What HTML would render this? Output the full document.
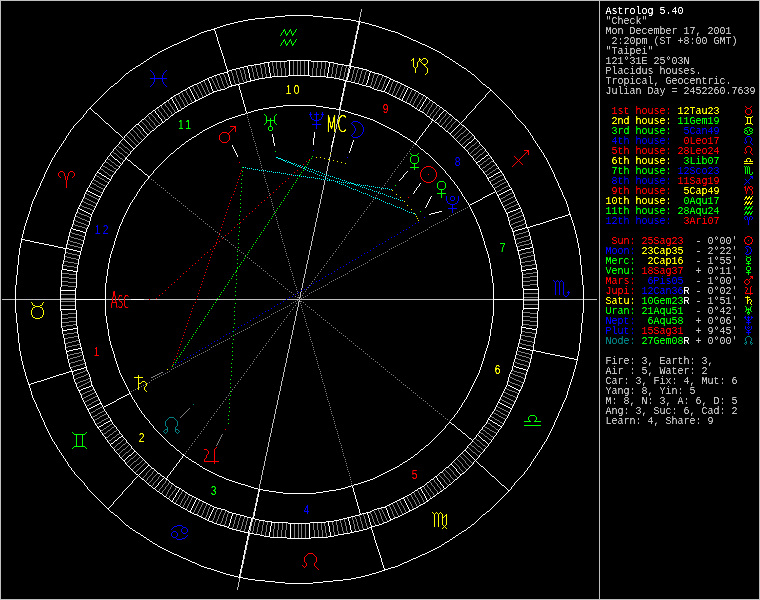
<!DOCTYPE html><html><head><meta charset="utf-8"><title>Astrolog 5.40</title><style>
html,body{margin:0;padding:0;background:#000;}body{width:760px;height:600px;overflow:hidden;}
svg{display:block;}
text{white-space:pre;}
.t{font-family:"Liberation Mono",monospace;font-size:10px;}
.h{font-family:"Liberation Sans",sans-serif;font-size:12px;text-anchor:middle;}
.o{font-family:"DejaVu Sans","Liberation Sans",sans-serif;font-weight:200;font-size:23px;text-anchor:middle;}
</style></head><body>
<svg width="760" height="600" viewBox="0 0 760 600">
<defs><filter id="tx" filterUnits="userSpaceOnUse" x="0" y="0" width="760" height="600" color-interpolation-filters="sRGB"><feComponentTransfer><feFuncA type="linear" slope="2.2" intercept="-0.5"/></feComponentTransfer></filter><filter id="ty" filterUnits="userSpaceOnUse" x="0" y="0" width="760" height="600" color-interpolation-filters="sRGB"><feComponentTransfer><feFuncA type="linear" slope="3" intercept="-0.4"/></feComponentTransfer></filter></defs>
<rect width="760" height="600" fill="#000"/>
<g shape-rendering="crispEdges">
<path fill="#c0c0c0" d="M0 0h760v1h-760zM2 299h13v1h-13zM16 299h44v1h-44zM61 299h14v1h-14zM106 299h25v1h-25zM144 299h5v1h-5zM150 299h46v1h-46zM197 299h38v1h-38zM236 299h50v1h-50zM287 299h12v1h-12zM300 299h193v1h-193zM524 299h14v1h-14zM539 299h44v1h-44zM584 299h13v1h-13zM0 599h760v1h-760zM0 1v598h1v-598zM237 587v3h1v-3zM238 582v5h1v-5zM239 578v4h1v-4zM240 574v3h1v-3zM241 569v4h1v-4zM242 565v3h1v-3zM243 560v4h1v-4zM244 555v4h1v-4zM245 550v4h1v-4zM246 545v5h1v-5zM247 541v4h1v-4zM248 536v4h1v-4zM249 531v2h1v-2zM249 534v2h1v-2zM250 526v5h1v-5zM251 522v4h1v-4zM252 517v1h1v-1zM252 519v3h1v-3zM253 512v4h1v-4zM254 508v3h1v-3zM255 503v3h1v-3zM256 498v4h1v-4zM257 494v3h1v-3zM258 490v2h1v-2zM259 484v5h1v-5zM260 480v4h1v-4zM261 475v5h1v-5zM262 470v5h1v-5zM263 466v4h1v-4zM264 461v5h1v-5zM265 456v5h1v-5zM266 452v4h1v-4zM267 447v5h1v-5zM268 442v5h1v-5zM269 437v5h1v-5zM270 433v4h1v-4zM271 428v5h1v-5zM272 423v5h1v-5zM273 419v4h1v-4zM274 414v5h1v-5zM275 409v5h1v-5zM276 405v4h1v-4zM277 400v5h1v-5zM278 395v5h1v-5zM279 391v4h1v-4zM280 386v5h1v-5zM281 381v5h1v-5zM282 377v4h1v-4zM283 372v5h1v-5zM284 367v5h1v-5zM285 363v4h1v-4zM286 358v5h1v-5zM287 353v5h1v-5zM288 349v4h1v-4zM289 344v5h1v-5zM290 339v5h1v-5zM291 335v4h1v-4zM292 330v5h1v-5zM293 325v5h1v-5zM294 321v4h1v-4zM295 316v5h1v-5zM296 311v5h1v-5zM297 307v4h1v-4zM298 302v5h1v-5zM299 297v2h1v-2zM299 300v2h1v-2zM300 292v5h1v-5zM301 288v2h1v-2zM301 291v1h1v-1zM302 283v5h1v-5zM303 278v5h1v-5zM304 274v4h1v-4zM305 269v5h1v-5zM306 264v5h1v-5zM307 260v4h1v-4zM308 255v5h1v-5zM309 250v5h1v-5zM310 246v4h1v-4zM311 241v5h1v-5zM312 236v5h1v-5zM313 232v4h1v-4zM314 227v5h1v-5zM315 222v5h1v-5zM316 218v4h1v-4zM317 213v5h1v-5zM318 208v5h1v-5zM319 204v4h1v-4zM320 199v5h1v-5zM321 194v5h1v-5zM322 190v4h1v-4zM323 185v5h1v-5zM324 180v5h1v-5zM325 176v1h1v-1zM325 178v1h1v-1zM326 171v3h1v-3zM326 175v1h1v-1zM327 166v5h1v-5zM328 162v4h1v-4zM329 157v2h1v-2zM329 160v2h1v-2zM330 152v1h1v-1zM330 154v3h1v-3zM331 148v4h1v-4zM332 145v2h1v-2zM333 141v2h1v-2zM334 133v2h1v-2zM334 137v1h1v-1zM335 129v4h1v-4zM336 124v5h1v-5zM337 119v5h1v-5zM338 115v4h1v-4zM339 110v5h1v-5zM340 107v2h1v-2zM341 102v3h1v-3zM342 97v4h1v-4zM343 93v3h1v-3zM344 88v3h1v-3zM345 83v4h1v-4zM346 77v3h1v-3zM346 81v1h1v-1zM347 73v4h1v-4zM348 68v5h1v-5zM349 63v2h1v-2zM349 66v2h1v-2zM350 59v4h1v-4zM351 54v4h1v-4zM352 49v5h1v-5zM353 45v4h1v-4zM354 40v4h1v-4zM355 35v4h1v-4zM356 31v3h1v-3zM357 26v4h1v-4zM358 22v3h1v-3zM359 17v4h1v-4zM360 12v5h1v-5zM361 9v3h1v-3zM599 1v598h1v-598zM759 1v598h1v-598z"/>
<path fill="#fff" d="M285 15h28v1h-28zM275 16h10v1h-10zM313 16h10v1h-10zM265 17h10v1h-10zM323 17h10v1h-10zM255 18h10v1h-10zM333 18h10v1h-10zM248 19h7v1h-7zM343 19h8v1h-8zM243 20h5v1h-5zM351 20h5v1h-5zM238 21h5v1h-5zM356 21h5v1h-5zM234 22h4v1h-4zM361 22h4v1h-4zM230 23h4v1h-4zM365 23h4v1h-4zM226 24h4v1h-4zM369 24h3v1h-3zM223 25h3v1h-3zM372 25h4v1h-4zM220 26h3v1h-3zM376 26h3v1h-3zM217 27h3v1h-3zM379 27h3v1h-3zM214 28h3v1h-3zM382 28h3v1h-3zM211 29h4v1h-4zM385 29h3v1h-3zM207 30h4v1h-4zM388 30h3v1h-3zM204 31h3v1h-3zM391 31h4v1h-4zM201 32h3v1h-3zM395 32h3v1h-3zM199 33h2v1h-2zM398 33h2v1h-2zM197 34h2v1h-2zM400 34h2v1h-2zM195 35h2v1h-2zM402 35h2v1h-2zM192 36h3v1h-3zM404 36h3v1h-3zM190 37h2v1h-2zM407 37h2v1h-2zM188 38h2v1h-2zM409 38h2v1h-2zM186 39h2v1h-2zM411 39h2v1h-2zM183 40h3v1h-3zM413 40h3v1h-3zM181 41h2v1h-2zM416 41h2v1h-2zM179 42h2v1h-2zM418 42h2v1h-2zM177 43h2v1h-2zM420 43h2v1h-2zM174 44h3v1h-3zM422 44h3v1h-3zM172 45h2v1h-2zM425 45h2v1h-2zM170 46h2v1h-2zM427 46h2v1h-2zM168 47h2v1h-2zM429 47h2v1h-2zM166 48h2v1h-2zM431 48h2v1h-2zM164 49h2v1h-2zM433 49h2v1h-2zM162 50h2v1h-2zM435 50h2v1h-2zM160 51h2v1h-2zM437 51h2v1h-2zM158 52h2v1h-2zM439 52h2v1h-2zM155 54h2v1h-2zM442 54h2v1h-2zM153 55h2v1h-2zM445 56h2v1h-2zM150 57h2v1h-2zM447 57h2v1h-2zM147 59h2v1h-2zM450 59h2v1h-2zM287 60h24v1h-24zM144 61h2v1h-2zM270 61h17v1h-17zM311 61h17v1h-17zM453 61h2v1h-2zM264 62h6v1h-6zM328 62h6v1h-6zM141 63h2v1h-2zM260 63h4v1h-4zM334 63h4v1h-4zM456 63h2v1h-2zM254 64h6v1h-6zM338 64h6v1h-6zM138 65h2v1h-2zM248 65h6v1h-6zM344 65h7v1h-7zM459 65h2v1h-2zM136 66h2v1h-2zM244 66h4v1h-4zM350 66h4v1h-4zM240 67h4v1h-4zM354 67h5v1h-5zM462 67h2v1h-2zM133 68h2v1h-2zM236 68h4v1h-4zM359 68h4v1h-4zM464 68h2v1h-2zM232 69h4v1h-4zM363 69h4v1h-4zM130 70h2v1h-2zM229 70h3v1h-3zM367 70h2v1h-2zM227 71h2v1h-2zM369 71h3v1h-3zM468 71h2v1h-2zM224 72h4v1h-4zM372 72h3v1h-3zM126 73h2v1h-2zM220 73h4v1h-4zM375 73h4v1h-4zM217 74h3v1h-3zM379 74h3v1h-3zM472 74h2v1h-2zM214 75h3v1h-3zM288 75h22v1h-22zM382 75h2v1h-2zM212 76h2v1h-2zM272 76h16v1h-16zM310 76h16v1h-16zM384 76h3v1h-3zM209 77h3v1h-3zM265 77h7v1h-7zM326 77h8v1h-8zM387 77h2v1h-2zM207 78h2v1h-2zM259 78h6v1h-6zM334 78h5v1h-5zM389 78h2v1h-2zM205 79h2v1h-2zM255 79h4v1h-4zM339 79h4v1h-4zM390 79h3v1h-3zM203 80h2v1h-2zM250 80h5v1h-5zM343 80h4v1h-4zM393 80h2v1h-2zM201 81h2v1h-2zM247 81h4v1h-4zM347 81h4v1h-4zM395 81h3v1h-3zM199 82h2v1h-2zM244 82h3v1h-3zM351 82h4v1h-4zM398 82h2v1h-2zM115 83h2v1h-2zM197 83h2v1h-2zM240 83h4v1h-4zM355 83h4v1h-4zM400 83h2v1h-2zM194 84h3v1h-3zM236 84h4v1h-4zM359 84h3v1h-3zM402 84h2v1h-2zM483 84h2v1h-2zM192 85h2v1h-2zM231 85h5v1h-5zM362 85h4v1h-4zM404 85h2v1h-2zM111 86h2v1h-2zM190 86h2v1h-2zM229 86h3v1h-3zM366 86h4v1h-4zM406 86h2v1h-2zM188 87h2v1h-2zM227 87h2v1h-2zM370 87h2v1h-2zM408 87h2v1h-2zM487 87h2v1h-2zM225 88h2v1h-2zM372 88h2v1h-2zM410 88h2v1h-2zM185 89h2v1h-2zM221 89h4v1h-4zM374 89h3v1h-3zM412 89h2v1h-2zM183 90h2v1h-2zM217 90h4v1h-4zM377 90h4v1h-4zM414 90h2v1h-2zM490 90h2v1h-2zM181 91h2v1h-2zM213 91h4v1h-4zM381 91h4v1h-4zM416 91h2v1h-2zM212 92h2v1h-2zM385 92h2v1h-2zM178 93h2v1h-2zM210 93h2v1h-2zM387 93h2v1h-2zM419 93h2v1h-2zM176 94h2v1h-2zM208 94h2v1h-2zM389 94h2v1h-2zM421 94h2v1h-2zM174 95h2v1h-2zM206 95h2v1h-2zM391 95h2v1h-2zM423 95h2v1h-2zM204 96h2v1h-2zM393 96h2v1h-2zM171 97h2v1h-2zM202 97h2v1h-2zM395 97h2v1h-2zM426 97h2v1h-2zM170 98h2v1h-2zM200 98h2v1h-2zM397 98h2v1h-2zM198 99h2v1h-2zM399 99h2v1h-2zM167 100h2v1h-2zM195 100h3v1h-3zM401 100h2v1h-2zM430 100h2v1h-2zM194 101h2v1h-2zM403 101h2v1h-2zM164 102h2v1h-2zM192 102h2v1h-2zM405 102h2v1h-2zM433 102h2v1h-2zM190 103h2v1h-2zM407 103h2v1h-2zM188 104h2v1h-2zM409 104h2v1h-2zM160 105h2v1h-2zM283 105h33v1h-33zM437 105h2v1h-2zM185 106h2v1h-2zM276 106h7v1h-7zM316 106h7v1h-7zM412 106h2v1h-2zM157 107h2v1h-2zM269 107h7v1h-7zM323 107h6v1h-6zM440 107h2v1h-2zM89 108h2v1h-2zM182 108h2v1h-2zM263 108h6v1h-6zM329 108h7v1h-7zM415 108h2v1h-2zM258 109h5v1h-5zM336 109h5v1h-5zM153 110h2v1h-2zM178 110h3v1h-3zM254 110h4v1h-4zM341 110h4v1h-4zM418 110h2v1h-2zM444 110h2v1h-2zM177 111h2v1h-2zM251 111h3v1h-3zM345 111h3v1h-3zM420 111h2v1h-2zM175 112h2v1h-2zM248 112h3v1h-3zM348 112h3v1h-3zM422 112h2v1h-2zM95 113h2v1h-2zM149 113h2v1h-2zM351 113h3v1h-3zM241 114h4v1h-4zM354 114h4v1h-4zM449 114h2v1h-2zM171 115h2v1h-2zM238 115h3v1h-3zM358 115h3v1h-3zM235 116h3v1h-3zM361 116h3v1h-3zM427 116h2v1h-2zM232 117h3v1h-3zM364 117h3v1h-3zM229 118h3v1h-3zM367 118h3v1h-3zM142 119h2v1h-2zM166 119h2v1h-2zM226 119h3v1h-3zM370 119h3v1h-3zM431 119h2v1h-2zM455 119h2v1h-2zM224 120h2v1h-2zM373 120h2v1h-2zM432 120h2v1h-2zM222 121h2v1h-2zM375 121h2v1h-2zM162 122h2v1h-2zM219 122h3v1h-3zM377 122h2v1h-2zM435 122h2v1h-2zM106 123h2v1h-2zM217 123h2v1h-2zM379 123h2v1h-2zM136 124h3v1h-3zM215 124h2v1h-2zM381 124h2v1h-2zM158 125h2v1h-2zM213 125h2v1h-2zM383 125h2v1h-2zM462 125h2v1h-2zM211 126h2v1h-2zM385 126h2v1h-2zM440 126h2v1h-2zM209 127h2v1h-2zM387 127h2v1h-2zM207 128h2v1h-2zM389 128h2v1h-2zM205 129h2v1h-2zM391 129h2v1h-2zM152 130h2v1h-2zM203 130h2v1h-2zM393 130h2v1h-2zM395 131h2v1h-2zM446 131h2v1h-2zM116 132h2v1h-2zM200 132h2v1h-2zM397 132h2v1h-2zM449 133h2v1h-2zM147 134h2v1h-2zM197 134h2v1h-2zM400 134h2v1h-2zM194 136h2v1h-2zM403 136h2v1h-2zM192 137h2v1h-2zM405 137h2v1h-2zM474 138h2v1h-2zM189 139h2v1h-2zM408 139h2v1h-2zM186 141h2v1h-2zM411 141h2v1h-2zM469 142h2v1h-2zM414 143h2v1h-2zM182 144h2v1h-2zM415 144h2v1h-2zM463 147h2v1h-2zM133 148h2v1h-2zM177 148h2v1h-2zM421 149h2v1h-2zM171 153h2v1h-2zM426 153h2v1h-2zM486 155h2v1h-2zM125 158h2v1h-2zM482 158h2v1h-2zM115 159h2v1h-2zM128 160h2v1h-2zM478 161h2v1h-2zM476 162h2v1h-2zM134 165h2v1h-2zM139 169h2v1h-2zM500 171h2v1h-2zM97 172h2v1h-2zM498 172h2v1h-2zM99 173h2v1h-2zM496 173h2v1h-2zM145 174h2v1h-2zM494 174h2v1h-2zM102 175h2v1h-2zM104 176h2v1h-2zM148 176h2v1h-2zM491 176h2v1h-2zM489 177h2v1h-2zM107 178h2v1h-2zM487 178h2v1h-2zM109 179h2v1h-2zM509 189h3v1h-3zM86 190h2v1h-2zM507 190h2v1h-2zM88 191h2v1h-2zM505 191h2v1h-2zM90 192h2v1h-2zM493 192h2v1h-2zM503 192h2v1h-2zM92 193h2v1h-2zM491 193h2v1h-2zM501 193h2v1h-2zM94 194h2v1h-2zM489 194h2v1h-2zM499 194h2v1h-2zM96 195h2v1h-2zM487 195h2v1h-2zM497 195h2v1h-2zM98 196h3v1h-3zM485 196h2v1h-2zM483 197h2v1h-2zM480 199h2v1h-2zM478 200h2v1h-2zM476 201h2v1h-2zM474 202h2v1h-2zM472 203h2v1h-2zM470 204h2v1h-2zM78 208h2v1h-2zM518 208h3v1h-3zM80 209h2v1h-2zM516 209h2v1h-2zM82 210h2v1h-2zM513 210h3v1h-3zM84 211h2v1h-2zM439 211h3v1h-3zM510 211h3v1h-3zM86 212h2v1h-2zM435 212h4v1h-4zM508 212h2v1h-2zM88 213h2v1h-2zM431 213h4v1h-4zM506 213h2v1h-2zM90 214h2v1h-2zM429 214h2v1h-2zM568 214h3v1h-3zM565 215h3v1h-3zM562 216h3v1h-3zM558 217h4v1h-4zM555 218h3v1h-3zM552 219h3v1h-3zM549 220h3v1h-3zM546 221h3v1h-3zM543 222h3v1h-3zM540 223h3v1h-3zM536 224h4v1h-4zM533 225h3v1h-3zM530 226h3v1h-3zM525 227h5v1h-5zM71 228h2v1h-2zM522 228h3v1h-3zM73 229h3v1h-3zM518 229h4v1h-4zM76 230h4v1h-4zM515 230h3v1h-3zM80 231h3v1h-3zM512 231h3v1h-3zM83 232h3v1h-3zM21 239h4v1h-4zM25 240h5v1h-5zM30 241h4v1h-4zM34 242h5v1h-5zM39 243h5v1h-5zM44 244h5v1h-5zM49 245h5v1h-5zM54 246h4v1h-4zM58 247h5v1h-5zM530 247h3v1h-3zM63 248h6v1h-6zM525 248h5v1h-5zM69 249h4v1h-4zM521 249h4v1h-4zM73 250h4v1h-4zM517 250h4v1h-4zM77 251h4v1h-4zM532 268h5v1h-5zM62 269h5v1h-5zM526 269h6v1h-6zM67 270h6v1h-6zM521 270h5v1h-5zM73 271h5v1h-5zM523 289h16v1h-16zM60 290h16v1h-16zM75 299h31v1h-31zM131 299h13v1h-13zM493 299h31v1h-31zM523 308h16v1h-16zM60 309h16v1h-16zM521 327h5v1h-5zM73 328h5v1h-5zM526 328h6v1h-6zM67 329h6v1h-6zM532 329h5v1h-5zM62 330h5v1h-5zM519 347h3v1h-3zM78 348h4v1h-4zM522 348h4v1h-4zM73 349h5v1h-5zM526 349h4v1h-4zM69 350h4v1h-4zM530 350h6v1h-6zM66 351h3v1h-3zM536 351h5v1h-5zM541 352h4v1h-4zM545 353h5v1h-5zM550 354h5v1h-5zM555 355h5v1h-5zM560 356h5v1h-5zM565 357h4v1h-4zM569 358h5v1h-5zM574 359h4v1h-4zM514 366h2v1h-2zM84 367h3v1h-3zM516 367h3v1h-3zM81 368h3v1h-3zM519 368h4v1h-4zM77 369h4v1h-4zM523 369h3v1h-3zM74 370h3v1h-3zM526 370h2v1h-2zM69 371h5v1h-5zM66 372h3v1h-3zM63 373h3v1h-3zM59 374h4v1h-4zM56 375h3v1h-3zM53 376h3v1h-3zM50 377h3v1h-3zM47 378h3v1h-3zM44 379h3v1h-3zM41 380h3v1h-3zM37 381h4v1h-4zM34 382h3v1h-3zM31 383h3v1h-3zM28 384h3v1h-3zM91 385h2v1h-2zM508 385h2v1h-2zM89 386h2v1h-2zM510 386h2v1h-2zM86 387h3v1h-3zM512 387h2v1h-2zM83 388h3v1h-3zM514 388h2v1h-2zM81 389h2v1h-2zM516 389h2v1h-2zM78 390h3v1h-3zM518 390h3v1h-3zM129 393h2v1h-2zM127 394h2v1h-2zM125 395h2v1h-2zM123 396h2v1h-2zM121 397h2v1h-2zM119 398h2v1h-2zM117 399h2v1h-2zM114 401h2v1h-2zM112 402h2v1h-2zM498 402h2v1h-2zM99 403h3v1h-3zM110 403h2v1h-2zM500 403h2v1h-2zM97 404h2v1h-2zM108 404h2v1h-2zM502 404h2v1h-2zM95 405h2v1h-2zM106 405h2v1h-2zM504 405h2v1h-2zM93 406h2v1h-2zM104 406h2v1h-2zM506 406h2v1h-2zM91 407h2v1h-2zM508 407h2v1h-2zM89 408h2v1h-2zM510 408h2v1h-2zM87 409h2v1h-2zM488 419h2v1h-2zM110 420h2v1h-2zM490 420h2v1h-2zM108 421h2v1h-2zM106 422h2v1h-2zM449 422h2v1h-2zM493 422h2v1h-2zM104 423h2v1h-2zM495 423h2v1h-2zM452 424h2v1h-2zM101 425h2v1h-2zM498 425h2v1h-2zM99 426h2v1h-2zM500 426h2v1h-2zM97 427h2v1h-2zM458 429h2v1h-2zM463 433h2v1h-2zM121 436h2v1h-2zM119 437h2v1h-2zM469 438h2v1h-2zM115 440h2v1h-2zM483 440h2v1h-2zM111 443h2v1h-2zM171 445h2v1h-2zM426 445h2v1h-2zM421 449h2v1h-2zM177 450h2v1h-2zM464 450h2v1h-2zM134 451h2v1h-2zM182 454h2v1h-2zM415 454h2v1h-2zM129 455h2v1h-2zM183 455h2v1h-2zM186 457h2v1h-2zM411 457h2v1h-2zM189 459h2v1h-2zM408 459h2v1h-2zM123 460h2v1h-2zM192 461h2v1h-2zM405 461h2v1h-2zM194 462h2v1h-2zM403 462h2v1h-2zM197 464h2v1h-2zM400 464h2v1h-2zM450 464h2v1h-2zM148 465h2v1h-2zM200 466h2v1h-2zM397 466h2v1h-2zM481 466h2v1h-2zM395 467h2v1h-2zM446 467h2v1h-2zM152 468h2v1h-2zM203 468h2v1h-2zM393 468h2v1h-2zM205 469h2v1h-2zM391 469h2v1h-2zM207 470h2v1h-2zM389 470h2v1h-2zM209 471h2v1h-2zM387 471h2v1h-2zM211 472h2v1h-2zM385 472h2v1h-2zM440 472h2v1h-2zM158 473h2v1h-2zM213 473h2v1h-2zM383 473h2v1h-2zM462 473h2v1h-2zM136 474h2v1h-2zM215 474h2v1h-2zM381 474h2v1h-2zM460 474h2v1h-2zM217 475h2v1h-2zM379 475h2v1h-2zM162 476h2v1h-2zM219 476h3v1h-3zM377 476h2v1h-2zM435 476h2v1h-2zM492 476h2v1h-2zM222 477h2v1h-2zM375 477h2v1h-2zM165 478h2v1h-2zM224 478h2v1h-2zM373 478h2v1h-2zM142 479h2v1h-2zM166 479h2v1h-2zM226 479h3v1h-3zM370 479h3v1h-3zM431 479h2v1h-2zM455 479h2v1h-2zM229 480h3v1h-3zM367 480h3v1h-3zM232 481h3v1h-3zM364 481h3v1h-3zM235 482h3v1h-3zM361 482h3v1h-3zM427 482h2v1h-2zM171 483h2v1h-2zM238 483h3v1h-3zM358 483h3v1h-3zM241 484h4v1h-4zM354 484h4v1h-4zM449 484h2v1h-2zM149 485h2v1h-2zM245 485h3v1h-3zM502 485h2v1h-2zM175 486h2v1h-2zM248 486h3v1h-3zM348 486h3v1h-3zM422 486h2v1h-2zM177 487h2v1h-2zM251 487h3v1h-3zM345 487h3v1h-3zM420 487h2v1h-2zM153 488h2v1h-2zM179 488h2v1h-2zM254 488h4v1h-4zM341 488h4v1h-4zM418 488h3v1h-3zM444 488h2v1h-2zM258 489h5v1h-5zM336 489h5v1h-5zM182 490h2v1h-2zM263 490h6v1h-6zM329 490h7v1h-7zM415 490h2v1h-2zM508 490h2v1h-2zM157 491h2v1h-2zM269 491h7v1h-7zM323 491h6v1h-6zM440 491h2v1h-2zM185 492h2v1h-2zM276 492h7v1h-7zM316 492h7v1h-7zM412 492h2v1h-2zM160 493h2v1h-2zM283 493h33v1h-33zM437 493h2v1h-2zM188 494h2v1h-2zM409 494h2v1h-2zM190 495h2v1h-2zM407 495h2v1h-2zM164 496h2v1h-2zM192 496h2v1h-2zM405 496h2v1h-2zM433 496h2v1h-2zM194 497h2v1h-2zM403 497h2v1h-2zM167 498h2v1h-2zM196 498h2v1h-2zM401 498h3v1h-3zM430 498h2v1h-2zM198 499h2v1h-2zM399 499h2v1h-2zM200 500h2v1h-2zM397 500h2v1h-2zM427 500h2v1h-2zM171 501h2v1h-2zM202 501h2v1h-2zM395 501h2v1h-2zM426 501h2v1h-2zM204 502h2v1h-2zM393 502h2v1h-2zM174 503h2v1h-2zM206 503h2v1h-2zM391 503h2v1h-2zM423 503h2v1h-2zM176 504h2v1h-2zM208 504h2v1h-2zM389 504h2v1h-2zM421 504h2v1h-2zM178 505h2v1h-2zM210 505h2v1h-2zM387 505h2v1h-2zM419 505h2v1h-2zM212 506h2v1h-2zM385 506h2v1h-2zM181 507h2v1h-2zM214 507h3v1h-3zM381 507h5v1h-5zM416 507h2v1h-2zM107 508h2v1h-2zM183 508h2v1h-2zM217 508h4v1h-4zM377 508h4v1h-4zM414 508h2v1h-2zM185 509h2v1h-2zM221 509h4v1h-4zM374 509h3v1h-3zM412 509h2v1h-2zM225 510h2v1h-2zM372 510h2v1h-2zM409 510h3v1h-3zM188 511h3v1h-3zM227 511h2v1h-2zM370 511h2v1h-2zM408 511h2v1h-2zM487 511h2v1h-2zM111 512h2v1h-2zM190 512h2v1h-2zM229 512h3v1h-3zM366 512h4v1h-4zM406 512h2v1h-2zM192 513h2v1h-2zM232 513h4v1h-4zM362 513h4v1h-4zM404 513h2v1h-2zM194 514h3v1h-3zM236 514h4v1h-4zM359 514h3v1h-3zM402 514h2v1h-2zM483 514h2v1h-2zM115 515h2v1h-2zM197 515h2v1h-2zM240 515h4v1h-4zM355 515h4v1h-4zM400 515h2v1h-2zM199 516h2v1h-2zM244 516h3v1h-3zM351 516h4v1h-4zM398 516h2v1h-2zM201 517h2v1h-2zM247 517h4v1h-4zM347 517h4v1h-4zM395 517h3v1h-3zM203 518h2v1h-2zM251 518h4v1h-4zM343 518h4v1h-4zM393 518h2v1h-2zM205 519h2v1h-2zM255 519h4v1h-4zM339 519h4v1h-4zM390 519h3v1h-3zM207 520h2v1h-2zM259 520h6v1h-6zM334 520h5v1h-5zM389 520h2v1h-2zM209 521h3v1h-3zM265 521h7v1h-7zM326 521h8v1h-8zM387 521h2v1h-2zM212 522h2v1h-2zM271 522h17v1h-17zM310 522h16v1h-16zM384 522h3v1h-3zM214 523h3v1h-3zM288 523h22v1h-22zM382 523h2v1h-2zM217 524h3v1h-3zM379 524h3v1h-3zM472 524h2v1h-2zM126 525h2v1h-2zM220 525h4v1h-4zM375 525h4v1h-4zM224 526h3v1h-3zM371 526h4v1h-4zM227 527h2v1h-2zM369 527h3v1h-3zM468 527h2v1h-2zM130 528h2v1h-2zM229 528h3v1h-3zM367 528h2v1h-2zM232 529h4v1h-4zM363 529h4v1h-4zM133 530h2v1h-2zM236 530h4v1h-4zM359 530h4v1h-4zM464 530h2v1h-2zM240 531h4v1h-4zM354 531h5v1h-5zM462 531h2v1h-2zM136 532h2v1h-2zM244 532h5v1h-5zM350 532h4v1h-4zM138 533h2v1h-2zM248 533h6v1h-6zM344 533h6v1h-6zM459 533h2v1h-2zM254 534h6v1h-6zM338 534h6v1h-6zM141 535h2v1h-2zM260 535h4v1h-4zM334 535h4v1h-4zM456 535h2v1h-2zM264 536h6v1h-6zM328 536h6v1h-6zM144 537h2v1h-2zM270 537h17v1h-17zM311 537h17v1h-17zM453 537h2v1h-2zM287 538h24v1h-24zM147 539h2v1h-2zM450 539h2v1h-2zM150 541h2v1h-2zM447 541h2v1h-2zM445 542h2v1h-2zM153 543h2v1h-2zM155 544h2v1h-2zM442 544h2v1h-2zM158 546h2v1h-2zM439 546h2v1h-2zM160 547h2v1h-2zM437 547h2v1h-2zM162 548h2v1h-2zM435 548h2v1h-2zM164 549h2v1h-2zM433 549h2v1h-2zM166 550h2v1h-2zM431 550h2v1h-2zM168 551h2v1h-2zM429 551h2v1h-2zM170 552h2v1h-2zM427 552h2v1h-2zM172 553h2v1h-2zM425 553h2v1h-2zM174 554h3v1h-3zM422 554h3v1h-3zM177 555h2v1h-2zM420 555h2v1h-2zM179 556h2v1h-2zM418 556h2v1h-2zM181 557h2v1h-2zM416 557h2v1h-2zM183 558h3v1h-3zM413 558h3v1h-3zM186 559h2v1h-2zM411 559h2v1h-2zM188 560h2v1h-2zM409 560h2v1h-2zM190 561h2v1h-2zM407 561h2v1h-2zM192 562h3v1h-3zM404 562h3v1h-3zM195 563h2v1h-2zM402 563h2v1h-2zM197 564h2v1h-2zM400 564h2v1h-2zM199 565h2v1h-2zM398 565h2v1h-2zM201 566h3v1h-3zM395 566h3v1h-3zM204 567h3v1h-3zM391 567h4v1h-4zM207 568h4v1h-4zM388 568h3v1h-3zM211 569h3v1h-3zM384 569h4v1h-4zM214 570h3v1h-3zM382 570h3v1h-3zM217 571h3v1h-3zM379 571h3v1h-3zM220 572h3v1h-3zM376 572h3v1h-3zM223 573h3v1h-3zM372 573h4v1h-4zM226 574h4v1h-4zM369 574h3v1h-3zM230 575h4v1h-4zM365 575h4v1h-4zM234 576h4v1h-4zM361 576h4v1h-4zM238 577h5v1h-5zM356 577h5v1h-5zM243 578h5v1h-5zM351 578h5v1h-5zM248 579h7v1h-7zM343 579h8v1h-8zM255 580h10v1h-10zM333 580h10v1h-10zM265 581h10v1h-10zM323 581h10v1h-10zM275 582h10v1h-10zM313 582h10v1h-10zM285 583h28v1h-28zM15 285v28h1v-28zM16 275v10h1v-10zM16 313v10h1v-10zM17 265v10h1v-10zM17 323v10h1v-10zM18 255v10h1v-10zM18 333v10h1v-10zM19 248v7h1v-7zM19 343v8h1v-8zM20 243v5h1v-5zM20 351v5h1v-5zM21 238v1h1v-1zM21 240v3h1v-3zM21 356v5h1v-5zM22 234v4h1v-4zM22 361v4h1v-4zM23 230v4h1v-4zM23 365v4h1v-4zM24 226v4h1v-4zM24 369v3h1v-3zM25 223v3h1v-3zM25 372v4h1v-4zM26 220v3h1v-3zM26 376v3h1v-3zM27 217v3h1v-3zM27 379v3h1v-3zM28 214v3h1v-3zM28 382v2h1v-2zM29 211v3h1v-3zM29 385v3h1v-3zM30 207v4h1v-4zM30 388v3h1v-3zM31 204v3h1v-3zM31 391v4h1v-4zM32 201v3h1v-3zM32 395v3h1v-3zM33 199v2h1v-2zM33 398v2h1v-2zM34 197v2h1v-2zM34 400v2h1v-2zM35 195v2h1v-2zM35 402v2h1v-2zM36 192v3h1v-3zM36 404v3h1v-3zM37 190v2h1v-2zM37 407v2h1v-2zM38 188v2h1v-2zM38 409v2h1v-2zM39 186v2h1v-2zM39 411v2h1v-2zM40 183v3h1v-3zM40 413v3h1v-3zM41 181v2h1v-2zM41 416v2h1v-2zM42 179v2h1v-2zM42 418v2h1v-2zM43 177v2h1v-2zM43 420v2h1v-2zM44 174v3h1v-3zM44 422v3h1v-3zM45 172v2h1v-2zM45 425v2h1v-2zM46 170v2h1v-2zM46 427v2h1v-2zM47 168v2h1v-2zM47 429v2h1v-2zM48 166v2h1v-2zM48 431v2h1v-2zM49 164v2h1v-2zM49 433v2h1v-2zM50 162v2h1v-2zM50 435v2h1v-2zM51 160v2h1v-2zM51 437v2h1v-2zM52 158v2h1v-2zM52 439v2h1v-2zM53 157v1h1v-1zM53 441v1h1v-1zM54 155v2h1v-2zM54 442v2h1v-2zM55 153v2h1v-2zM55 444v1h1v-1zM56 152v1h1v-1zM56 445v2h1v-2zM57 150v2h1v-2zM57 447v2h1v-2zM58 149v1h1v-1zM58 449v1h1v-1zM59 147v2h1v-2zM59 450v2h1v-2zM60 146v1h1v-1zM60 287v3h1v-3zM60 291v18h1v-18zM60 310v1h1v-1zM60 452v1h1v-1zM61 144v2h1v-2zM61 270v17h1v-17zM61 311v17h1v-17zM61 453v2h1v-2zM62 143v1h1v-1zM62 264v5h1v-5zM62 328v2h1v-2zM62 331v3h1v-3zM62 455v1h1v-1zM63 141v2h1v-2zM63 260v4h1v-4zM63 334v4h1v-4zM63 456v2h1v-2zM64 140v1h1v-1zM64 254v6h1v-6zM64 338v6h1v-6zM64 458v1h1v-1zM65 138v2h1v-2zM65 249v5h1v-5zM65 344v6h1v-6zM65 459v2h1v-2zM66 136v2h1v-2zM66 244v4h1v-4zM66 350v1h1v-1zM66 352v2h1v-2zM66 461v1h1v-1zM67 135v1h1v-1zM67 240v4h1v-4zM67 354v5h1v-5zM67 462v2h1v-2zM68 133v2h1v-2zM68 236v4h1v-4zM68 359v4h1v-4zM68 464v2h1v-2zM69 132v1h1v-1zM69 232v4h1v-4zM69 363v4h1v-4zM69 466v1h1v-1zM70 130v2h1v-2zM70 229v3h1v-3zM70 367v2h1v-2zM70 467v1h1v-1zM71 129v1h1v-1zM71 227v1h1v-1zM71 369v2h1v-2zM71 468v2h1v-2zM72 128v1h1v-1zM72 224v3h1v-3zM72 372v3h1v-3zM72 470v1h1v-1zM73 126v2h1v-2zM73 220v4h1v-4zM73 375v4h1v-4zM73 471v1h1v-1zM74 125v1h1v-1zM74 217v3h1v-3zM74 379v3h1v-3zM74 472v2h1v-2zM75 124v1h1v-1zM75 214v3h1v-3zM75 288v2h1v-2zM75 291v8h1v-8zM75 300v9h1v-9zM75 382v2h1v-2zM75 474v1h1v-1zM76 123v1h1v-1zM76 212v2h1v-2zM76 272v16h1v-16zM76 310v16h1v-16zM76 384v3h1v-3zM76 475v1h1v-1zM77 122v1h1v-1zM77 209v3h1v-3zM77 265v6h1v-6zM77 326v2h1v-2zM77 329v5h1v-5zM77 387v2h1v-2zM77 476v1h1v-1zM78 121v1h1v-1zM78 207v1h1v-1zM78 259v6h1v-6zM78 334v5h1v-5zM78 389v1h1v-1zM78 477v1h1v-1zM79 120v1h1v-1zM79 205v2h1v-2zM79 255v4h1v-4zM79 339v4h1v-4zM79 391v2h1v-2zM79 478v1h1v-1zM80 119v1h1v-1zM80 203v2h1v-2zM80 252v3h1v-3zM80 343v4h1v-4zM80 393v2h1v-2zM80 479v1h1v-1zM81 118v1h1v-1zM81 201v2h1v-2zM81 247v4h1v-4zM81 347v1h1v-1zM81 349v2h1v-2zM81 395v3h1v-3zM81 480v1h1v-1zM82 117v1h1v-1zM82 199v2h1v-2zM82 244v3h1v-3zM82 351v4h1v-4zM82 398v2h1v-2zM82 481v1h1v-1zM83 115v2h1v-2zM83 197v2h1v-2zM83 240v4h1v-4zM83 355v4h1v-4zM83 400v2h1v-2zM83 482v1h1v-1zM84 114v1h1v-1zM84 194v3h1v-3zM84 236v4h1v-4zM84 359v3h1v-3zM84 402v2h1v-2zM84 483v2h1v-2zM85 113v1h1v-1zM85 192v2h1v-2zM85 233v3h1v-3zM85 362v4h1v-4zM85 404v2h1v-2zM85 485v1h1v-1zM86 111v2h1v-2zM86 191v1h1v-1zM86 229v3h1v-3zM86 366v1h1v-1zM86 368v2h1v-2zM86 406v2h1v-2zM86 486v1h1v-1zM87 110v1h1v-1zM87 188v2h1v-2zM87 227v2h1v-2zM87 370v2h1v-2zM87 408v1h1v-1zM87 487v2h1v-2zM88 109v1h1v-1zM88 187v1h1v-1zM88 225v2h1v-2zM88 372v2h1v-2zM88 410v2h1v-2zM88 489v1h1v-1zM89 185v2h1v-2zM89 221v4h1v-4zM89 374v3h1v-3zM89 412v2h1v-2zM89 490v1h1v-1zM90 107v1h1v-1zM90 183v2h1v-2zM90 217v4h1v-4zM90 377v4h1v-4zM90 414v2h1v-2zM90 491v1h1v-1zM91 106v1h1v-1zM91 109v1h1v-1zM91 181v2h1v-2zM91 215v2h1v-2zM91 381v4h1v-4zM91 416v2h1v-2zM91 492v1h1v-1zM92 105v1h1v-1zM92 110v1h1v-1zM92 180v1h1v-1zM92 212v2h1v-2zM92 386v1h1v-1zM92 418v1h1v-1zM92 493v1h1v-1zM93 104v1h1v-1zM93 111v1h1v-1zM93 178v2h1v-2zM93 210v2h1v-2zM93 387v2h1v-2zM93 419v2h1v-2zM93 494v1h1v-1zM94 103v1h1v-1zM94 112v1h1v-1zM94 176v2h1v-2zM94 208v2h1v-2zM94 389v2h1v-2zM94 421v2h1v-2zM94 495v1h1v-1zM95 102v1h1v-1zM95 174v2h1v-2zM95 206v2h1v-2zM95 391v2h1v-2zM95 423v2h1v-2zM95 496v1h1v-1zM96 101v1h1v-1zM96 173v1h1v-1zM96 204v2h1v-2zM96 393v2h1v-2zM96 425v1h1v-1zM96 497v1h1v-1zM97 100v1h1v-1zM97 114v1h1v-1zM97 171v1h1v-1zM97 202v2h1v-2zM97 395v2h1v-2zM97 426v1h1v-1zM97 498v1h1v-1zM98 99v1h1v-1zM98 115v1h1v-1zM98 170v1h1v-1zM98 200v2h1v-2zM98 397v2h1v-2zM98 428v1h1v-1zM98 499v1h1v-1zM99 98v1h1v-1zM99 116v1h1v-1zM99 169v1h1v-1zM99 198v2h1v-2zM99 399v2h1v-2zM99 429v1h1v-1zM99 500v1h1v-1zM100 97v1h1v-1zM100 117v1h1v-1zM100 167v2h1v-2zM100 197v1h1v-1zM100 401v2h1v-2zM100 430v2h1v-2zM100 501v1h1v-1zM101 96v1h1v-1zM101 118v1h1v-1zM101 166v1h1v-1zM101 174v1h1v-1zM101 194v2h1v-2zM101 404v1h1v-1zM101 432v1h1v-1zM101 502v1h1v-1zM102 95v1h1v-1zM102 119v1h1v-1zM102 164v2h1v-2zM102 192v2h1v-2zM102 405v2h1v-2zM102 433v2h1v-2zM102 503v1h1v-1zM103 94v1h1v-1zM103 120v1h1v-1zM103 163v1h1v-1zM103 190v2h1v-2zM103 407v2h1v-2zM103 424v1h1v-1zM103 435v1h1v-1zM103 504v1h1v-1zM104 93v1h1v-1zM104 121v1h1v-1zM104 162v1h1v-1zM104 188v2h1v-2zM104 409v2h1v-2zM104 436v1h1v-1zM104 505v1h1v-1zM105 92v1h1v-1zM105 122v1h1v-1zM105 160v2h1v-2zM105 187v1h1v-1zM105 283v16h1v-16zM105 300v16h1v-16zM105 411v1h1v-1zM105 437v2h1v-2zM105 506v1h1v-1zM106 91v1h1v-1zM106 159v1h1v-1zM106 177v1h1v-1zM106 185v2h1v-2zM106 276v7h1v-7zM106 316v7h1v-7zM106 412v2h1v-2zM106 439v1h1v-1zM106 507v1h1v-1zM107 90v1h1v-1zM107 157v2h1v-2zM107 184v1h1v-1zM107 269v7h1v-7zM107 323v6h1v-6zM107 414v1h1v-1zM107 440v2h1v-2zM108 89v1h1v-1zM108 124v1h1v-1zM108 156v1h1v-1zM108 182v2h1v-2zM108 263v6h1v-6zM108 329v7h1v-7zM108 415v2h1v-2zM108 442v1h1v-1zM108 509v1h1v-1zM109 88v1h1v-1zM109 125v1h1v-1zM109 155v1h1v-1zM109 181v1h1v-1zM109 258v5h1v-5zM109 336v5h1v-5zM109 417v1h1v-1zM109 443v1h1v-1zM109 507v1h1v-1zM109 510v1h1v-1zM110 87v1h1v-1zM110 126v1h1v-1zM110 153v2h1v-2zM110 180v1h1v-1zM110 254v4h1v-4zM110 341v4h1v-4zM110 418v2h1v-2zM110 444v2h1v-2zM110 506v1h1v-1zM110 511v1h1v-1zM111 127v1h1v-1zM111 152v1h1v-1zM111 155v1h1v-1zM111 177v2h1v-2zM111 251v3h1v-3zM111 345v3h1v-3zM111 421v1h1v-1zM111 446v1h1v-1zM111 505v1h1v-1zM112 128v1h1v-1zM112 151v1h1v-1zM112 156v1h1v-1zM112 175v2h1v-2zM112 248v3h1v-3zM112 348v3h1v-3zM112 422v2h1v-2zM112 447v1h1v-1zM112 504v1h1v-1zM113 85v1h1v-1zM113 129v1h1v-1zM113 149v2h1v-2zM113 157v1h1v-1zM113 174v1h1v-1zM113 245v3h1v-3zM113 351v3h1v-3zM113 424v1h1v-1zM113 442v1h1v-1zM113 448v1h1v-1zM113 502v2h1v-2zM113 513v1h1v-1zM114 84v1h1v-1zM114 130v1h1v-1zM114 148v1h1v-1zM114 158v1h1v-1zM114 173v1h1v-1zM114 241v4h1v-4zM114 354v4h1v-4zM114 425v1h1v-1zM114 441v1h1v-1zM114 449v2h1v-2zM114 501v1h1v-1zM114 514v1h1v-1zM115 131v1h1v-1zM115 147v1h1v-1zM115 171v2h1v-2zM115 238v3h1v-3zM115 358v3h1v-3zM115 426v1h1v-1zM115 451v1h1v-1zM115 500v1h1v-1zM116 146v1h1v-1zM116 170v1h1v-1zM116 235v3h1v-3zM116 361v3h1v-3zM116 400v1h1v-1zM116 427v2h1v-2zM116 452v1h1v-1zM116 499v1h1v-1zM117 82v1h1v-1zM117 145v1h1v-1zM117 160v1h1v-1zM117 169v1h1v-1zM117 232v3h1v-3zM117 364v3h1v-3zM117 429v1h1v-1zM117 439v1h1v-1zM117 453v1h1v-1zM117 498v1h1v-1zM117 516v1h1v-1zM118 81v1h1v-1zM118 133v1h1v-1zM118 144v1h1v-1zM118 161v1h1v-1zM118 168v1h1v-1zM118 229v3h1v-3zM118 367v3h1v-3zM118 430v1h1v-1zM118 438v1h1v-1zM118 454v1h1v-1zM118 497v1h1v-1zM118 517v1h1v-1zM119 80v1h1v-1zM119 134v1h1v-1zM119 142v2h1v-2zM119 162v1h1v-1zM119 166v2h1v-2zM119 226v3h1v-3zM119 370v3h1v-3zM119 431v2h1v-2zM119 455v2h1v-2zM119 496v1h1v-1zM119 518v1h1v-1zM120 79v1h1v-1zM120 135v1h1v-1zM120 141v1h1v-1zM120 163v1h1v-1zM120 165v1h1v-1zM120 224v2h1v-2zM120 373v2h1v-2zM120 433v1h1v-1zM120 457v1h1v-1zM120 495v1h1v-1zM120 519v1h1v-1zM121 78v1h1v-1zM121 136v1h1v-1zM121 140v1h1v-1zM121 164v1h1v-1zM121 222v2h1v-2zM121 375v2h1v-2zM121 434v1h1v-1zM121 458v1h1v-1zM121 494v1h1v-1zM121 520v1h1v-1zM122 77v1h1v-1zM122 137v1h1v-1zM122 139v1h1v-1zM122 162v2h1v-2zM122 219v3h1v-3zM122 377v2h1v-2zM122 435v1h1v-1zM122 459v1h1v-1zM122 492v2h1v-2zM122 521v1h1v-1zM123 76v1h1v-1zM123 138v1h1v-1zM123 161v1h1v-1zM123 217v2h1v-2zM123 379v2h1v-2zM123 437v1h1v-1zM123 491v1h1v-1zM123 522v1h1v-1zM124 75v1h1v-1zM124 136v2h1v-2zM124 139v1h1v-1zM124 160v1h1v-1zM124 215v2h1v-2zM124 381v2h1v-2zM124 438v1h1v-1zM124 461v1h1v-1zM124 490v1h1v-1zM124 523v1h1v-1zM125 74v1h1v-1zM125 135v1h1v-1zM125 140v1h1v-1zM125 159v1h1v-1zM125 213v2h1v-2zM125 383v2h1v-2zM125 439v1h1v-1zM125 459v1h1v-1zM125 462v2h1v-2zM125 489v1h1v-1zM125 524v1h1v-1zM126 134v1h1v-1zM126 141v1h1v-1zM126 157v1h1v-1zM126 211v2h1v-2zM126 385v2h1v-2zM126 440v2h1v-2zM126 458v1h1v-1zM126 464v1h1v-1zM126 488v1h1v-1zM127 133v1h1v-1zM127 142v1h1v-1zM127 156v1h1v-1zM127 159v1h1v-1zM127 209v2h1v-2zM127 387v2h1v-2zM127 442v1h1v-1zM127 457v1h1v-1zM127 465v1h1v-1zM127 487v1h1v-1zM128 72v1h1v-1zM128 132v1h1v-1zM128 143v1h1v-1zM128 155v1h1v-1zM128 207v2h1v-2zM128 389v2h1v-2zM128 443v1h1v-1zM128 456v1h1v-1zM128 466v1h1v-1zM128 486v1h1v-1zM128 526v1h1v-1zM129 71v1h1v-1zM129 131v1h1v-1zM129 144v1h1v-1zM129 154v1h1v-1zM129 205v2h1v-2zM129 391v2h1v-2zM129 444v1h1v-1zM129 467v1h1v-1zM129 485v1h1v-1zM129 527v1h1v-1zM130 130v1h1v-1zM130 145v1h1v-1zM130 152v2h1v-2zM130 161v1h1v-1zM130 203v2h1v-2zM130 394v1h1v-1zM130 445v1h1v-1zM130 468v1h1v-1zM130 484v1h1v-1zM131 129v1h1v-1zM131 146v1h1v-1zM131 151v1h1v-1zM131 162v1h1v-1zM131 202v1h1v-1zM131 395v2h1v-2zM131 446v2h1v-2zM131 454v1h1v-1zM131 469v1h1v-1zM131 483v1h1v-1zM132 69v1h1v-1zM132 128v1h1v-1zM132 147v1h1v-1zM132 150v1h1v-1zM132 163v1h1v-1zM132 200v2h1v-2zM132 397v2h1v-2zM132 448v1h1v-1zM132 453v1h1v-1zM132 470v1h1v-1zM132 481v2h1v-2zM132 529v1h1v-1zM133 127v1h1v-1zM133 149v1h1v-1zM133 164v1h1v-1zM133 199v1h1v-1zM133 399v1h1v-1zM133 449v1h1v-1zM133 452v1h1v-1zM133 471v1h1v-1zM133 480v1h1v-1zM134 126v1h1v-1zM134 197v2h1v-2zM134 400v2h1v-2zM134 450v1h1v-1zM134 472v1h1v-1zM134 479v1h1v-1zM135 67v1h1v-1zM135 125v1h1v-1zM135 147v1h1v-1zM135 196v1h1v-1zM135 402v1h1v-1zM135 473v1h1v-1zM135 478v1h1v-1zM135 531v1h1v-1zM136 146v1h1v-1zM136 166v1h1v-1zM136 194v2h1v-2zM136 403v2h1v-2zM136 452v1h1v-1zM136 477v1h1v-1zM137 145v1h1v-1zM137 167v1h1v-1zM137 192v2h1v-2zM137 405v2h1v-2zM137 453v1h1v-1zM137 476v1h1v-1zM138 123v1h1v-1zM138 144v1h1v-1zM138 168v1h1v-1zM138 191v1h1v-1zM138 407v1h1v-1zM138 454v1h1v-1zM138 475v1h1v-1zM139 122v1h1v-1zM139 125v1h1v-1zM139 143v1h1v-1zM139 189v2h1v-2zM139 408v2h1v-2zM139 455v1h1v-1zM139 474v1h1v-1zM139 476v1h1v-1zM140 64v1h1v-1zM140 121v1h1v-1zM140 126v1h1v-1zM140 142v1h1v-1zM140 188v1h1v-1zM140 410v1h1v-1zM140 456v1h1v-1zM140 473v1h1v-1zM140 477v1h1v-1zM140 534v1h1v-1zM141 120v1h1v-1zM141 127v1h1v-1zM141 141v1h1v-1zM141 170v1h1v-1zM141 186v2h1v-2zM141 411v2h1v-2zM141 457v1h1v-1zM141 472v1h1v-1zM141 478v1h1v-1zM142 128v1h1v-1zM142 140v1h1v-1zM142 171v1h1v-1zM142 185v1h1v-1zM142 413v1h1v-1zM142 458v1h1v-1zM142 471v1h1v-1zM143 62v1h1v-1zM143 129v2h1v-2zM143 139v1h1v-1zM143 172v1h1v-1zM143 184v1h1v-1zM143 414v1h1v-1zM143 459v1h1v-1zM143 470v1h1v-1zM143 536v1h1v-1zM144 118v1h1v-1zM144 131v1h1v-1zM144 138v1h1v-1zM144 173v1h1v-1zM144 182v2h1v-2zM144 415v2h1v-2zM144 460v1h1v-1zM144 469v1h1v-1zM144 480v1h1v-1zM145 117v1h1v-1zM145 132v1h1v-1zM145 137v1h1v-1zM145 181v1h1v-1zM145 417v1h1v-1zM145 461v1h1v-1zM145 468v1h1v-1zM145 481v1h1v-1zM146 60v1h1v-1zM146 116v1h1v-1zM146 133v1h1v-1zM146 136v1h1v-1zM146 180v1h1v-1zM146 418v1h1v-1zM146 462v1h1v-1zM146 467v1h1v-1zM146 482v1h1v-1zM146 538v1h1v-1zM147 115v1h1v-1zM147 135v1h1v-1zM147 175v1h1v-1zM147 179v1h1v-1zM147 419v1h1v-1zM147 463v1h1v-1zM147 466v1h1v-1zM147 483v1h1v-1zM148 114v1h1v-1zM148 177v2h1v-2zM148 420v1h1v-1zM148 464v1h1v-1zM148 484v1h1v-1zM149 58v1h1v-1zM149 133v1h1v-1zM149 421v2h1v-2zM149 540v1h1v-1zM150 132v1h1v-1zM150 175v1h1v-1zM150 423v1h1v-1zM150 466v1h1v-1zM151 112v1h1v-1zM151 131v1h1v-1zM151 174v1h1v-1zM151 424v1h1v-1zM151 467v1h1v-1zM151 486v1h1v-1zM152 56v1h1v-1zM152 111v1h1v-1zM152 173v1h1v-1zM152 425v1h1v-1zM152 487v1h1v-1zM152 542v1h1v-1zM153 171v2h1v-2zM153 426v2h1v-2zM154 129v1h1v-1zM154 170v1h1v-1zM154 428v1h1v-1zM154 469v1h1v-1zM155 109v1h1v-1zM155 111v2h1v-2zM155 128v1h1v-1zM155 169v1h1v-1zM155 429v1h1v-1zM155 470v1h1v-1zM155 487v1h1v-1zM155 489v1h1v-1zM156 108v1h1v-1zM156 113v1h1v-1zM156 127v1h1v-1zM156 168v1h1v-1zM156 430v1h1v-1zM156 471v1h1v-1zM156 486v1h1v-1zM156 490v1h1v-1zM157 53v1h1v-1zM157 114v1h1v-1zM157 126v1h1v-1zM157 167v1h1v-1zM157 431v1h1v-1zM157 472v1h1v-1zM157 485v1h1v-1zM157 545v1h1v-1zM158 115v2h1v-2zM158 166v1h1v-1zM158 432v1h1v-1zM158 483v2h1v-2zM159 106v1h1v-1zM159 117v1h1v-1zM159 165v1h1v-1zM159 433v1h1v-1zM159 482v1h1v-1zM159 492v1h1v-1zM160 118v1h1v-1zM160 124v1h1v-1zM160 164v1h1v-1zM160 434v1h1v-1zM160 474v1h1v-1zM160 481v1h1v-1zM161 119v2h1v-2zM161 123v1h1v-1zM161 163v1h1v-1zM161 435v1h1v-1zM161 475v1h1v-1zM161 480v1h1v-1zM162 104v1h1v-1zM162 121v1h1v-1zM162 162v1h1v-1zM162 436v1h1v-1zM162 479v1h1v-1zM162 494v1h1v-1zM163 103v1h1v-1zM163 161v1h1v-1zM163 437v1h1v-1zM163 478v1h1v-1zM163 495v1h1v-1zM164 121v1h1v-1zM164 160v1h1v-1zM164 438v1h1v-1zM164 477v1h1v-1zM165 120v1h1v-1zM165 159v1h1v-1zM165 439v1h1v-1zM166 101v1h1v-1zM166 158v1h1v-1zM166 440v1h1v-1zM166 497v1h1v-1zM167 157v1h1v-1zM167 441v1h1v-1zM167 476v2h1v-2zM168 118v1h1v-1zM168 156v1h1v-1zM168 442v1h1v-1zM168 475v1h1v-1zM168 480v1h1v-1zM169 99v1h1v-1zM169 117v1h1v-1zM169 155v1h1v-1zM169 443v1h1v-1zM169 474v1h1v-1zM169 481v1h1v-1zM169 499v1h1v-1zM170 116v1h1v-1zM170 154v1h1v-1zM170 444v1h1v-1zM170 472v2h1v-2zM170 482v1h1v-1zM170 500v1h1v-1zM171 471v1h1v-1zM172 99v2h1v-2zM172 470v1h1v-1zM172 500v1h1v-1zM173 96v1h1v-1zM173 101v2h1v-2zM173 114v1h1v-1zM173 152v1h1v-1zM173 446v1h1v-1zM173 468v2h1v-2zM173 484v1h1v-1zM173 498v2h1v-2zM173 502v1h1v-1zM174 103v1h1v-1zM174 113v1h1v-1zM174 151v1h1v-1zM174 447v1h1v-1zM174 467v1h1v-1zM174 485v1h1v-1zM174 497v1h1v-1zM175 104v2h1v-2zM175 150v1h1v-1zM175 448v1h1v-1zM175 466v1h1v-1zM175 495v2h1v-2zM176 106v2h1v-2zM176 149v1h1v-1zM176 449v1h1v-1zM176 464v2h1v-2zM176 493v2h1v-2zM177 108v2h1v-2zM177 463v1h1v-1zM177 492v1h1v-1zM178 462v1h1v-1zM178 490v2h1v-2zM179 147v1h1v-1zM179 451v1h1v-1zM179 460v2h1v-2zM179 489v1h1v-1zM180 92v1h1v-1zM180 146v1h1v-1zM180 452v1h1v-1zM180 459v1h1v-1zM180 506v1h1v-1zM181 109v1h1v-1zM181 145v1h1v-1zM181 453v1h1v-1zM181 458v1h1v-1zM181 489v1h1v-1zM182 456v2h1v-2zM184 107v1h1v-1zM184 143v1h1v-1zM184 491v1h1v-1zM185 142v1h1v-1zM185 456v1h1v-1zM187 88v1h1v-1zM187 105v1h1v-1zM187 493v1h1v-1zM187 510v1h1v-1zM188 140v1h1v-1zM188 458v1h1v-1zM189 88v1h1v-1zM190 89v2h1v-2zM190 510v1h1v-1zM191 91v2h1v-2zM191 138v1h1v-1zM191 460v1h1v-1zM191 508v2h1v-2zM192 93v2h1v-2zM192 506v2h1v-2zM193 95v2h1v-2zM193 504v2h1v-2zM194 97v2h1v-2zM194 502v2h1v-2zM195 99v1h1v-1zM195 500v2h1v-2zM196 135v1h1v-1zM196 463v1h1v-1zM196 499v1h1v-1zM199 133v1h1v-1zM199 465v1h1v-1zM202 131v1h1v-1zM202 467v1h1v-1zM208 79v2h1v-2zM208 518v2h1v-2zM209 81v2h1v-2zM209 516v2h1v-2zM210 83v3h1v-3zM210 514v2h1v-2zM211 86v3h1v-3zM211 512v2h1v-2zM212 89v2h1v-2zM212 510v2h1v-2zM213 508v2h1v-2zM214 30v1h1v-1zM215 31v3h1v-3zM216 34v3h1v-3zM217 37v4h1v-4zM218 41v3h1v-3zM219 44v3h1v-3zM220 47v3h1v-3zM221 50v3h1v-3zM222 53v3h1v-3zM223 56v3h1v-3zM224 59v4h1v-4zM225 63v3h1v-3zM226 66v3h1v-3zM227 69v2h1v-2zM227 73v1h1v-1zM228 74v3h1v-3zM228 526v1h1v-1zM229 77v4h1v-4zM229 523v3h1v-3zM230 81v3h1v-3zM230 519v4h1v-4zM231 84v1h1v-1zM231 516v3h1v-3zM232 145v2h1v-2zM232 514v2h1v-2zM233 147v2h1v-2zM234 149v2h1v-2zM235 151v2h1v-2zM236 153v2h1v-2zM237 155v2h1v-2zM238 85v1h1v-1zM239 86v4h1v-4zM239 574v3h1v-3zM240 90v3h1v-3zM240 569v5h1v-5zM241 93v4h1v-4zM241 565v4h1v-4zM242 97v3h1v-3zM242 560v5h1v-5zM243 100v4h1v-4zM243 555v5h1v-5zM244 104v3h1v-3zM244 550v5h1v-5zM245 107v4h1v-4zM245 113v1h1v-1zM245 545v5h1v-5zM246 111v2h1v-2zM246 541v4h1v-4zM247 67v2h1v-2zM247 113v1h1v-1zM247 536v5h1v-5zM248 69v4h1v-4zM248 530v2h1v-2zM248 534v2h1v-2zM249 73v5h1v-5zM249 526v4h1v-4zM250 78v2h1v-2zM250 522v4h1v-4zM251 519v3h1v-3zM253 516v2h1v-2zM254 511v5h1v-5zM255 506v5h1v-5zM256 502v4h1v-4zM257 497v5h1v-5zM258 492v5h1v-5zM259 490v2h1v-2zM268 63v4h1v-4zM269 67v6h1v-6zM269 532v4h1v-4zM270 73v4h1v-4zM270 526v6h1v-6zM271 523v3h1v-3zM272 134v3h1v-3zM273 137v6h1v-6zM274 143v3h1v-3zM289 61v14h1v-14zM290 524v14h1v-14zM308 61v14h1v-14zM309 524v14h1v-14zM313 138v7h1v-7zM314 132v6h1v-6zM327 73v4h1v-4zM328 67v6h1v-6zM328 522v4h1v-4zM329 63v4h1v-4zM329 526v6h1v-6zM330 532v4h1v-4zM331 145v3h1v-3zM332 141v4h1v-4zM333 137v4h1v-4zM334 135v2h1v-2zM339 107v2h1v-2zM340 102v5h1v-5zM341 97v5h1v-5zM342 93v4h1v-4zM343 88v5h1v-5zM344 83v5h1v-5zM345 81v2h1v-2zM347 77v3h1v-3zM348 73v4h1v-4zM348 518v3h1v-3zM349 69v4h1v-4zM349 151v2h1v-2zM349 521v4h1v-4zM350 63v2h1v-2zM350 67v2h1v-2zM350 148v3h1v-3zM350 525v5h1v-5zM351 58v5h1v-5zM351 145v3h1v-3zM351 485v1h1v-1zM351 530v2h1v-2zM352 54v4h1v-4zM352 142v3h1v-3zM352 486v2h1v-2zM353 49v5h1v-5zM353 140v2h1v-2zM353 485v1h1v-1zM353 488v4h1v-4zM354 44v5h1v-5zM354 492v3h1v-3zM355 39v5h1v-5zM355 495v4h1v-4zM356 34v5h1v-5zM356 499v3h1v-3zM357 30v4h1v-4zM357 502v4h1v-4zM358 25v5h1v-5zM358 506v3h1v-3zM359 22v3h1v-3zM359 509v4h1v-4zM360 513v1h1v-1zM366 83v2h1v-2zM367 80v3h1v-3zM367 513v2h1v-2zM368 76v4h1v-4zM368 515v3h1v-3zM369 73v3h1v-3zM369 518v4h1v-4zM370 72v1h1v-1zM370 522v3h1v-3zM371 525v1h1v-1zM371 528v2h1v-2zM372 530v3h1v-3zM373 533v3h1v-3zM374 536v4h1v-4zM375 540v3h1v-3zM376 543v3h1v-3zM377 546v3h1v-3zM378 549v3h1v-3zM379 552v3h1v-3zM380 555v3h1v-3zM381 558v4h1v-4zM382 562v3h1v-3zM383 565v3h1v-3zM384 90v1h1v-1zM384 568v1h1v-1zM385 88v2h1v-2zM386 86v2h1v-2zM386 508v2h1v-2zM387 84v2h1v-2zM387 510v3h1v-3zM388 82v2h1v-2zM388 513v3h1v-3zM389 80v2h1v-2zM389 516v2h1v-2zM390 518v1h1v-1zM399 133v1h1v-1zM399 180v1h1v-1zM399 465v1h1v-1zM400 179v1h1v-1zM401 178v1h1v-1zM402 98v2h1v-2zM402 135v1h1v-1zM402 177v1h1v-1zM402 463v1h1v-1zM403 96v2h1v-2zM403 175v2h1v-2zM404 94v2h1v-2zM404 174v1h1v-1zM404 499v2h1v-2zM405 92v2h1v-2zM405 173v1h1v-1zM405 501v2h1v-2zM406 90v2h1v-2zM406 172v1h1v-1zM406 503v2h1v-2zM407 88v2h1v-2zM407 138v1h1v-1zM407 171v1h1v-1zM407 460v1h1v-1zM407 505v2h1v-2zM408 507v2h1v-2zM409 509v1h1v-1zM410 140v1h1v-1zM410 458v1h1v-1zM411 105v1h1v-1zM411 493v1h1v-1zM413 142v1h1v-1zM413 193v1h1v-1zM413 456v1h1v-1zM414 107v1h1v-1zM414 191v2h1v-2zM414 455v1h1v-1zM414 491v1h1v-1zM415 190v1h1v-1zM416 141v2h1v-2zM416 188v2h1v-2zM417 109v1h1v-1zM417 140v1h1v-1zM417 145v1h1v-1zM417 187v1h1v-1zM417 453v1h1v-1zM417 489v1h1v-1zM418 92v1h1v-1zM418 139v1h1v-1zM418 146v1h1v-1zM418 186v1h1v-1zM418 452v1h1v-1zM418 506v1h1v-1zM419 109v1h1v-1zM419 137v2h1v-2zM419 147v1h1v-1zM419 184v2h1v-2zM419 451v1h1v-1zM420 107v2h1v-2zM420 136v1h1v-1zM420 148v1h1v-1zM420 183v1h1v-1zM420 450v1h1v-1zM421 106v1h1v-1zM421 135v1h1v-1zM421 489v2h1v-2zM422 104v2h1v-2zM422 133v2h1v-2zM422 491v2h1v-2zM423 102v2h1v-2zM423 132v1h1v-1zM423 150v1h1v-1zM423 448v1h1v-1zM423 493v1h1v-1zM424 101v1h1v-1zM424 113v1h1v-1zM424 131v1h1v-1zM424 151v1h1v-1zM424 447v1h1v-1zM424 485v1h1v-1zM424 494v2h1v-2zM425 96v1h1v-1zM425 99v2h1v-2zM425 114v1h1v-1zM425 129v2h1v-2zM425 152v1h1v-1zM425 207v1h1v-1zM425 446v1h1v-1zM425 484v1h1v-1zM425 496v2h1v-2zM425 502v1h1v-1zM426 98v1h1v-1zM426 115v1h1v-1zM426 128v1h1v-1zM426 205v2h1v-2zM426 483v1h1v-1zM426 498v2h1v-2zM427 127v1h1v-1zM427 203v2h1v-2zM428 98v1h1v-1zM428 125v2h1v-2zM428 154v1h1v-1zM428 201v2h1v-2zM428 444v1h1v-1zM429 99v1h1v-1zM429 117v1h1v-1zM429 124v1h1v-1zM429 155v1h1v-1zM429 199v2h1v-2zM429 443v1h1v-1zM429 481v1h1v-1zM429 499v1h1v-1zM430 118v1h1v-1zM430 123v1h1v-1zM430 156v1h1v-1zM430 197v2h1v-2zM430 442v1h1v-1zM430 480v1h1v-1zM431 121v2h1v-2zM431 157v1h1v-1zM431 196v1h1v-1zM431 441v1h1v-1zM432 101v1h1v-1zM432 158v1h1v-1zM432 440v1h1v-1zM432 497v1h1v-1zM433 159v1h1v-1zM433 439v1h1v-1zM433 478v1h1v-1zM434 121v1h1v-1zM434 160v1h1v-1zM434 438v1h1v-1zM434 477v1h1v-1zM435 103v1h1v-1zM435 120v1h1v-1zM435 161v1h1v-1zM435 437v1h1v-1zM435 495v1h1v-1zM436 104v1h1v-1zM436 119v1h1v-1zM436 162v1h1v-1zM436 436v1h1v-1zM436 477v1h1v-1zM436 494v1h1v-1zM437 118v1h1v-1zM437 123v1h1v-1zM437 163v1h1v-1zM437 435v1h1v-1zM437 475v1h1v-1zM437 478v2h1v-2zM438 117v1h1v-1zM438 124v1h1v-1zM438 164v1h1v-1zM438 434v1h1v-1zM438 474v1h1v-1zM438 480v1h1v-1zM439 106v1h1v-1zM439 115v2h1v-2zM439 125v1h1v-1zM439 165v1h1v-1zM439 433v1h1v-1zM439 473v1h1v-1zM439 481v1h1v-1zM439 492v1h1v-1zM440 114v1h1v-1zM440 166v1h1v-1zM440 432v1h1v-1zM440 482v2h1v-2zM441 53v1h1v-1zM441 113v1h1v-1zM441 167v1h1v-1zM441 431v1h1v-1zM441 484v1h1v-1zM441 545v1h1v-1zM442 108v1h1v-1zM442 112v1h1v-1zM442 127v1h1v-1zM442 168v1h1v-1zM442 430v1h1v-1zM442 471v1h1v-1zM442 485v1h1v-1zM442 490v1h1v-1zM443 109v1h1v-1zM443 111v1h1v-1zM443 128v1h1v-1zM443 169v1h1v-1zM443 429v1h1v-1zM443 470v1h1v-1zM443 486v2h1v-2zM443 489v1h1v-1zM444 55v1h1v-1zM444 129v1h1v-1zM444 170v1h1v-1zM444 428v1h1v-1zM444 469v1h1v-1zM444 543v1h1v-1zM445 130v1h1v-1zM445 171v2h1v-2zM445 426v2h1v-2zM445 468v1h1v-1zM446 111v1h1v-1zM446 173v1h1v-1zM446 425v1h1v-1zM446 487v1h1v-1zM447 112v1h1v-1zM447 174v1h1v-1zM447 424v1h1v-1zM447 486v1h1v-1zM448 113v1h1v-1zM448 132v1h1v-1zM448 175v1h1v-1zM448 423v1h1v-1zM448 466v1h1v-1zM448 485v1h1v-1zM449 58v1h1v-1zM449 176v1h1v-1zM449 465v1h1v-1zM449 540v1h1v-1zM450 134v1h1v-1zM450 177v2h1v-2zM450 420v1h1v-1zM451 115v1h1v-1zM451 132v1h1v-1zM451 135v1h1v-1zM451 179v1h1v-1zM451 419v1h1v-1zM451 423v1h1v-1zM451 463v1h1v-1zM451 483v1h1v-1zM452 60v1h1v-1zM452 116v1h1v-1zM452 131v1h1v-1zM452 136v1h1v-1zM452 180v1h1v-1zM452 418v1h1v-1zM452 462v1h1v-1zM452 465v1h1v-1zM452 482v1h1v-1zM452 538v1h1v-1zM453 117v1h1v-1zM453 130v1h1v-1zM453 137v1h1v-1zM453 181v1h1v-1zM453 417v1h1v-1zM453 461v1h1v-1zM453 466v1h1v-1zM453 481v1h1v-1zM454 118v1h1v-1zM454 129v1h1v-1zM454 138v1h1v-1zM454 182v2h1v-2zM454 415v2h1v-2zM454 425v1h1v-1zM454 460v1h1v-1zM454 467v1h1v-1zM454 480v1h1v-1zM455 62v1h1v-1zM455 128v1h1v-1zM455 139v1h1v-1zM455 184v1h1v-1zM455 414v1h1v-1zM455 426v1h1v-1zM455 459v1h1v-1zM455 468v1h1v-1zM455 536v1h1v-1zM456 127v1h1v-1zM456 140v1h1v-1zM456 185v1h1v-1zM456 413v1h1v-1zM456 427v1h1v-1zM456 458v1h1v-1zM456 469v2h1v-2zM457 120v1h1v-1zM457 126v1h1v-1zM457 141v1h1v-1zM457 186v2h1v-2zM457 411v2h1v-2zM457 428v1h1v-1zM457 457v1h1v-1zM457 471v1h1v-1zM457 478v1h1v-1zM458 64v1h1v-1zM458 121v1h1v-1zM458 125v1h1v-1zM458 142v1h1v-1zM458 188v1h1v-1zM458 410v1h1v-1zM458 456v1h1v-1zM458 472v1h1v-1zM458 477v1h1v-1zM458 534v1h1v-1zM459 122v1h1v-1zM459 124v1h1v-1zM459 143v1h1v-1zM459 189v2h1v-2zM459 408v2h1v-2zM459 455v1h1v-1zM459 473v1h1v-1zM459 476v1h1v-1zM460 123v1h1v-1zM460 144v1h1v-1zM460 191v1h1v-1zM460 407v1h1v-1zM460 430v1h1v-1zM460 454v1h1v-1zM460 475v1h1v-1zM461 66v1h1v-1zM461 122v1h1v-1zM461 124v1h1v-1zM461 145v1h1v-1zM461 192v2h1v-2zM461 405v2h1v-2zM461 431v1h1v-1zM461 453v1h1v-1zM461 532v1h1v-1zM462 121v1h1v-1zM462 146v1h1v-1zM462 194v2h1v-2zM462 403v2h1v-2zM462 432v1h1v-1zM462 452v1h1v-1zM463 120v1h1v-1zM463 196v1h1v-1zM463 402v1h1v-1zM463 451v1h1v-1zM464 119v1h1v-1zM464 126v1h1v-1zM464 148v1h1v-1zM464 197v2h1v-2zM464 400v2h1v-2zM464 472v1h1v-1zM465 118v1h1v-1zM465 127v1h1v-1zM465 146v1h1v-1zM465 149v1h1v-1zM465 199v1h1v-1zM465 399v1h1v-1zM465 434v1h1v-1zM465 449v1h1v-1zM465 471v1h1v-1zM466 69v1h1v-1zM466 116v2h1v-2zM466 128v1h1v-1zM466 145v1h1v-1zM466 150v1h1v-1zM466 200v2h1v-2zM466 397v2h1v-2zM466 435v1h1v-1zM466 448v1h1v-1zM466 451v1h1v-1zM466 470v1h1v-1zM466 529v1h1v-1zM467 70v1h1v-1zM467 115v1h1v-1zM467 129v1h1v-1zM467 144v1h1v-1zM467 151v1h1v-1zM467 202v1h1v-1zM467 395v2h1v-2zM467 436v1h1v-1zM467 446v2h1v-2zM467 452v1h1v-1zM467 469v1h1v-1zM467 528v1h1v-1zM468 114v1h1v-1zM468 130v1h1v-1zM468 143v1h1v-1zM468 152v2h1v-2zM468 203v2h1v-2zM468 393v2h1v-2zM468 437v1h1v-1zM468 445v1h1v-1zM468 453v1h1v-1zM468 468v1h1v-1zM469 113v1h1v-1zM469 131v1h1v-1zM469 154v1h1v-1zM469 205v2h1v-2zM469 391v2h1v-2zM469 444v1h1v-1zM469 454v1h1v-1zM469 467v1h1v-1zM470 72v1h1v-1zM470 112v1h1v-1zM470 132v1h1v-1zM470 155v1h1v-1zM470 207v2h1v-2zM470 389v2h1v-2zM470 443v1h1v-1zM470 455v1h1v-1zM470 466v1h1v-1zM470 526v1h1v-1zM471 73v1h1v-1zM471 111v1h1v-1zM471 133v1h1v-1zM471 141v1h1v-1zM471 156v1h1v-1zM471 209v2h1v-2zM471 387v2h1v-2zM471 439v1h1v-1zM471 442v1h1v-1zM471 456v1h1v-1zM471 465v1h1v-1zM471 525v1h1v-1zM472 110v1h1v-1zM472 134v1h1v-1zM472 140v1h1v-1zM472 157v1h1v-1zM472 211v2h1v-2zM472 385v2h1v-2zM472 440v2h1v-2zM472 457v1h1v-1zM472 464v1h1v-1zM473 109v1h1v-1zM473 135v1h1v-1zM473 139v1h1v-1zM473 158v2h1v-2zM473 213v2h1v-2zM473 383v2h1v-2zM473 439v1h1v-1zM473 458v1h1v-1zM473 462v2h1v-2zM474 75v1h1v-1zM474 108v1h1v-1zM474 136v2h1v-2zM474 160v1h1v-1zM474 215v2h1v-2zM474 381v2h1v-2zM474 438v1h1v-1zM474 459v1h1v-1zM474 461v1h1v-1zM474 523v1h1v-1zM475 76v1h1v-1zM475 106v2h1v-2zM475 161v1h1v-1zM475 217v2h1v-2zM475 379v2h1v-2zM475 437v1h1v-1zM475 460v1h1v-1zM475 522v1h1v-1zM476 77v1h1v-1zM476 105v1h1v-1zM476 139v1h1v-1zM476 163v1h1v-1zM476 219v3h1v-3zM476 377v2h1v-2zM476 435v2h1v-2zM476 459v1h1v-1zM476 461v1h1v-1zM476 521v1h1v-1zM477 78v1h1v-1zM477 104v1h1v-1zM477 140v1h1v-1zM477 164v1h1v-1zM477 222v2h1v-2zM477 375v2h1v-2zM477 434v1h1v-1zM477 458v1h1v-1zM477 462v1h1v-1zM477 520v1h1v-1zM478 79v1h1v-1zM478 103v1h1v-1zM478 141v1h1v-1zM478 165v1h1v-1zM478 224v2h1v-2zM478 373v2h1v-2zM478 433v1h1v-1zM478 435v1h1v-1zM478 457v1h1v-1zM478 463v1h1v-1zM478 519v1h1v-1zM479 80v1h1v-1zM479 102v1h1v-1zM479 142v2h1v-2zM479 166v2h1v-2zM479 226v3h1v-3zM479 370v3h1v-3zM479 431v2h1v-2zM479 436v1h1v-1zM479 455v2h1v-2zM479 464v1h1v-1zM479 518v1h1v-1zM480 81v1h1v-1zM480 101v1h1v-1zM480 144v1h1v-1zM480 160v1h1v-1zM480 168v1h1v-1zM480 229v3h1v-3zM480 367v3h1v-3zM480 430v1h1v-1zM480 437v1h1v-1zM480 454v1h1v-1zM480 465v1h1v-1zM480 517v1h1v-1zM481 82v1h1v-1zM481 100v1h1v-1zM481 145v1h1v-1zM481 159v1h1v-1zM481 169v1h1v-1zM481 232v3h1v-3zM481 364v3h1v-3zM481 429v1h1v-1zM481 438v1h1v-1zM481 453v1h1v-1zM481 516v1h1v-1zM482 83v1h1v-1zM482 99v1h1v-1zM482 146v1h1v-1zM482 170v1h1v-1zM482 198v1h1v-1zM482 235v3h1v-3zM482 361v3h1v-3zM482 427v2h1v-2zM482 439v1h1v-1zM482 452v1h1v-1zM482 515v1h1v-1zM483 98v1h1v-1zM483 147v1h1v-1zM483 171v2h1v-2zM483 238v3h1v-3zM483 358v3h1v-3zM483 426v1h1v-1zM483 451v1h1v-1zM483 467v1h1v-1zM484 97v1h1v-1zM484 148v1h1v-1zM484 157v1h1v-1zM484 173v1h1v-1zM484 241v4h1v-4zM484 354v4h1v-4zM484 425v1h1v-1zM484 449v2h1v-2zM484 468v1h1v-1zM485 85v1h1v-1zM485 95v2h1v-2zM485 149v2h1v-2zM485 156v1h1v-1zM485 174v1h1v-1zM485 245v3h1v-3zM485 351v3h1v-3zM485 424v1h1v-1zM485 441v1h1v-1zM485 448v1h1v-1zM485 469v1h1v-1zM485 513v1h1v-1zM486 86v1h1v-1zM486 94v1h1v-1zM486 151v1h1v-1zM486 175v2h1v-2zM486 248v3h1v-3zM486 348v3h1v-3zM486 422v2h1v-2zM486 442v1h1v-1zM486 447v1h1v-1zM486 470v1h1v-1zM486 512v1h1v-1zM487 93v1h1v-1zM487 152v1h1v-1zM487 177v1h1v-1zM487 251v3h1v-3zM487 345v3h1v-3zM487 420v2h1v-2zM487 443v1h1v-1zM487 446v1h1v-1zM487 471v1h1v-1zM488 92v1h1v-1zM488 153v2h1v-2zM488 179v2h1v-2zM488 254v4h1v-4zM488 341v4h1v-4zM488 418v1h1v-1zM488 444v2h1v-2zM488 472v1h1v-1zM489 88v1h1v-1zM489 91v1h1v-1zM489 155v1h1v-1zM489 181v1h1v-1zM489 258v5h1v-5zM489 336v5h1v-5zM489 417v1h1v-1zM489 443v1h1v-1zM489 473v1h1v-1zM489 510v1h1v-1zM490 89v1h1v-1zM490 156v1h1v-1zM490 182v2h1v-2zM490 263v6h1v-6zM490 329v7h1v-7zM490 415v2h1v-2zM490 442v1h1v-1zM490 474v1h1v-1zM490 509v1h1v-1zM491 157v2h1v-2zM491 184v1h1v-1zM491 269v7h1v-7zM491 323v6h1v-6zM491 414v1h1v-1zM491 440v2h1v-2zM491 475v1h1v-1zM491 508v1h1v-1zM492 91v1h1v-1zM492 159v1h1v-1zM492 185v2h1v-2zM492 276v7h1v-7zM492 316v7h1v-7zM492 412v2h1v-2zM492 421v1h1v-1zM492 439v1h1v-1zM492 507v1h1v-1zM493 92v1h1v-1zM493 160v2h1v-2zM493 175v1h1v-1zM493 187v1h1v-1zM493 283v16h1v-16zM493 300v16h1v-16zM493 411v1h1v-1zM493 437v2h1v-2zM493 506v1h1v-1zM494 93v1h1v-1zM494 162v1h1v-1zM494 188v2h1v-2zM494 409v2h1v-2zM494 436v1h1v-1zM494 477v1h1v-1zM494 505v1h1v-1zM495 94v1h1v-1zM495 163v1h1v-1zM495 190v2h1v-2zM495 407v2h1v-2zM495 435v1h1v-1zM495 478v1h1v-1zM495 504v1h1v-1zM496 95v1h1v-1zM496 164v2h1v-2zM496 192v2h1v-2zM496 405v2h1v-2zM496 433v2h1v-2zM496 479v1h1v-1zM496 503v1h1v-1zM497 96v1h1v-1zM497 166v1h1v-1zM497 194v1h1v-1zM497 403v2h1v-2zM497 424v1h1v-1zM497 432v1h1v-1zM497 480v1h1v-1zM497 502v1h1v-1zM498 97v1h1v-1zM498 167v2h1v-2zM498 196v2h1v-2zM498 401v1h1v-1zM498 430v2h1v-2zM498 481v1h1v-1zM498 501v1h1v-1zM499 98v1h1v-1zM499 169v1h1v-1zM499 198v2h1v-2zM499 399v2h1v-2zM499 429v1h1v-1zM499 482v1h1v-1zM499 500v1h1v-1zM500 99v1h1v-1zM500 170v1h1v-1zM500 200v2h1v-2zM500 397v2h1v-2zM500 428v1h1v-1zM500 483v1h1v-1zM500 499v1h1v-1zM501 100v1h1v-1zM501 172v1h1v-1zM501 202v2h1v-2zM501 395v2h1v-2zM501 427v1h1v-1zM501 484v1h1v-1zM501 498v1h1v-1zM502 101v1h1v-1zM502 173v1h1v-1zM502 204v2h1v-2zM502 393v2h1v-2zM502 425v1h1v-1zM502 497v1h1v-1zM503 102v1h1v-1zM503 174v2h1v-2zM503 206v2h1v-2zM503 391v2h1v-2zM503 423v2h1v-2zM503 496v1h1v-1zM504 103v1h1v-1zM504 176v2h1v-2zM504 208v2h1v-2zM504 389v2h1v-2zM504 421v2h1v-2zM504 486v1h1v-1zM504 495v1h1v-1zM505 104v1h1v-1zM505 178v2h1v-2zM505 210v2h1v-2zM505 387v2h1v-2zM505 419v2h1v-2zM505 487v1h1v-1zM505 494v1h1v-1zM506 105v1h1v-1zM506 180v1h1v-1zM506 212v1h1v-1zM506 385v2h1v-2zM506 418v1h1v-1zM506 488v1h1v-1zM506 493v1h1v-1zM507 106v1h1v-1zM507 181v2h1v-2zM507 214v3h1v-3zM507 381v4h1v-4zM507 416v2h1v-2zM507 489v1h1v-1zM507 492v1h1v-1zM508 107v1h1v-1zM508 183v2h1v-2zM508 217v4h1v-4zM508 377v4h1v-4zM508 414v2h1v-2zM508 491v1h1v-1zM509 108v1h1v-1zM509 185v2h1v-2zM509 221v4h1v-4zM509 374v3h1v-3zM509 412v2h1v-2zM510 109v1h1v-1zM510 187v1h1v-1zM510 225v2h1v-2zM510 372v2h1v-2zM510 410v2h1v-2zM510 489v1h1v-1zM511 110v1h1v-1zM511 188v1h1v-1zM511 227v2h1v-2zM511 370v2h1v-2zM511 409v1h1v-1zM511 487v2h1v-2zM512 111v2h1v-2zM512 190v2h1v-2zM512 229v2h1v-2zM512 366v4h1v-4zM512 406v2h1v-2zM512 486v1h1v-1zM513 113v1h1v-1zM513 192v2h1v-2zM513 232v4h1v-4zM513 362v4h1v-4zM513 404v2h1v-2zM513 485v1h1v-1zM514 114v1h1v-1zM514 194v3h1v-3zM514 236v4h1v-4zM514 359v3h1v-3zM514 402v2h1v-2zM514 483v2h1v-2zM515 115v2h1v-2zM515 197v2h1v-2zM515 240v4h1v-4zM515 355v4h1v-4zM515 400v2h1v-2zM515 482v1h1v-1zM516 117v1h1v-1zM516 199v2h1v-2zM516 244v3h1v-3zM516 351v4h1v-4zM516 398v2h1v-2zM516 481v1h1v-1zM517 118v1h1v-1zM517 201v2h1v-2zM517 247v3h1v-3zM517 347v4h1v-4zM517 395v3h1v-3zM517 480v1h1v-1zM518 119v1h1v-1zM518 203v2h1v-2zM518 251v4h1v-4zM518 343v4h1v-4zM518 393v2h1v-2zM518 479v1h1v-1zM519 120v1h1v-1zM519 205v2h1v-2zM519 255v4h1v-4zM519 339v4h1v-4zM519 391v2h1v-2zM519 478v1h1v-1zM520 121v1h1v-1zM520 207v1h1v-1zM520 259v6h1v-6zM520 334v5h1v-5zM520 389v1h1v-1zM520 477v1h1v-1zM521 122v1h1v-1zM521 209v3h1v-3zM521 265v5h1v-5zM521 271v1h1v-1zM521 326v1h1v-1zM521 328v6h1v-6zM521 387v2h1v-2zM521 476v1h1v-1zM522 123v1h1v-1zM522 212v2h1v-2zM522 272v16h1v-16zM522 310v16h1v-16zM522 384v3h1v-3zM522 475v1h1v-1zM523 124v1h1v-1zM523 214v3h1v-3zM523 288v1h1v-1zM523 290v9h1v-9zM523 300v8h1v-8zM523 309v1h1v-1zM523 382v2h1v-2zM523 474v1h1v-1zM524 125v1h1v-1zM524 217v3h1v-3zM524 379v3h1v-3zM524 472v2h1v-2zM525 126v2h1v-2zM525 220v4h1v-4zM525 375v4h1v-4zM525 471v1h1v-1zM526 128v1h1v-1zM526 224v3h1v-3zM526 372v3h1v-3zM526 470v1h1v-1zM527 129v1h1v-1zM527 228v1h1v-1zM527 369v1h1v-1zM527 371v1h1v-1zM527 468v2h1v-2zM528 130v2h1v-2zM528 229v3h1v-3zM528 367v2h1v-2zM528 467v1h1v-1zM529 132v1h1v-1zM529 232v4h1v-4zM529 363v4h1v-4zM529 466v1h1v-1zM530 133v2h1v-2zM530 236v4h1v-4zM530 359v4h1v-4zM530 464v2h1v-2zM531 135v1h1v-1zM531 240v4h1v-4zM531 354v5h1v-5zM531 462v2h1v-2zM532 136v2h1v-2zM532 244v3h1v-3zM532 351v3h1v-3zM532 461v1h1v-1zM533 138v2h1v-2zM533 248v6h1v-6zM533 344v6h1v-6zM533 459v2h1v-2zM534 140v1h1v-1zM534 254v6h1v-6zM534 338v6h1v-6zM534 458v1h1v-1zM535 141v2h1v-2zM535 260v4h1v-4zM535 334v4h1v-4zM535 456v2h1v-2zM536 143v1h1v-1zM536 264v4h1v-4zM536 269v1h1v-1zM536 328v1h1v-1zM536 330v4h1v-4zM536 455v1h1v-1zM537 144v2h1v-2zM537 270v17h1v-17zM537 311v17h1v-17zM537 453v2h1v-2zM538 146v1h1v-1zM538 287v2h1v-2zM538 290v18h1v-18zM538 309v2h1v-2zM538 452v1h1v-1zM539 147v2h1v-2zM539 450v2h1v-2zM540 149v1h1v-1zM540 449v1h1v-1zM541 150v2h1v-2zM541 447v2h1v-2zM542 152v1h1v-1zM542 445v2h1v-2zM543 153v2h1v-2zM543 444v1h1v-1zM544 155v2h1v-2zM544 442v2h1v-2zM545 157v1h1v-1zM545 441v1h1v-1zM546 158v2h1v-2zM546 439v2h1v-2zM547 160v2h1v-2zM547 437v2h1v-2zM548 162v2h1v-2zM548 435v2h1v-2zM549 164v2h1v-2zM549 433v2h1v-2zM550 166v2h1v-2zM550 431v2h1v-2zM551 168v2h1v-2zM551 429v2h1v-2zM552 170v2h1v-2zM552 427v2h1v-2zM553 172v2h1v-2zM553 425v2h1v-2zM554 174v3h1v-3zM554 422v3h1v-3zM555 177v2h1v-2zM555 420v2h1v-2zM556 179v2h1v-2zM556 418v2h1v-2zM557 181v2h1v-2zM557 416v2h1v-2zM558 183v3h1v-3zM558 413v3h1v-3zM559 186v2h1v-2zM559 411v2h1v-2zM560 188v2h1v-2zM560 409v2h1v-2zM561 190v2h1v-2zM561 407v2h1v-2zM562 192v3h1v-3zM562 404v3h1v-3zM563 195v2h1v-2zM563 402v2h1v-2zM564 197v2h1v-2zM564 400v2h1v-2zM565 199v2h1v-2zM565 398v2h1v-2zM566 201v3h1v-3zM566 395v3h1v-3zM567 204v3h1v-3zM567 391v4h1v-4zM568 207v4h1v-4zM568 388v3h1v-3zM569 211v3h1v-3zM569 385v3h1v-3zM570 215v2h1v-2zM570 382v3h1v-3zM571 217v3h1v-3zM571 379v3h1v-3zM572 220v3h1v-3zM572 376v3h1v-3zM573 223v3h1v-3zM573 372v4h1v-4zM574 226v4h1v-4zM574 369v3h1v-3zM575 230v4h1v-4zM575 365v4h1v-4zM576 234v4h1v-4zM576 361v4h1v-4zM577 238v5h1v-5zM577 356v3h1v-3zM577 360v1h1v-1zM578 243v5h1v-5zM578 351v5h1v-5zM579 248v7h1v-7zM579 343v8h1v-8zM580 255v10h1v-10zM580 333v10h1v-10zM581 265v10h1v-10zM581 323v10h1v-10zM582 275v10h1v-10zM582 313v10h1v-10zM583 285v28h1v-28z"/>
<path fill="#f00" d="M747 108h3v1h-3zM747 114h3v1h-3zM230 126h6v1h-6zM234 127h2v1h-2zM222 132h5v1h-5zM227 133h2v1h-2zM222 142h5v1h-5zM747 146h3v1h-3zM524 150h5v1h-5zM527 151h2v1h-2zM426 166h5v1h-5zM424 167h2v1h-2zM431 167h2v1h-2zM60 171h3v1h-3zM70 171h3v1h-3zM424 181h2v1h-2zM431 181h2v1h-2zM426 182h5v1h-5zM750 186h2v1h-2zM744 187h2v1h-2zM748 187h2v1h-2zM750 189h2v1h-2zM747 236h3v1h-3zM745 237h2v1h-2zM750 237h2v1h-2zM745 243h2v1h-2zM750 243h2v1h-2zM747 244h3v1h-3zM750 276h3v1h-3zM751 277h2v1h-2zM746 279h2v1h-2zM746 284h2v1h-2zM745 287h2v1h-2zM745 293h8v1h-8zM204 449h3v1h-3zM204 461h15v1h-15zM308 553h5v1h-5zM58 173v3h1v-3zM59 172v1h1v-1zM59 176v1h1v-1zM60 177v1h1v-1zM63 172v1h1v-1zM64 173v3h1v-3zM65 176v4h1v-4zM66 180v8h1v-8zM67 176v4h1v-4zM68 173v3h1v-3zM69 172v1h1v-1zM72 177v1h1v-1zM73 172v1h1v-1zM73 176v1h1v-1zM74 173v3h1v-3zM149 299v1h1v-1zM156 298v1h1v-1zM159 295v1h1v-1zM162 293v1h1v-1zM165 290v1h1v-1zM168 287v1h1v-1zM171 284v1h1v-1zM172 365v1h1v-1zM173 362v1h1v-1zM174 282v1h1v-1zM174 359v1h1v-1zM176 356v1h1v-1zM177 279v1h1v-1zM177 353v1h1v-1zM178 350v1h1v-1zM179 347v1h1v-1zM180 276v1h1v-1zM180 344v1h1v-1zM181 341v1h1v-1zM182 338v1h1v-1zM183 273v1h1v-1zM183 335v1h1v-1zM184 332v1h1v-1zM185 329v1h1v-1zM186 271v1h1v-1zM186 326v1h1v-1zM187 323v1h1v-1zM188 320v1h1v-1zM189 268v1h1v-1zM189 317v1h1v-1zM190 314v1h1v-1zM191 311v1h1v-1zM192 265v1h1v-1zM192 308v1h1v-1zM193 305v1h1v-1zM195 263v1h1v-1zM195 302v1h1v-1zM196 299v1h1v-1zM197 296v1h1v-1zM198 260v1h1v-1zM198 293v1h1v-1zM199 290v1h1v-1zM200 287v1h1v-1zM201 257v1h1v-1zM201 284v1h1v-1zM202 281v1h1v-1zM203 278v1h1v-1zM204 254v1h1v-1zM204 275v1h1v-1zM204 459v2h1v-2zM205 272v1h1v-1zM205 458v1h1v-1zM206 269v1h1v-1zM206 455v3h1v-3zM207 252v1h1v-1zM207 266v1h1v-1zM207 450v1h1v-1zM207 454v1h1v-1zM208 263v1h1v-1zM208 451v3h1v-3zM209 260v1h1v-1zM210 249v1h1v-1zM210 257v1h1v-1zM211 254v1h1v-1zM212 251v1h1v-1zM213 246v1h1v-1zM214 248v1h1v-1zM214 449v12h1v-12zM214 462v2h1v-2zM215 245v1h1v-1zM215 448v1h1v-1zM216 242v2h1v-2zM216 447v1h1v-1zM217 239v1h1v-1zM218 236v1h1v-1zM219 135v5h1v-5zM219 233v1h1v-1zM219 241v1h1v-1zM220 134v1h1v-1zM220 140v1h1v-1zM220 230v1h1v-1zM221 133v1h1v-1zM221 141v1h1v-1zM221 227v1h1v-1zM222 224v1h1v-1zM222 238v1h1v-1zM223 221v1h1v-1zM224 218v1h1v-1zM225 215v1h1v-1zM225 235v1h1v-1zM225 429v1h1v-1zM226 212v1h1v-1zM227 141v1h1v-1zM227 209v1h1v-1zM228 134v1h1v-1zM228 140v1h1v-1zM228 206v1h1v-1zM228 233v1h1v-1zM229 132v1h1v-1zM229 135v5h1v-5zM229 203v1h1v-1zM230 131v1h1v-1zM230 200v1h1v-1zM231 130v1h1v-1zM231 197v1h1v-1zM231 230v1h1v-1zM232 129v1h1v-1zM233 128v1h1v-1zM233 194v1h1v-1zM234 191v1h1v-1zM234 227v1h1v-1zM235 128v4h1v-4zM235 188v1h1v-1zM236 185v1h1v-1zM237 182v1h1v-1zM237 224v1h1v-1zM238 179v1h1v-1zM239 162v1h1v-1zM239 176v1h1v-1zM240 173v1h1v-1zM240 222v1h1v-1zM241 170v1h1v-1zM243 219v1h1v-1zM246 216v1h1v-1zM249 213v1h1v-1zM252 211v1h1v-1zM255 208v1h1v-1zM258 205v1h1v-1zM261 202v1h1v-1zM264 200v1h1v-1zM267 197v1h1v-1zM270 194v1h1v-1zM273 192v1h1v-1zM276 189v1h1v-1zM279 186v1h1v-1zM282 183v1h1v-1zM285 181v1h1v-1zM288 178v1h1v-1zM291 175v1h1v-1zM294 172v1h1v-1zM297 170v1h1v-1zM300 167v1h1v-1zM302 565v1h1v-1zM303 164v1h1v-1zM303 566v1h1v-1zM304 557v5h1v-5zM304 567v1h1v-1zM305 556v1h1v-1zM305 562v1h1v-1zM305 566v1h1v-1zM306 161v1h1v-1zM306 555v1h1v-1zM306 563v3h1v-3zM307 554v1h1v-1zM309 159v1h1v-1zM313 554v1h1v-1zM314 555v1h1v-1zM314 563v3h1v-3zM315 556v1h1v-1zM315 562v1h1v-1zM315 566v1h1v-1zM316 557v5h1v-5zM316 567v1h1v-1zM317 568v1h1v-1zM318 569v1h1v-1zM408 197v1h1v-1zM420 172v5h1v-5zM421 170v2h1v-2zM421 177v2h1v-2zM422 169v1h1v-1zM422 179v1h1v-1zM423 168v1h1v-1zM423 180v1h1v-1zM428 174v1h1v-1zM433 168v1h1v-1zM433 180v1h1v-1zM434 169v1h1v-1zM434 179v1h1v-1zM435 170v2h1v-2zM435 177v2h1v-2zM436 172v5h1v-5zM512 166v1h1v-1zM513 165v1h1v-1zM514 156v1h1v-1zM514 164v1h1v-1zM515 157v1h1v-1zM515 163v1h1v-1zM516 158v1h1v-1zM516 162v1h1v-1zM517 159v1h1v-1zM517 161v1h1v-1zM518 160v1h1v-1zM519 159v1h1v-1zM519 161v1h1v-1zM520 158v1h1v-1zM520 162v1h1v-1zM521 157v1h1v-1zM521 163v1h1v-1zM522 156v1h1v-1zM522 164v1h1v-1zM523 155v1h1v-1zM524 154v1h1v-1zM525 153v1h1v-1zM526 152v1h1v-1zM528 152v3h1v-3zM744 152v1h1v-1zM744 239v3h1v-3zM744 281v2h1v-2zM745 106v1h1v-1zM745 110v3h1v-3zM745 148v3h1v-3zM745 153v1h1v-1zM745 186v1h1v-1zM745 188v3h1v-3zM745 238v1h1v-1zM745 242v1h1v-1zM745 280v1h1v-1zM745 283v1h1v-1zM745 292v1h1v-1zM746 107v1h1v-1zM746 109v1h1v-1zM746 113v1h1v-1zM746 147v1h1v-1zM746 151v2h1v-2zM746 191v3h1v-3zM746 290v2h1v-2zM747 188v3h1v-3zM747 288v2h1v-2zM748 186v1h1v-1zM748 240v1h1v-1zM748 280v1h1v-1zM748 283v1h1v-1zM749 188v1h1v-1zM749 279v1h1v-1zM749 281v2h1v-2zM750 107v1h1v-1zM750 109v1h1v-1zM750 113v1h1v-1zM750 147v1h1v-1zM750 151v2h1v-2zM750 278v1h1v-1zM750 287v6h1v-6zM750 294v1h1v-1zM751 106v1h1v-1zM751 110v3h1v-3zM751 148v3h1v-3zM751 153v1h1v-1zM751 190v1h1v-1zM751 194v1h1v-1zM751 238v1h1v-1zM751 242v1h1v-1zM751 286v1h1v-1zM752 154v1h1v-1zM752 187v2h1v-2zM752 191v3h1v-3zM752 239v3h1v-3zM752 278v1h1v-1z"/>
<path fill="#0f0" d="M283 30h2v1h-2zM289 30h2v1h-2zM286 34h2v1h-2zM292 34h2v1h-2zM283 40h2v1h-2zM289 40h2v1h-2zM286 44h2v1h-2zM292 44h2v1h-2zM266 120h9v1h-9zM269 126h3v1h-3zM747 127h3v1h-3zM745 128h2v1h-2zM750 128h2v1h-2zM269 130h3v1h-3zM745 130h2v1h-2zM750 131h2v1h-2zM745 133h2v1h-2zM750 133h2v1h-2zM747 134h3v1h-3zM412 155h5v1h-5zM412 163h5v1h-5zM410 167h9v1h-9zM750 174h2v1h-2zM439 181h5v1h-5zM439 189h5v1h-5zM437 193h9v1h-9zM745 207h2v1h-2zM748 207h2v1h-2zM747 208h2v1h-2zM750 208h2v1h-2zM745 212h2v1h-2zM748 212h2v1h-2zM747 213h2v1h-2zM750 213h2v1h-2zM747 257h3v1h-3zM747 261h3v1h-3zM746 263h5v1h-5zM747 266h3v1h-3zM747 270h3v1h-3zM746 272h5v1h-5zM746 309h5v1h-5zM747 312h3v1h-3zM530 415h5v1h-5zM524 421h7v1h-7zM534 421h7v1h-7zM524 425h17v1h-17zM74 434h11v1h-11zM74 446h11v1h-11zM72 432v1h1v-1zM72 448v1h1v-1zM73 433v1h1v-1zM73 447v1h1v-1zM76 435v11h1v-11zM82 435v11h1v-11zM85 433v1h1v-1zM85 447v1h1v-1zM86 432v1h1v-1zM86 448v1h1v-1zM172 366v1h1v-1zM173 364v1h1v-1zM175 362v1h1v-1zM176 360v1h1v-1zM177 358v1h1v-1zM179 356v1h1v-1zM180 354v1h1v-1zM181 352v1h1v-1zM183 350v1h1v-1zM184 348v1h1v-1zM185 346v1h1v-1zM187 344v1h1v-1zM188 342v1h1v-1zM189 340v1h1v-1zM191 338v1h1v-1zM192 336v1h1v-1zM193 334v1h1v-1zM195 332v1h1v-1zM196 330v1h1v-1zM197 328v1h1v-1zM199 326v1h1v-1zM200 324v1h1v-1zM201 322v1h1v-1zM203 320v1h1v-1zM204 318v1h1v-1zM205 316v1h1v-1zM207 314v1h1v-1zM208 312v1h1v-1zM209 310v1h1v-1zM211 308v1h1v-1zM212 306v1h1v-1zM213 304v1h1v-1zM215 302v1h1v-1zM216 300v1h1v-1zM217 298v1h1v-1zM219 296v1h1v-1zM220 294v1h1v-1zM221 292v1h1v-1zM223 290v1h1v-1zM224 288v1h1v-1zM225 286v1h1v-1zM227 284v1h1v-1zM228 282v1h1v-1zM228 415v1h1v-1zM228 419v1h1v-1zM228 423v1h1v-1zM229 280v1h1v-1zM229 399v1h1v-1zM229 403v1h1v-1zM229 407v1h1v-1zM229 411v1h1v-1zM230 379v1h1v-1zM230 383v1h1v-1zM230 387v1h1v-1zM230 391v1h1v-1zM230 395v1h1v-1zM231 278v1h1v-1zM231 363v1h1v-1zM231 367v1h1v-1zM231 371v1h1v-1zM231 375v1h1v-1zM232 276v1h1v-1zM232 343v1h1v-1zM232 347v1h1v-1zM232 351v1h1v-1zM232 355v1h1v-1zM232 359v1h1v-1zM233 274v1h1v-1zM233 327v1h1v-1zM233 331v1h1v-1zM233 335v1h1v-1zM233 339v1h1v-1zM234 307v1h1v-1zM234 311v1h1v-1zM234 315v1h1v-1zM234 319v1h1v-1zM234 323v1h1v-1zM235 272v1h1v-1zM235 287v1h1v-1zM235 291v1h1v-1zM235 295v1h1v-1zM235 299v1h1v-1zM235 303v1h1v-1zM236 270v2h1v-2zM236 275v1h1v-1zM236 279v1h1v-1zM236 283v1h1v-1zM237 251v1h1v-1zM237 255v1h1v-1zM237 259v1h1v-1zM237 263v1h1v-1zM237 267v2h1v-2zM238 235v1h1v-1zM238 239v1h1v-1zM238 243v1h1v-1zM238 247v1h1v-1zM239 215v1h1v-1zM239 219v1h1v-1zM239 223v1h1v-1zM239 227v1h1v-1zM239 231v1h1v-1zM239 266v1h1v-1zM240 195v1h1v-1zM240 199v1h1v-1zM240 203v1h1v-1zM240 207v1h1v-1zM240 211v1h1v-1zM240 264v1h1v-1zM241 179v1h1v-1zM241 183v1h1v-1zM241 187v1h1v-1zM241 191v1h1v-1zM241 262v1h1v-1zM242 167v1h1v-1zM242 171v1h1v-1zM242 175v1h1v-1zM243 260v1h1v-1zM244 258v1h1v-1zM245 256v1h1v-1zM247 254v1h1v-1zM248 252v1h1v-1zM249 250v1h1v-1zM251 248v1h1v-1zM252 246v1h1v-1zM253 244v1h1v-1zM255 242v1h1v-1zM256 240v1h1v-1zM257 238v1h1v-1zM259 236v1h1v-1zM260 234v1h1v-1zM261 232v1h1v-1zM263 230v1h1v-1zM264 114v1h1v-1zM264 124v1h1v-1zM264 228v1h1v-1zM265 115v1h1v-1zM265 123v1h1v-1zM265 226v1h1v-1zM266 116v4h1v-4zM266 121v2h1v-2zM267 224v1h1v-1zM268 127v3h1v-3zM268 222v1h1v-1zM269 220v1h1v-1zM270 118v2h1v-2zM270 121v5h1v-5zM271 218v1h1v-1zM272 127v3h1v-3zM272 216v1h1v-1zM273 214v1h1v-1zM274 116v4h1v-4zM274 121v2h1v-2zM275 115v1h1v-1zM275 123v1h1v-1zM275 151v1h1v-1zM275 212v1h1v-1zM276 114v1h1v-1zM276 124v1h1v-1zM276 210v1h1v-1zM277 208v1h1v-1zM279 206v1h1v-1zM280 35v1h1v-1zM280 45v1h1v-1zM280 204v1h1v-1zM281 33v2h1v-2zM281 43v2h1v-2zM281 202v1h1v-1zM282 32v1h1v-1zM282 42v1h1v-1zM283 31v1h1v-1zM283 41v1h1v-1zM283 200v1h1v-1zM284 29v1h1v-1zM284 39v1h1v-1zM284 198v1h1v-1zM285 31v3h1v-3zM285 41v3h1v-3zM285 196v1h1v-1zM286 35v1h1v-1zM286 45v1h1v-1zM287 33v1h1v-1zM287 43v1h1v-1zM287 194v1h1v-1zM288 32v1h1v-1zM288 42v1h1v-1zM288 192v1h1v-1zM289 31v1h1v-1zM289 41v1h1v-1zM289 190v1h1v-1zM290 29v1h1v-1zM290 39v1h1v-1zM291 31v3h1v-3zM291 41v3h1v-3zM291 188v1h1v-1zM292 35v1h1v-1zM292 45v1h1v-1zM292 186v1h1v-1zM293 33v1h1v-1zM293 43v1h1v-1zM293 184v1h1v-1zM294 32v1h1v-1zM294 42v1h1v-1zM295 30v2h1v-2zM295 40v2h1v-2zM295 182v1h1v-1zM296 29v1h1v-1zM296 39v1h1v-1zM296 180v1h1v-1zM297 178v1h1v-1zM299 176v1h1v-1zM300 174v1h1v-1zM301 172v1h1v-1zM303 170v1h1v-1zM304 168v1h1v-1zM305 166v1h1v-1zM307 164v1h1v-1zM308 162v1h1v-1zM309 160v1h1v-1zM311 158v1h1v-1zM312 156v1h1v-1zM395 185v1h1v-1zM410 153v1h1v-1zM410 157v5h1v-5zM411 154v1h1v-1zM411 156v1h1v-1zM411 162v1h1v-1zM414 164v3h1v-3zM414 168v2h1v-2zM417 154v1h1v-1zM417 156v1h1v-1zM417 162v1h1v-1zM418 153v1h1v-1zM418 157v5h1v-5zM420 211v1h1v-1zM437 183v5h1v-5zM438 182v1h1v-1zM438 188v1h1v-1zM441 190v3h1v-3zM441 194v4h1v-4zM444 182v1h1v-1zM444 188v1h1v-1zM445 183v5h1v-5zM528 417v3h1v-3zM529 416v1h1v-1zM529 420v1h1v-1zM535 416v1h1v-1zM535 420v1h1v-1zM536 417v3h1v-3zM744 129v1h1v-1zM744 131v2h1v-2zM744 166v1h1v-1zM744 209v1h1v-1zM744 214v1h1v-1zM745 167v7h1v-7zM745 208v1h1v-1zM745 213v1h1v-1zM745 306v1h1v-1zM745 311v1h1v-1zM746 166v1h1v-1zM746 206v1h1v-1zM746 211v1h1v-1zM746 256v1h1v-1zM746 258v3h1v-3zM746 267v3h1v-3zM746 307v2h1v-2zM746 310v1h1v-1zM747 131v2h1v-2zM747 167v7h1v-7zM747 209v1h1v-1zM747 214v1h1v-1zM747 313v1h1v-1zM748 166v1h1v-1zM748 262v1h1v-1zM748 264v1h1v-1zM748 271v1h1v-1zM748 273v2h1v-2zM748 308v1h1v-1zM748 310v2h1v-2zM748 314v1h1v-1zM749 129v2h1v-2zM749 167v7h1v-7zM749 206v1h1v-1zM749 211v1h1v-1zM749 313v1h1v-1zM750 209v1h1v-1zM750 214v1h1v-1zM750 256v1h1v-1zM750 258v3h1v-3zM750 267v3h1v-3zM750 307v2h1v-2zM750 310v1h1v-1zM751 207v1h1v-1zM751 212v1h1v-1zM751 306v1h1v-1zM751 311v1h1v-1zM752 129v2h1v-2zM752 132v1h1v-1zM752 172v2h1v-2zM752 206v1h1v-1zM752 211v1h1v-1z"/>
<path fill="#00f" d="M150 78h17v1h-17zM309 114h3v1h-3zM314 114h5v1h-5zM321 114h3v1h-3zM312 119h2v1h-2zM319 119h2v1h-2zM314 120h5v1h-5zM353 121h5v1h-5zM358 122h2v1h-2zM312 124h9v1h-9zM358 136h2v1h-2zM747 136h3v1h-3zM353 137h5v1h-5zM750 176h3v1h-3zM751 177h2v1h-2zM451 196h3v1h-3zM451 200h3v1h-3zM448 203h2v1h-2zM455 203h2v1h-2zM450 204h5v1h-5zM448 208h9v1h-9zM745 216h2v1h-2zM750 216h2v1h-2zM746 246h3v1h-3zM749 247h2v1h-2zM749 253h2v1h-2zM746 254h3v1h-3zM567 292h3v1h-3zM565 296h2v1h-2zM744 317h2v1h-2zM747 317h3v1h-3zM751 317h2v1h-2zM747 320h3v1h-3zM746 322h5v1h-5zM747 330h3v1h-3zM746 332h5v1h-5zM177 525h5v1h-5zM174 526h3v1h-3zM183 527h3v1h-3zM173 531h3v1h-3zM183 533h3v1h-3zM173 537h3v1h-3zM182 538h3v1h-3zM177 539h5v1h-5zM150 70v1h1v-1zM150 86v1h1v-1zM151 71v1h1v-1zM151 85v1h1v-1zM152 72v1h1v-1zM152 84v1h1v-1zM153 73v2h1v-2zM153 82v2h1v-2zM154 75v3h1v-3zM154 79v3h1v-3zM162 75v3h1v-3zM162 79v3h1v-3zM163 73v2h1v-2zM163 82v2h1v-2zM164 72v1h1v-1zM164 84v1h1v-1zM165 71v1h1v-1zM165 85v1h1v-1zM166 70v1h1v-1zM166 86v1h1v-1zM171 529v1h1v-1zM171 533v3h1v-3zM172 528v1h1v-1zM172 532v1h1v-1zM172 536v1h1v-1zM173 527v1h1v-1zM175 364v1h1v-1zM176 532v1h1v-1zM176 536v1h1v-1zM176 538v1h1v-1zM177 533v3h1v-3zM178 362v1h1v-1zM181 361v1h1v-1zM181 529v3h1v-3zM182 526v1h1v-1zM182 528v1h1v-1zM182 532v1h1v-1zM184 359v1h1v-1zM185 537v1h1v-1zM186 528v1h1v-1zM186 532v1h1v-1zM186 536v1h1v-1zM187 357v1h1v-1zM187 529v3h1v-3zM187 535v1h1v-1zM190 355v1h1v-1zM193 354v1h1v-1zM196 352v1h1v-1zM199 350v1h1v-1zM202 348v1h1v-1zM205 347v1h1v-1zM208 345v1h1v-1zM211 343v1h1v-1zM214 341v1h1v-1zM217 340v1h1v-1zM220 338v1h1v-1zM223 336v1h1v-1zM226 334v1h1v-1zM229 333v1h1v-1zM232 331v1h1v-1zM235 329v1h1v-1zM238 327v1h1v-1zM241 325v1h1v-1zM244 324v1h1v-1zM247 322v1h1v-1zM250 320v1h1v-1zM253 318v1h1v-1zM256 317v1h1v-1zM259 315v1h1v-1zM262 313v1h1v-1zM265 311v1h1v-1zM268 310v1h1v-1zM271 308v1h1v-1zM274 306v1h1v-1zM277 304v1h1v-1zM280 303v1h1v-1zM283 301v1h1v-1zM286 299v1h1v-1zM289 297v1h1v-1zM292 296v1h1v-1zM295 294v1h1v-1zM298 292v1h1v-1zM301 290v1h1v-1zM304 289v1h1v-1zM307 287v1h1v-1zM310 112v2h1v-2zM310 115v2h1v-2zM310 285v1h1v-1zM311 117v2h1v-2zM313 150v1h1v-1zM313 283v1h1v-1zM316 112v2h1v-2zM316 115v5h1v-5zM316 121v3h1v-3zM316 125v4h1v-4zM316 281v1h1v-1zM319 280v1h1v-1zM321 117v2h1v-2zM322 112v2h1v-2zM322 115v2h1v-2zM322 278v1h1v-1zM325 276v1h1v-1zM328 274v1h1v-1zM331 273v1h1v-1zM334 271v1h1v-1zM337 269v1h1v-1zM340 267v1h1v-1zM343 266v1h1v-1zM346 264v1h1v-1zM347 157v1h1v-1zM349 262v1h1v-1zM351 123v1h1v-1zM351 135v1h1v-1zM352 122v1h1v-1zM352 124v1h1v-1zM352 134v1h1v-1zM352 136v1h1v-1zM352 260v1h1v-1zM353 125v1h1v-1zM353 133v1h1v-1zM354 126v2h1v-2zM354 131v2h1v-2zM355 128v3h1v-3zM355 259v1h1v-1zM358 257v1h1v-1zM360 123v1h1v-1zM360 135v1h1v-1zM361 124v1h1v-1zM361 134v1h1v-1zM361 255v1h1v-1zM362 125v2h1v-2zM362 132v2h1v-2zM363 127v5h1v-5zM364 253v1h1v-1zM367 252v1h1v-1zM370 250v1h1v-1zM373 248v1h1v-1zM376 246v1h1v-1zM379 244v1h1v-1zM382 243v1h1v-1zM385 241v1h1v-1zM388 239v1h1v-1zM391 237v1h1v-1zM394 236v1h1v-1zM397 234v1h1v-1zM400 232v1h1v-1zM403 230v1h1v-1zM406 229v1h1v-1zM409 227v1h1v-1zM412 225v1h1v-1zM415 223v1h1v-1zM418 222v1h1v-1zM424 217v1h1v-1zM446 196v5h1v-5zM447 201v2h1v-2zM450 197v3h1v-3zM452 205v3h1v-3zM452 209v4h1v-4zM454 197v3h1v-3zM457 201v2h1v-2zM458 196v5h1v-5zM553 280v1h1v-1zM554 281v1h1v-1zM555 282v13h1v-13zM556 281v1h1v-1zM557 280v1h1v-1zM558 281v1h1v-1zM559 282v13h1v-13zM560 281v1h1v-1zM561 280v1h1v-1zM562 281v1h1v-1zM563 282v13h1v-13zM564 295v1h1v-1zM567 295v1h1v-1zM568 291v1h1v-1zM568 293v2h1v-2zM744 142v1h1v-1zM744 184v1h1v-1zM744 217v2h1v-2zM745 138v3h1v-3zM745 143v1h1v-1zM745 179v1h1v-1zM745 183v1h1v-1zM745 219v1h1v-1zM745 247v1h1v-1zM745 253v1h1v-1zM745 316v1h1v-1zM745 318v1h1v-1zM745 326v3h1v-3zM746 137v1h1v-1zM746 141v2h1v-2zM746 180v1h1v-1zM746 182v1h1v-1zM746 248v1h1v-1zM746 252v1h1v-1zM746 319v1h1v-1zM746 329v1h1v-1zM747 181v1h1v-1zM747 217v3h1v-3zM747 249v3h1v-3zM747 327v1h1v-1zM748 180v1h1v-1zM748 182v1h1v-1zM748 220v5h1v-5zM748 316v1h1v-1zM748 318v2h1v-2zM748 321v1h1v-1zM748 323v2h1v-2zM748 326v1h1v-1zM748 328v1h1v-1zM748 331v1h1v-1zM748 333v2h1v-2zM749 179v1h1v-1zM749 183v1h1v-1zM749 217v3h1v-3zM749 327v1h1v-1zM750 137v1h1v-1zM750 141v2h1v-2zM750 178v1h1v-1zM750 248v1h1v-1zM750 252v1h1v-1zM750 319v1h1v-1zM750 329v1h1v-1zM751 138v3h1v-3zM751 143v1h1v-1zM751 219v1h1v-1zM751 249v3h1v-3zM751 316v1h1v-1zM751 318v1h1v-1zM751 326v3h1v-3zM752 144v1h1v-1zM752 178v1h1v-1zM752 217v2h1v-2z"/>
<path fill="#808080" d="M461 133h2v1h-2zM464 136h2v1h-2zM467 139h2v1h-2zM472 145h2v1h-2zM119 147h2v1h-2zM125 147h2v1h-2zM475 148h2v1h-2zM480 149h2v1h-2zM125 152h2v1h-2zM114 153h2v1h-2zM120 153h2v1h-2zM474 154h2v1h-2zM480 154h2v1h-2zM120 158h2v1h-2zM488 158h2v1h-2zM108 159h2v1h-2zM484 161h2v1h-2zM491 161h2v1h-2zM106 162h2v1h-2zM112 162h2v1h-2zM480 164h2v1h-2zM487 164h2v1h-2zM110 165h2v1h-2zM116 165h2v1h-2zM493 165h2v1h-2zM103 166h2v1h-2zM105 167h2v1h-2zM483 167h2v1h-2zM114 168h2v1h-2zM489 168h2v1h-2zM496 168h2v1h-2zM101 169h2v1h-2zM108 169h2v1h-2zM110 170h2v1h-2zM493 170h2v1h-2zM112 171h2v1h-2zM485 171h2v1h-2zM105 172h2v1h-2zM490 172h2v1h-2zM487 174h2v1h-2zM109 175h2v1h-2zM500 175h2v1h-2zM97 176h2v1h-2zM498 176h2v1h-2zM496 177h2v1h-2zM100 178h2v1h-2zM102 179h2v1h-2zM493 179h2v1h-2zM502 179h2v1h-2zM94 180h2v1h-2zM491 180h2v1h-2zM500 180h2v1h-2zM96 181h2v1h-2zM105 181h2v1h-2zM498 181h2v1h-2zM504 182h2v1h-2zM92 183h2v1h-2zM99 183h2v1h-2zM495 183h2v1h-2zM502 183h2v1h-2zM94 184h2v1h-2zM101 184h2v1h-2zM493 184h2v1h-2zM500 184h2v1h-2zM103 185h2v1h-2zM97 186h2v1h-2zM497 186h2v1h-2zM506 186h2v1h-2zM90 187h2v1h-2zM99 187h2v1h-2zM495 187h2v1h-2zM504 187h2v1h-2zM92 188h2v1h-2zM101 188h2v1h-2zM502 188h2v1h-2zM94 189h2v1h-2zM96 190h2v1h-2zM499 190h2v1h-2zM98 191h2v1h-2zM497 191h2v1h-2zM100 192h2v1h-2zM510 193h2v1h-2zM87 194h2v1h-2zM508 194h2v1h-2zM89 195h2v1h-2zM506 195h2v1h-2zM91 196h2v1h-2zM93 197h2v1h-2zM503 197h2v1h-2zM511 197h2v1h-2zM85 198h2v1h-2zM95 198h2v1h-2zM501 198h2v1h-2zM509 198h2v1h-2zM87 199h2v1h-2zM97 199h2v1h-2zM507 199h2v1h-2zM89 200h2v1h-2zM505 200h2v1h-2zM82 201h2v1h-2zM91 201h2v1h-2zM503 201h2v1h-2zM513 201h2v1h-2zM84 202h2v1h-2zM93 202h2v1h-2zM511 202h2v1h-2zM86 203h2v1h-2zM95 203h2v1h-2zM509 203h2v1h-2zM88 204h3v1h-3zM507 204h2v1h-2zM516 204h2v1h-2zM80 205h2v1h-2zM91 205h2v1h-2zM505 205h2v1h-2zM514 205h2v1h-2zM82 206h2v1h-2zM93 206h2v1h-2zM511 206h3v1h-3zM84 207h3v1h-3zM509 207h2v1h-2zM87 208h3v1h-3zM507 208h2v1h-2zM90 209h2v1h-2zM505 209h2v1h-2zM77 212h2v1h-2zM518 212h2v1h-2zM79 213h2v1h-2zM516 213h2v1h-2zM81 214h3v1h-3zM514 214h2v1h-2zM84 215h3v1h-3zM512 215h2v1h-2zM521 215h2v1h-2zM76 216h2v1h-2zM87 216h2v1h-2zM510 216h2v1h-2zM519 216h2v1h-2zM78 217h2v1h-2zM516 217h3v1h-3zM80 218h2v1h-2zM513 218h3v1h-3zM82 219h3v1h-3zM511 219h2v1h-2zM74 220h2v1h-2zM85 220h2v1h-2zM509 220h2v1h-2zM521 220h2v1h-2zM76 221h2v1h-2zM87 221h2v1h-2zM518 221h3v1h-3zM78 222h3v1h-3zM515 222h3v1h-3zM81 223h3v1h-3zM513 223h2v1h-2zM73 224h2v1h-2zM84 224h2v1h-2zM511 224h2v1h-2zM522 224h2v1h-2zM75 225h3v1h-3zM86 225h2v1h-2zM519 225h3v1h-3zM78 226h4v1h-4zM516 226h3v1h-3zM82 227h3v1h-3zM514 227h2v1h-2zM85 228h2v1h-2zM512 228h2v1h-2zM526 231h2v1h-2zM70 232h2v1h-2zM523 232h3v1h-3zM72 233h3v1h-3zM519 233h4v1h-4zM75 234h4v1h-4zM516 234h3v1h-3zM79 235h3v1h-3zM514 235h2v1h-2zM69 236h2v1h-2zM82 236h2v1h-2zM524 236h4v1h-4zM71 237h3v1h-3zM521 237h3v1h-3zM74 238h4v1h-4zM517 238h4v1h-4zM78 239h3v1h-3zM515 239h2v1h-2zM68 240h2v1h-2zM81 240h2v1h-2zM526 240h3v1h-3zM70 241h3v1h-3zM522 241h4v1h-4zM73 242h4v1h-4zM519 242h3v1h-3zM77 243h3v1h-3zM517 243h2v1h-2zM529 243h2v1h-2zM67 244h3v1h-3zM80 244h2v1h-2zM524 244h5v1h-5zM70 245h4v1h-4zM520 245h4v1h-4zM74 246h4v1h-4zM517 246h3v1h-3zM78 247h3v1h-3zM531 251h2v1h-2zM66 252h2v1h-2zM526 252h5v1h-5zM68 253h4v1h-4zM522 253h4v1h-4zM72 254h5v1h-5zM519 254h3v1h-3zM77 255h2v1h-2zM531 255h3v1h-3zM65 256h2v1h-2zM527 256h4v1h-4zM67 257h4v1h-4zM523 257h4v1h-4zM71 258h5v1h-5zM520 258h3v1h-3zM76 259h2v1h-2zM531 260h4v1h-4zM64 261h4v1h-4zM525 261h6v1h-6zM68 262h6v1h-6zM521 262h4v1h-4zM74 263h4v1h-4zM532 264h4v1h-4zM63 265h4v1h-4zM525 265h7v1h-7zM67 266h7v1h-7zM522 266h3v1h-3zM74 267h3v1h-3zM533 272h4v1h-4zM62 273h7v1h-7zM526 273h7v1h-7zM69 274h7v1h-7zM523 274h3v1h-3zM530 276h7v1h-7zM62 277h7v1h-7zM523 277h7v1h-7zM69 278h7v1h-7zM530 280h7v1h-7zM62 281h6v1h-6zM523 281h7v1h-7zM68 282h8v1h-8zM530 284h7v1h-7zM62 285h6v1h-6zM523 285h7v1h-7zM68 286h8v1h-8zM524 293h14v1h-14zM61 294h14v1h-14zM297 297h2v1h-2zM524 297h14v1h-14zM61 298h14v1h-14zM524 300h14v1h-14zM61 301h14v1h-14zM300 301h2v1h-2zM524 304h14v1h-14zM61 305h14v1h-14zM523 312h7v1h-7zM68 313h8v1h-8zM530 313h7v1h-7zM62 314h6v1h-6zM523 316h7v1h-7zM68 317h8v1h-8zM530 317h7v1h-7zM62 318h6v1h-6zM523 320h7v1h-7zM69 321h7v1h-7zM530 321h7v1h-7zM62 322h7v1h-7zM73 324h3v1h-3zM523 324h6v1h-6zM66 325h7v1h-7zM529 325h8v1h-8zM62 326h4v1h-4zM522 331h3v1h-3zM74 332h3v1h-3zM525 332h7v1h-7zM67 333h7v1h-7zM532 333h4v1h-4zM64 334h3v1h-3zM521 335h4v1h-4zM74 336h4v1h-4zM525 336h6v1h-6zM68 337h6v1h-6zM531 337h4v1h-4zM65 338h3v1h-3zM520 339h3v1h-3zM76 340h3v1h-3zM523 340h4v1h-4zM72 341h4v1h-4zM527 341h5v1h-5zM68 342h4v1h-4zM532 342h2v1h-2zM65 343h3v1h-3zM519 343h3v1h-3zM77 344h3v1h-3zM522 344h4v1h-4zM72 345h5v1h-5zM526 345h5v1h-5zM68 346h4v1h-4zM531 346h2v1h-2zM66 347h2v1h-2zM518 351h3v1h-3zM79 352h3v1h-3zM521 352h4v1h-4zM74 353h5v1h-5zM525 353h4v1h-4zM70 354h4v1h-4zM517 354h2v1h-2zM529 354h2v1h-2zM68 355h2v1h-2zM80 355h2v1h-2zM519 355h3v1h-3zM77 356h3v1h-3zM522 356h4v1h-4zM73 357h4v1h-4zM526 357h3v1h-3zM70 358h3v1h-3zM516 358h2v1h-2zM529 358h2v1h-2zM82 359h2v1h-2zM518 359h3v1h-3zM78 360h4v1h-4zM521 360h4v1h-4zM75 361h3v1h-3zM525 361h3v1h-3zM71 362h4v1h-4zM515 362h2v1h-2zM528 362h2v1h-2zM83 363h2v1h-2zM517 363h3v1h-3zM80 364h3v1h-3zM520 364h4v1h-4zM76 365h4v1h-4zM524 365h3v1h-3zM73 366h3v1h-3zM527 366h2v1h-2zM71 367h2v1h-2zM85 370h2v1h-2zM512 370h2v1h-2zM83 371h2v1h-2zM514 371h3v1h-3zM80 372h3v1h-3zM161 372h2v1h-2zM517 372h4v1h-4zM77 373h3v1h-3zM159 373h2v1h-2zM511 373h2v1h-2zM521 373h3v1h-3zM75 374h2v1h-2zM86 374h2v1h-2zM157 374h2v1h-2zM513 374h2v1h-2zM524 374h2v1h-2zM84 375h2v1h-2zM155 375h2v1h-2zM515 375h3v1h-3zM81 376h3v1h-3zM153 376h2v1h-2zM518 376h3v1h-3zM78 377h3v1h-3zM151 377h2v1h-2zM510 377h2v1h-2zM521 377h2v1h-2zM76 378h2v1h-2zM88 378h2v1h-2zM512 378h2v1h-2zM523 378h2v1h-2zM86 379h2v1h-2zM514 379h2v1h-2zM83 380h3v1h-3zM516 380h3v1h-3zM80 381h3v1h-3zM89 381h2v1h-2zM508 381h2v1h-2zM519 381h2v1h-2zM78 382h2v1h-2zM87 382h2v1h-2zM510 382h2v1h-2zM521 382h2v1h-2zM76 383h2v1h-2zM85 383h2v1h-2zM512 383h3v1h-3zM83 384h2v1h-2zM515 384h3v1h-3zM81 385h2v1h-2zM518 385h2v1h-2zM79 386h2v1h-2zM520 386h2v1h-2zM92 389h2v1h-2zM507 389h2v1h-2zM90 390h2v1h-2zM509 390h3v1h-3zM87 391h3v1h-3zM512 391h3v1h-3zM85 392h2v1h-2zM504 392h2v1h-2zM515 392h2v1h-2zM83 393h2v1h-2zM92 393h2v1h-2zM506 393h2v1h-2zM81 394h2v1h-2zM90 394h2v1h-2zM508 394h2v1h-2zM88 395h2v1h-2zM510 395h3v1h-3zM86 396h2v1h-2zM95 396h2v1h-2zM503 396h2v1h-2zM513 396h2v1h-2zM84 397h2v1h-2zM93 397h2v1h-2zM505 397h2v1h-2zM515 397h2v1h-2zM91 398h2v1h-2zM507 398h2v1h-2zM89 399h2v1h-2zM500 399h2v1h-2zM509 399h2v1h-2zM87 400h2v1h-2zM96 400h2v1h-2zM502 400h2v1h-2zM511 400h2v1h-2zM85 401h2v1h-2zM94 401h2v1h-2zM504 401h2v1h-2zM513 401h2v1h-2zM92 402h2v1h-2zM506 402h2v1h-2zM508 403h2v1h-2zM89 404h2v1h-2zM510 404h2v1h-2zM87 405h2v1h-2zM100 407h2v1h-2zM498 407h2v1h-2zM98 408h2v1h-2zM500 408h2v1h-2zM96 409h2v1h-2zM502 409h2v1h-2zM496 410h2v1h-2zM504 410h2v1h-2zM93 411h2v1h-2zM102 411h2v1h-2zM498 411h2v1h-2zM506 411h2v1h-2zM91 412h2v1h-2zM100 412h2v1h-2zM98 413h2v1h-2zM494 413h2v1h-2zM501 413h2v1h-2zM104 414h2v1h-2zM496 414h2v1h-2zM503 414h2v1h-2zM95 415h2v1h-2zM102 415h2v1h-2zM505 415h2v1h-2zM93 416h2v1h-2zM100 416h2v1h-2zM499 416h2v1h-2zM492 417h2v1h-2zM501 417h2v1h-2zM97 418h2v1h-2zM106 418h2v1h-2zM503 418h2v1h-2zM95 419h2v1h-2zM104 419h2v1h-2zM495 419h2v1h-2zM102 420h2v1h-2zM497 420h2v1h-2zM99 422h2v1h-2zM500 422h2v1h-2zM97 423h2v1h-2zM488 423h2v1h-2zM110 424h2v1h-2zM107 426h2v1h-2zM492 426h2v1h-2zM112 427h2v1h-2zM485 427h2v1h-2zM104 428h2v1h-2zM487 428h2v1h-2zM496 429h2v1h-2zM101 430h2v1h-2zM108 430h2v1h-2zM483 430h2v1h-2zM490 430h2v1h-2zM114 431h2v1h-2zM492 431h2v1h-2zM494 432h2v1h-2zM104 433h2v1h-2zM481 433h2v1h-2zM487 433h2v1h-2zM110 434h2v1h-2zM117 434h2v1h-2zM485 436h2v1h-2zM491 436h2v1h-2zM106 437h2v1h-2zM113 437h2v1h-2zM489 439h2v1h-2zM109 440h2v1h-2zM477 440h2v1h-2zM118 443h2v1h-2zM123 444h2v1h-2zM483 445h2v1h-2zM472 446h2v1h-2zM478 446h2v1h-2zM117 449h2v1h-2zM123 449h2v1h-2zM478 451h2v1h-2zM126 452h2v1h-2zM473 452h2v1h-2zM131 458h2v1h-2zM134 461h2v1h-2zM137 464h2v1h-2zM69 359v1h1v-1zM70 363v1h1v-1zM74 375v1h1v-1zM75 379v1h1v-1zM78 387v1h1v-1zM83 398v1h1v-1zM84 197v1h1v-1zM86 193v1h1v-1zM89 217v1h1v-1zM90 413v1h1v-1zM91 403v1h1v-1zM92 210v1h1v-1zM92 417v1h1v-1zM94 392v1h1v-1zM94 420v1h1v-1zM95 410v1h1v-1zM96 175v1h1v-1zM96 185v1h1v-1zM96 424v1h1v-1zM97 414v1h1v-1zM98 182v1h1v-1zM98 399v1h1v-1zM99 177v1h1v-1zM99 417v1h1v-1zM101 421v1h1v-1zM103 170v1h1v-1zM103 189v1h1v-1zM103 429v1h1v-1zM103 434v1h1v-1zM104 171v1h1v-1zM104 180v1h1v-1zM105 186v1h1v-1zM106 427v1h1v-1zM106 432v1h1v-1zM107 168v1h1v-1zM107 173v1h1v-1zM107 182v1h1v-1zM107 431v1h1v-1zM108 163v1h1v-1zM108 174v1h1v-1zM108 417v1h1v-1zM108 436v1h1v-1zM108 441v1h1v-1zM109 164v1h1v-1zM109 425v1h1v-1zM109 435v1h1v-1zM110 160v1h1v-1zM110 429v1h1v-1zM111 161v1h1v-1zM111 176v1h1v-1zM111 428v1h1v-1zM111 439v1h1v-1zM112 166v1h1v-1zM112 433v1h1v-1zM112 438v1h1v-1zM113 152v1h1v-1zM113 167v1h1v-1zM113 432v1h1v-1zM114 163v1h1v-1zM114 172v1h1v-1zM114 426v1h1v-1zM114 447v1h1v-1zM115 148v1h1v-1zM115 164v1h1v-1zM115 436v1h1v-1zM115 446v1h1v-1zM116 149v1h1v-1zM116 154v1h1v-1zM116 169v1h1v-1zM116 430v1h1v-1zM116 435v1h1v-1zM116 445v1h1v-1zM116 450v1h1v-1zM117 150v1h1v-1zM117 155v1h1v-1zM117 444v1h1v-1zM118 146v1h1v-1zM118 151v1h1v-1zM118 156v1h1v-1zM118 166v1h1v-1zM119 152v1h1v-1zM119 157v1h1v-1zM119 433v1h1v-1zM119 448v1h1v-1zM119 453v1h1v-1zM120 142v1h1v-1zM120 442v1h1v-1zM120 447v1h1v-1zM120 452v1h1v-1zM121 143v1h1v-1zM121 148v1h1v-1zM121 441v1h1v-1zM121 446v1h1v-1zM121 451v1h1v-1zM121 457v1h1v-1zM122 144v1h1v-1zM122 149v1h1v-1zM122 154v1h1v-1zM122 159v1h1v-1zM122 440v1h1v-1zM122 445v1h1v-1zM122 450v1h1v-1zM122 456v1h1v-1zM123 145v1h1v-1zM123 150v1h1v-1zM123 155v1h1v-1zM123 160v1h1v-1zM123 439v1h1v-1zM123 455v1h1v-1zM124 146v1h1v-1zM124 151v1h1v-1zM124 156v1h1v-1zM124 454v1h1v-1zM125 157v1h1v-1zM125 443v1h1v-1zM125 448v1h1v-1zM125 453v1h1v-1zM126 135v1h1v-1zM126 442v1h1v-1zM126 447v1h1v-1zM126 463v1h1v-1zM127 136v1h1v-1zM127 148v1h1v-1zM127 153v1h1v-1zM127 446v1h1v-1zM127 462v1h1v-1zM128 137v1h1v-1zM128 149v1h1v-1zM128 154v1h1v-1zM128 445v1h1v-1zM128 451v1h1v-1zM128 461v1h1v-1zM129 132v1h1v-1zM129 138v1h1v-1zM129 150v1h1v-1zM129 450v1h1v-1zM129 460v1h1v-1zM129 466v1h1v-1zM130 133v1h1v-1zM130 139v1h1v-1zM130 151v1h1v-1zM130 449v1h1v-1zM130 459v1h1v-1zM130 465v1h1v-1zM131 134v1h1v-1zM131 140v1h1v-1zM131 391v1h1v-1zM131 448v1h1v-1zM131 464v1h1v-1zM132 129v1h1v-1zM132 135v1h1v-1zM132 141v1h1v-1zM132 463v1h1v-1zM132 469v1h1v-1zM133 130v1h1v-1zM133 136v1h1v-1zM133 142v1h1v-1zM133 390v1h1v-1zM133 457v1h1v-1zM133 462v1h1v-1zM133 468v1h1v-1zM134 131v1h1v-1zM134 137v2h1v-2zM134 143v1h1v-1zM134 456v1h1v-1zM134 467v1h1v-1zM135 126v1h1v-1zM135 132v1h1v-1zM135 139v1h1v-1zM135 144v1h1v-1zM135 389v1h1v-1zM135 455v1h1v-1zM135 466v1h1v-1zM135 472v1h1v-1zM136 127v1h1v-1zM136 133v1h1v-1zM136 140v1h1v-1zM136 145v1h1v-1zM136 454v1h1v-1zM136 460v1h1v-1zM136 465v1h1v-1zM136 471v1h1v-1zM137 128v1h1v-1zM137 134v2h1v-2zM137 141v1h1v-1zM137 388v1h1v-1zM137 459v1h1v-1zM137 470v1h1v-1zM138 129v1h1v-1zM138 136v1h1v-1zM138 142v1h1v-1zM138 458v1h1v-1zM138 469v1h1v-1zM139 130v1h1v-1zM139 137v1h1v-1zM139 387v1h1v-1zM139 457v1h1v-1zM139 463v1h1v-1zM139 468v1h1v-1zM140 131v2h1v-2zM140 138v1h1v-1zM140 462v1h1v-1zM140 467v1h1v-1zM141 121v1h1v-1zM141 133v1h1v-1zM141 139v1h1v-1zM141 386v1h1v-1zM141 461v1h1v-1zM141 466v1h1v-1zM142 122v1h1v-1zM142 134v1h1v-1zM142 460v1h1v-1zM142 465v1h1v-1zM142 478v1h1v-1zM143 123v1h1v-1zM143 135v1h1v-1zM143 385v1h1v-1zM143 464v1h1v-1zM143 477v1h1v-1zM144 124v1h1v-1zM144 136v1h1v-1zM144 463v1h1v-1zM144 476v1h1v-1zM145 119v1h1v-1zM145 125v1h1v-1zM145 384v1h1v-1zM145 462v1h1v-1zM145 475v1h1v-1zM146 120v1h1v-1zM146 126v2h1v-2zM146 473v2h1v-2zM146 480v1h1v-1zM147 121v1h1v-1zM147 128v1h1v-1zM147 383v1h1v-1zM147 472v1h1v-1zM147 478v2h1v-2zM148 116v1h1v-1zM148 122v1h1v-1zM148 129v1h1v-1zM148 471v1h1v-1zM148 477v1h1v-1zM148 483v1h1v-1zM149 117v2h1v-2zM149 123v2h1v-2zM149 130v1h1v-1zM149 177v1h1v-1zM149 382v1h1v-1zM149 470v1h1v-1zM149 476v1h1v-1zM149 482v1h1v-1zM150 119v1h1v-1zM150 125v1h1v-1zM150 131v1h1v-1zM150 469v1h1v-1zM150 475v1h1v-1zM150 481v1h1v-1zM151 114v1h1v-1zM151 120v1h1v-1zM151 126v1h1v-1zM151 179v1h1v-1zM151 380v1h1v-1zM151 468v1h1v-1zM151 474v1h1v-1zM151 480v1h1v-1zM152 115v1h1v-1zM152 121v1h1v-1zM152 127v1h1v-1zM152 472v2h1v-2zM152 478v2h1v-2zM152 485v1h1v-1zM153 116v1h1v-1zM153 122v1h1v-1zM153 128v1h1v-1zM153 180v1h1v-1zM153 379v1h1v-1zM153 471v1h1v-1zM153 477v1h1v-1zM153 483v2h1v-2zM154 117v1h1v-1zM154 123v2h1v-2zM154 470v1h1v-1zM154 476v1h1v-1zM154 482v1h1v-1zM155 118v2h1v-2zM155 125v1h1v-1zM155 182v1h1v-1zM155 378v1h1v-1zM155 475v1h1v-1zM155 481v1h1v-1zM156 120v1h1v-1zM156 126v1h1v-1zM156 474v1h1v-1zM156 480v1h1v-1zM157 108v1h1v-1zM157 121v1h1v-1zM157 184v1h1v-1zM157 377v1h1v-1zM157 473v1h1v-1zM157 479v1h1v-1zM158 109v2h1v-2zM158 122v1h1v-1zM158 477v2h1v-2zM159 111v1h1v-1zM159 123v1h1v-1zM159 185v1h1v-1zM159 376v1h1v-1zM159 476v1h1v-1zM159 489v2h1v-2zM160 112v1h1v-1zM160 475v1h1v-1zM160 488v1h1v-1zM161 106v2h1v-2zM161 113v2h1v-2zM161 187v1h1v-1zM161 375v1h1v-1zM161 487v1h1v-1zM162 108v1h1v-1zM162 115v1h1v-1zM162 485v2h1v-2zM162 491v2h1v-2zM163 109v1h1v-1zM163 116v1h1v-1zM163 188v1h1v-1zM163 374v1h1v-1zM163 484v1h1v-1zM163 490v1h1v-1zM164 103v1h1v-1zM164 110v2h1v-2zM164 117v2h1v-2zM164 483v1h1v-1zM164 489v1h1v-1zM165 104v2h1v-2zM165 112v1h1v-1zM165 119v1h1v-1zM165 190v1h1v-1zM165 373v1h1v-1zM165 481v2h1v-2zM165 487v2h1v-2zM166 106v1h1v-1zM166 113v1h1v-1zM166 480v1h1v-1zM166 486v1h1v-1zM166 494v2h1v-2zM167 107v1h1v-1zM167 114v2h1v-2zM167 192v1h1v-1zM167 372v1h1v-1zM167 485v1h1v-1zM167 492v2h1v-2zM168 101v2h1v-2zM168 108v2h1v-2zM168 116v1h1v-1zM168 483v2h1v-2zM168 490v2h1v-2zM169 103v1h1v-1zM169 110v1h1v-1zM169 193v1h1v-1zM169 371v1h1v-1zM169 482v1h1v-1zM169 489v1h1v-1zM169 496v2h1v-2zM170 104v2h1v-2zM170 111v1h1v-1zM170 487v2h1v-2zM170 495v1h1v-1zM171 106v1h1v-1zM171 112v2h1v-2zM171 195v1h1v-1zM171 369v1h1v-1zM171 485v2h1v-2zM171 494v1h1v-1zM172 107v2h1v-2zM172 114v1h1v-1zM172 484v1h1v-1zM172 492v2h1v-2zM173 109v1h1v-1zM173 197v1h1v-1zM173 368v1h1v-1zM173 491v1h1v-1zM174 96v1h1v-1zM174 110v2h1v-2zM174 490v1h1v-1zM175 97v2h1v-2zM175 198v1h1v-1zM175 367v1h1v-1zM175 488v2h1v-2zM175 502v1h1v-1zM176 99v2h1v-2zM176 487v1h1v-1zM176 500v2h1v-2zM177 101v1h1v-1zM177 200v1h1v-1zM177 366v1h1v-1zM177 499v1h1v-1zM178 94v1h1v-1zM178 102v2h1v-2zM178 497v2h1v-2zM179 95v2h1v-2zM179 104v2h1v-2zM179 201v1h1v-1zM179 365v1h1v-1zM179 495v2h1v-2zM180 97v2h1v-2zM180 106v2h1v-2zM180 417v1h1v-1zM180 494v1h1v-1zM180 503v2h1v-2zM181 92v1h1v-1zM181 99v1h1v-1zM181 108v1h1v-1zM181 203v1h1v-1zM181 364v1h1v-1zM181 416v1h1v-1zM181 492v2h1v-2zM181 501v2h1v-2zM182 93v2h1v-2zM182 100v2h1v-2zM182 415v1h1v-1zM182 491v1h1v-1zM182 499v2h1v-2zM183 95v2h1v-2zM183 102v2h1v-2zM183 205v1h1v-1zM183 363v1h1v-1zM183 414v1h1v-1zM183 498v1h1v-1zM183 505v2h1v-2zM184 97v1h1v-1zM184 104v2h1v-2zM184 413v1h1v-1zM184 496v2h1v-2zM184 503v2h1v-2zM185 90v1h1v-1zM185 98v2h1v-2zM185 206v1h1v-1zM185 362v1h1v-1zM185 412v1h1v-1zM185 453v1h1v-1zM185 494v2h1v-2zM185 501v2h1v-2zM186 91v2h1v-2zM186 100v2h1v-2zM186 411v1h1v-1zM186 451v1h1v-1zM186 493v1h1v-1zM186 500v1h1v-1zM186 508v1h1v-1zM187 93v2h1v-2zM187 102v2h1v-2zM187 208v1h1v-1zM187 361v1h1v-1zM187 410v1h1v-1zM187 498v2h1v-2zM187 506v2h1v-2zM188 95v1h1v-1zM188 409v1h1v-1zM188 449v1h1v-1zM188 496v2h1v-2zM188 504v2h1v-2zM189 96v2h1v-2zM189 210v1h1v-1zM189 360v1h1v-1zM189 408v1h1v-1zM189 447v1h1v-1zM189 495v1h1v-1zM189 502v2h1v-2zM190 98v2h1v-2zM190 500v2h1v-2zM191 100v2h1v-2zM191 211v1h1v-1zM191 358v1h1v-1zM191 445v1h1v-1zM191 498v2h1v-2zM192 86v1h1v-1zM192 443v1h1v-1zM192 497v1h1v-1zM193 87v2h1v-2zM193 213v1h1v-1zM193 357v1h1v-1zM193 512v1h1v-1zM194 89v2h1v-2zM194 441v1h1v-1zM194 510v2h1v-2zM195 91v1h1v-1zM195 214v1h1v-1zM195 356v1h1v-1zM195 439v1h1v-1zM195 508v2h1v-2zM196 92v2h1v-2zM196 506v2h1v-2zM197 85v2h1v-2zM197 94v2h1v-2zM197 216v1h1v-1zM197 355v1h1v-1zM197 437v1h1v-1zM197 504v2h1v-2zM197 513v2h1v-2zM198 87v2h1v-2zM198 96v2h1v-2zM198 435v1h1v-1zM198 502v2h1v-2zM198 511v2h1v-2zM199 89v2h1v-2zM199 98v1h1v-1zM199 218v1h1v-1zM199 354v1h1v-1zM199 500v2h1v-2zM199 509v2h1v-2zM200 83v1h1v-1zM200 91v2h1v-2zM200 433v1h1v-1zM200 507v2h1v-2zM201 84v2h1v-2zM201 93v2h1v-2zM201 219v1h1v-1zM201 353v1h1v-1zM201 431v1h1v-1zM201 505v2h1v-2zM201 515v2h1v-2zM202 86v2h1v-2zM202 95v2h1v-2zM202 503v2h1v-2zM202 513v2h1v-2zM203 88v2h1v-2zM203 221v1h1v-1zM203 352v1h1v-1zM203 429v1h1v-1zM203 502v1h1v-1zM203 510v3h1v-3zM204 81v2h1v-2zM204 90v2h1v-2zM204 427v1h1v-1zM204 508v2h1v-2zM205 83v2h1v-2zM205 92v2h1v-2zM205 223v1h1v-1zM205 351v1h1v-1zM205 506v2h1v-2zM205 517v2h1v-2zM206 85v2h1v-2zM206 94v1h1v-1zM206 425v1h1v-1zM206 504v2h1v-2zM206 515v2h1v-2zM207 87v3h1v-3zM207 224v1h1v-1zM207 350v1h1v-1zM207 423v1h1v-1zM207 512v3h1v-3zM208 90v2h1v-2zM208 421v1h1v-1zM208 509v3h1v-3zM209 92v2h1v-2zM209 226v1h1v-1zM209 349v1h1v-1zM209 507v2h1v-2zM210 419v1h1v-1zM210 506v1h1v-1zM211 78v1h1v-1zM211 227v1h1v-1zM211 347v1h1v-1zM211 417v1h1v-1zM212 79v2h1v-2zM212 520v2h1v-2zM213 81v2h1v-2zM213 229v1h1v-1zM213 346v1h1v-1zM213 415v1h1v-1zM213 518v2h1v-2zM214 83v2h1v-2zM214 413v1h1v-1zM214 515v3h1v-3zM215 76v2h1v-2zM215 85v2h1v-2zM215 231v1h1v-1zM215 345v1h1v-1zM215 512v3h1v-3zM216 78v2h1v-2zM216 87v2h1v-2zM216 411v1h1v-1zM216 445v1h1v-1zM216 510v2h1v-2zM216 521v2h1v-2zM217 80v3h1v-3zM217 89v1h1v-1zM217 232v1h1v-1zM217 344v1h1v-1zM217 409v1h1v-1zM217 443v2h1v-2zM217 509v1h1v-1zM217 519v2h1v-2zM218 83v3h1v-3zM218 441v2h1v-2zM218 516v3h1v-3zM219 75v1h1v-1zM219 86v2h1v-2zM219 234v1h1v-1zM219 343v1h1v-1zM219 407v1h1v-1zM219 439v2h1v-2zM219 514v2h1v-2zM220 76v2h1v-2zM220 88v2h1v-2zM220 405v1h1v-1zM220 437v2h1v-2zM220 512v2h1v-2zM220 523v2h1v-2zM221 78v3h1v-3zM221 236v1h1v-1zM221 342v1h1v-1zM221 435v2h1v-2zM221 510v2h1v-2zM221 521v2h1v-2zM222 81v3h1v-3zM222 403v1h1v-1zM222 434v1h1v-1zM222 518v3h1v-3zM223 74v1h1v-1zM223 84v2h1v-2zM223 237v1h1v-1zM223 341v1h1v-1zM223 401v1h1v-1zM223 515v3h1v-3zM224 75v2h1v-2zM224 86v2h1v-2zM224 513v2h1v-2zM224 524v2h1v-2zM225 77v3h1v-3zM225 239v1h1v-1zM225 340v1h1v-1zM225 399v1h1v-1zM225 511v2h1v-2zM225 521v3h1v-3zM226 80v3h1v-3zM226 397v1h1v-1zM226 517v4h1v-4zM227 83v2h1v-2zM227 240v1h1v-1zM227 339v1h1v-1zM227 514v3h1v-3zM228 85v2h1v-2zM228 395v1h1v-1zM228 512v2h1v-2zM229 242v1h1v-1zM229 338v1h1v-1zM229 393v1h1v-1zM231 71v2h1v-2zM231 244v1h1v-1zM231 336v1h1v-1zM231 391v1h1v-1zM232 73v3h1v-3zM232 389v1h1v-1zM232 527v2h1v-2zM233 76v4h1v-4zM233 245v1h1v-1zM233 524v3h1v-3zM234 80v3h1v-3zM234 387v1h1v-1zM234 520v4h1v-4zM235 70v1h1v-1zM235 83v2h1v-2zM235 247v1h1v-1zM235 334v1h1v-1zM235 385v1h1v-1zM235 517v3h1v-3zM236 71v4h1v-4zM236 515v2h1v-2zM236 528v2h1v-2zM237 75v3h1v-3zM237 249v1h1v-1zM237 333v1h1v-1zM237 383v1h1v-1zM237 525v3h1v-3zM238 78v4h1v-4zM238 381v1h1v-1zM238 521v4h1v-4zM239 69v1h1v-1zM239 82v2h1v-2zM239 250v1h1v-1zM239 332v1h1v-1zM239 518v3h1v-3zM240 70v3h1v-3zM240 379v1h1v-1zM240 516v2h1v-2zM240 529v2h1v-2zM241 73v4h1v-4zM241 252v1h1v-1zM241 331v1h1v-1zM241 377v1h1v-1zM241 526v3h1v-3zM242 77v3h1v-3zM242 522v4h1v-4zM243 68v2h1v-2zM243 80v2h1v-2zM243 253v1h1v-1zM243 330v1h1v-1zM243 375v1h1v-1zM243 519v3h1v-3zM244 70v4h1v-4zM244 373v1h1v-1zM244 517v2h1v-2zM244 529v3h1v-3zM245 74v5h1v-5zM245 255v1h1v-1zM245 329v1h1v-1zM245 525v4h1v-4zM246 79v3h1v-3zM246 113v1h1v-1zM246 371v1h1v-1zM246 521v4h1v-4zM247 115v1h1v-1zM247 117v1h1v-1zM247 257v1h1v-1zM247 328v1h1v-1zM247 369v1h1v-1zM247 518v3h1v-3zM248 119v1h1v-1zM248 121v1h1v-1zM249 123v1h1v-1zM249 125v1h1v-1zM249 258v1h1v-1zM249 327v1h1v-1zM249 367v1h1v-1zM250 127v1h1v-1zM250 365v1h1v-1zM251 66v2h1v-2zM251 129v1h1v-1zM251 131v1h1v-1zM251 260v1h1v-1zM251 325v1h1v-1zM252 68v4h1v-4zM252 133v1h1v-1zM252 135v1h1v-1zM252 363v1h1v-1zM252 531v2h1v-2zM253 72v5h1v-5zM253 137v1h1v-1zM253 139v1h1v-1zM253 262v1h1v-1zM253 324v1h1v-1zM253 361v1h1v-1zM253 526v5h1v-5zM254 77v3h1v-3zM254 141v1h1v-1zM254 359v1h1v-1zM254 522v4h1v-4zM255 65v3h1v-3zM255 143v1h1v-1zM255 145v1h1v-1zM255 263v1h1v-1zM255 323v1h1v-1zM255 520v2h1v-2zM256 68v4h1v-4zM256 147v1h1v-1zM256 149v1h1v-1zM256 357v1h1v-1zM256 532v2h1v-2zM257 72v4h1v-4zM257 151v1h1v-1zM257 153v1h1v-1zM257 265v1h1v-1zM257 322v1h1v-1zM257 355v1h1v-1zM257 527v5h1v-5zM258 76v3h1v-3zM258 155v1h1v-1zM258 523v4h1v-4zM259 157v1h1v-1zM259 159v1h1v-1zM259 266v1h1v-1zM259 321v1h1v-1zM259 353v1h1v-1zM259 521v2h1v-2zM260 64v4h1v-4zM260 161v1h1v-1zM260 163v1h1v-1zM260 351v1h1v-1zM261 68v6h1v-6zM261 165v1h1v-1zM261 167v1h1v-1zM261 268v1h1v-1zM261 320v1h1v-1zM261 531v4h1v-4zM262 74v4h1v-4zM262 169v1h1v-1zM262 349v1h1v-1zM262 525v6h1v-6zM263 171v1h1v-1zM263 173v1h1v-1zM263 270v1h1v-1zM263 319v1h1v-1zM263 347v1h1v-1zM263 521v4h1v-4zM264 63v4h1v-4zM264 175v1h1v-1zM264 177v1h1v-1zM265 67v7h1v-7zM265 179v1h1v-1zM265 181v1h1v-1zM265 271v1h1v-1zM265 318v1h1v-1zM265 345v1h1v-1zM265 532v4h1v-4zM266 74v3h1v-3zM266 183v1h1v-1zM266 343v1h1v-1zM266 525v7h1v-7zM267 185v1h1v-1zM267 187v1h1v-1zM267 273v1h1v-1zM267 317v1h1v-1zM267 522v3h1v-3zM268 189v1h1v-1zM268 191v1h1v-1zM268 341v1h1v-1zM269 193v1h1v-1zM269 195v1h1v-1zM269 275v1h1v-1zM269 316v1h1v-1zM269 339v1h1v-1zM270 197v1h1v-1zM271 199v1h1v-1zM271 201v1h1v-1zM271 276v1h1v-1zM271 314v1h1v-1zM271 337v1h1v-1zM272 62v4h1v-4zM272 203v1h1v-1zM272 205v1h1v-1zM272 335v1h1v-1zM273 66v7h1v-7zM273 207v1h1v-1zM273 209v1h1v-1zM273 278v1h1v-1zM273 313v1h1v-1zM273 529v8h1v-8zM274 73v3h1v-3zM274 211v1h1v-1zM274 213v1h1v-1zM274 333v1h1v-1zM274 523v6h1v-6zM275 215v1h1v-1zM275 279v1h1v-1zM275 312v1h1v-1zM275 331v1h1v-1zM276 62v7h1v-7zM276 217v1h1v-1zM276 219v1h1v-1zM277 69v7h1v-7zM277 221v1h1v-1zM277 223v1h1v-1zM277 281v1h1v-1zM277 311v1h1v-1zM277 329v1h1v-1zM277 530v7h1v-7zM278 225v1h1v-1zM278 227v1h1v-1zM278 327v1h1v-1zM278 523v7h1v-7zM279 229v1h1v-1zM279 283v1h1v-1zM279 310v1h1v-1zM280 62v6h1v-6zM280 231v1h1v-1zM280 233v1h1v-1zM280 325v1h1v-1zM281 68v8h1v-8zM281 235v1h1v-1zM281 237v1h1v-1zM281 284v1h1v-1zM281 309v1h1v-1zM281 323v1h1v-1zM281 530v7h1v-7zM282 239v1h1v-1zM282 241v1h1v-1zM282 523v7h1v-7zM283 243v1h1v-1zM283 286v1h1v-1zM283 308v1h1v-1zM283 321v1h1v-1zM284 62v6h1v-6zM284 245v1h1v-1zM284 247v1h1v-1zM284 319v1h1v-1zM285 68v8h1v-8zM285 249v1h1v-1zM285 251v1h1v-1zM285 288v1h1v-1zM285 307v1h1v-1zM285 530v7h1v-7zM286 253v1h1v-1zM286 255v1h1v-1zM286 317v1h1v-1zM286 523v7h1v-7zM287 257v1h1v-1zM287 289v1h1v-1zM287 306v1h1v-1zM287 315v1h1v-1zM288 259v1h1v-1zM288 261v1h1v-1zM289 263v1h1v-1zM289 265v1h1v-1zM289 291v1h1v-1zM289 305v1h1v-1zM289 313v1h1v-1zM290 267v1h1v-1zM290 269v1h1v-1zM290 311v1h1v-1zM291 271v1h1v-1zM291 292v1h1v-1zM291 303v1h1v-1zM292 273v1h1v-1zM292 275v1h1v-1zM292 309v1h1v-1zM293 61v14h1v-14zM293 277v1h1v-1zM293 279v1h1v-1zM293 294v1h1v-1zM293 302v1h1v-1zM293 307v1h1v-1zM294 281v1h1v-1zM294 283v1h1v-1zM294 524v14h1v-14zM295 285v1h1v-1zM295 296v1h1v-1zM295 301v1h1v-1zM295 305v1h1v-1zM296 287v1h1v-1zM296 289v1h1v-1zM296 303v1h1v-1zM297 61v14h1v-14zM297 291v1h1v-1zM297 293v1h1v-1zM297 300v1h1v-1zM298 295v1h1v-1zM298 301v1h1v-1zM298 524v14h1v-14zM299 299v1h1v-1zM300 61v14h1v-14zM300 297v1h1v-1zM300 303v1h1v-1zM301 298v1h1v-1zM301 305v1h1v-1zM301 307v1h1v-1zM301 524v14h1v-14zM302 295v1h1v-1zM302 309v1h1v-1zM302 311v1h1v-1zM303 293v1h1v-1zM303 297v1h1v-1zM303 302v1h1v-1zM303 313v1h1v-1zM304 61v14h1v-14zM304 315v1h1v-1zM304 317v1h1v-1zM305 291v1h1v-1zM305 296v1h1v-1zM305 304v1h1v-1zM305 319v1h1v-1zM305 321v1h1v-1zM305 524v14h1v-14zM306 289v1h1v-1zM306 323v1h1v-1zM306 325v1h1v-1zM307 295v1h1v-1zM307 306v1h1v-1zM307 327v1h1v-1zM308 287v1h1v-1zM308 329v1h1v-1zM308 331v1h1v-1zM309 285v1h1v-1zM309 293v1h1v-1zM309 307v1h1v-1zM309 333v1h1v-1zM309 335v1h1v-1zM310 337v1h1v-1zM310 339v1h1v-1zM311 283v1h1v-1zM311 292v1h1v-1zM311 309v1h1v-1zM311 341v1h1v-1zM312 68v8h1v-8zM312 281v1h1v-1zM312 343v1h1v-1zM312 345v1h1v-1zM313 62v6h1v-6zM313 291v1h1v-1zM313 310v1h1v-1zM313 347v1h1v-1zM313 349v1h1v-1zM313 523v7h1v-7zM314 279v1h1v-1zM314 351v1h1v-1zM314 353v1h1v-1zM314 530v7h1v-7zM315 277v1h1v-1zM315 290v1h1v-1zM315 312v1h1v-1zM315 355v1h1v-1zM316 68v8h1v-8zM316 357v1h1v-1zM316 359v1h1v-1zM317 62v6h1v-6zM317 275v1h1v-1zM317 289v1h1v-1zM317 314v1h1v-1zM317 361v1h1v-1zM317 363v1h1v-1zM317 523v7h1v-7zM318 273v1h1v-1zM318 365v1h1v-1zM318 367v1h1v-1zM318 530v7h1v-7zM319 288v1h1v-1zM319 315v1h1v-1zM319 369v1h1v-1zM320 69v7h1v-7zM320 271v1h1v-1zM320 371v1h1v-1zM320 373v1h1v-1zM321 62v7h1v-7zM321 269v1h1v-1zM321 287v1h1v-1zM321 317v1h1v-1zM321 375v1h1v-1zM321 377v1h1v-1zM321 523v7h1v-7zM322 379v1h1v-1zM322 381v1h1v-1zM322 530v7h1v-7zM323 267v1h1v-1zM323 286v1h1v-1zM323 319v1h1v-1zM323 383v1h1v-1zM324 69v7h1v-7zM324 265v1h1v-1zM324 385v1h1v-1zM324 387v1h1v-1zM324 523v3h1v-3zM325 62v7h1v-7zM325 285v1h1v-1zM325 320v1h1v-1zM325 389v1h1v-1zM325 391v1h1v-1zM325 526v7h1v-7zM326 263v1h1v-1zM326 393v1h1v-1zM326 395v1h1v-1zM326 533v4h1v-4zM327 261v1h1v-1zM327 284v1h1v-1zM327 322v1h1v-1zM327 397v1h1v-1zM327 399v1h1v-1zM328 401v1h1v-1zM329 259v1h1v-1zM329 282v1h1v-1zM329 323v1h1v-1zM329 403v1h1v-1zM329 405v1h1v-1zM330 257v1h1v-1zM330 407v1h1v-1zM330 409v1h1v-1zM331 74v3h1v-3zM331 281v1h1v-1zM331 325v1h1v-1zM331 411v1h1v-1zM331 413v1h1v-1zM332 67v7h1v-7zM332 255v1h1v-1zM332 415v1h1v-1zM332 522v3h1v-3zM333 63v4h1v-4zM333 253v1h1v-1zM333 280v1h1v-1zM333 327v1h1v-1zM333 417v1h1v-1zM333 419v1h1v-1zM333 525v7h1v-7zM334 421v1h1v-1zM334 423v1h1v-1zM334 532v3h1v-3zM335 74v4h1v-4zM335 251v1h1v-1zM335 279v1h1v-1zM335 328v1h1v-1zM335 425v1h1v-1zM335 427v1h1v-1zM336 68v6h1v-6zM336 249v1h1v-1zM336 429v1h1v-1zM336 521v4h1v-4zM337 64v4h1v-4zM337 278v1h1v-1zM337 330v1h1v-1zM337 431v1h1v-1zM337 433v1h1v-1zM337 525v6h1v-6zM338 247v1h1v-1zM338 435v1h1v-1zM338 437v1h1v-1zM338 531v3h1v-3zM339 76v3h1v-3zM339 245v1h1v-1zM339 277v1h1v-1zM339 332v1h1v-1zM339 439v1h1v-1zM339 441v1h1v-1zM340 71v5h1v-5zM340 443v1h1v-1zM340 520v3h1v-3zM341 67v4h1v-4zM341 243v1h1v-1zM341 276v1h1v-1zM341 333v1h1v-1zM341 445v1h1v-1zM341 447v1h1v-1zM341 523v4h1v-4zM342 65v2h1v-2zM342 241v1h1v-1zM342 449v1h1v-1zM342 451v1h1v-1zM342 527v4h1v-4zM343 77v3h1v-3zM343 275v1h1v-1zM343 335v1h1v-1zM343 453v1h1v-1zM343 455v1h1v-1zM343 531v3h1v-3zM344 72v5h1v-5zM344 239v1h1v-1zM344 457v1h1v-1zM344 519v3h1v-3zM345 68v4h1v-4zM345 237v1h1v-1zM345 274v1h1v-1zM345 336v1h1v-1zM345 459v1h1v-1zM345 461v1h1v-1zM345 522v4h1v-4zM346 66v2h1v-2zM346 235v1h1v-1zM346 463v1h1v-1zM346 465v1h1v-1zM346 526v5h1v-5zM347 273v1h1v-1zM347 338v1h1v-1zM347 467v1h1v-1zM347 469v1h1v-1zM347 531v2h1v-2zM348 233v1h1v-1zM348 471v1h1v-1zM349 231v1h1v-1zM349 271v1h1v-1zM349 340v1h1v-1zM349 473v1h1v-1zM349 475v1h1v-1zM350 477v1h1v-1zM350 479v1h1v-1zM351 78v3h1v-3zM351 229v1h1v-1zM351 270v1h1v-1zM351 341v1h1v-1zM351 481v1h1v-1zM351 483v1h1v-1zM352 74v4h1v-4zM352 227v1h1v-1zM352 485v1h1v-1zM352 517v3h1v-3zM353 70v4h1v-4zM353 269v1h1v-1zM353 343v1h1v-1zM353 520v4h1v-4zM354 68v2h1v-2zM354 80v2h1v-2zM354 225v1h1v-1zM354 524v5h1v-5zM355 77v3h1v-3zM355 223v1h1v-1zM355 268v1h1v-1zM355 345v1h1v-1zM355 517v2h1v-2zM355 529v2h1v-2zM356 73v4h1v-4zM356 519v3h1v-3zM357 70v3h1v-3zM357 221v1h1v-1zM357 267v1h1v-1zM357 346v1h1v-1zM357 522v4h1v-4zM358 68v2h1v-2zM358 81v2h1v-2zM358 219v1h1v-1zM358 526v3h1v-3zM359 78v3h1v-3zM359 266v1h1v-1zM359 348v1h1v-1zM359 515v2h1v-2zM359 529v1h1v-1zM360 74v4h1v-4zM360 217v1h1v-1zM360 517v4h1v-4zM361 71v3h1v-3zM361 215v1h1v-1zM361 265v1h1v-1zM361 349v1h1v-1zM361 521v3h1v-3zM362 69v2h1v-2zM362 82v2h1v-2zM362 524v4h1v-4zM363 79v3h1v-3zM363 213v1h1v-1zM363 264v1h1v-1zM363 351v1h1v-1zM363 514v2h1v-2zM363 528v1h1v-1zM364 75v4h1v-4zM364 211v1h1v-1zM364 516v3h1v-3zM365 72v3h1v-3zM365 263v1h1v-1zM365 353v1h1v-1zM365 519v4h1v-4zM366 70v2h1v-2zM366 209v1h1v-1zM366 523v3h1v-3zM367 207v1h1v-1zM367 262v1h1v-1zM367 354v1h1v-1zM367 526v2h1v-2zM369 205v1h1v-1zM369 260v1h1v-1zM369 356v1h1v-1zM370 85v2h1v-2zM370 203v1h1v-1zM370 512v2h1v-2zM371 82v3h1v-3zM371 259v1h1v-1zM371 358v1h1v-1zM371 514v2h1v-2zM372 78v4h1v-4zM372 201v1h1v-1zM372 516v3h1v-3zM373 75v3h1v-3zM373 86v2h1v-2zM373 199v1h1v-1zM373 258v1h1v-1zM373 359v1h1v-1zM373 519v3h1v-3zM374 73v2h1v-2zM374 84v2h1v-2zM374 511v2h1v-2zM374 522v2h1v-2zM375 81v3h1v-3zM375 197v1h1v-1zM375 257v1h1v-1zM375 361v1h1v-1zM375 513v2h1v-2zM375 524v1h1v-1zM376 78v3h1v-3zM376 195v1h1v-1zM376 515v3h1v-3zM377 76v2h1v-2zM377 87v2h1v-2zM377 256v1h1v-1zM377 362v1h1v-1zM377 518v3h1v-3zM378 74v2h1v-2zM378 85v2h1v-2zM378 193v1h1v-1zM378 509v2h1v-2zM378 521v2h1v-2zM379 82v3h1v-3zM379 191v1h1v-1zM379 255v1h1v-1zM379 364v1h1v-1zM379 511v2h1v-2zM379 523v1h1v-1zM380 80v2h1v-2zM380 513v3h1v-3zM381 78v2h1v-2zM381 89v2h1v-2zM381 189v1h1v-1zM381 254v1h1v-1zM381 366v1h1v-1zM381 508v2h1v-2zM381 516v3h1v-3zM382 76v2h1v-2zM382 87v2h1v-2zM382 187v1h1v-1zM382 510v2h1v-2zM382 519v2h1v-2zM383 84v3h1v-3zM383 253v1h1v-1zM383 367v1h1v-1zM383 512v2h1v-2zM383 521v2h1v-2zM384 81v3h1v-3zM384 185v1h1v-1zM384 514v2h1v-2zM385 79v2h1v-2zM385 183v1h1v-1zM385 252v1h1v-1zM385 369v1h1v-1zM385 516v2h1v-2zM386 77v2h1v-2zM386 518v2h1v-2zM387 181v1h1v-1zM387 251v1h1v-1zM387 371v1h1v-1zM387 520v1h1v-1zM388 92v1h1v-1zM388 179v1h1v-1zM389 90v2h1v-2zM389 249v1h1v-1zM389 372v1h1v-1zM389 505v2h1v-2zM390 87v3h1v-3zM390 177v1h1v-1zM390 507v2h1v-2zM391 84v3h1v-3zM391 175v1h1v-1zM391 248v1h1v-1zM391 374v1h1v-1zM391 509v2h1v-2zM392 82v2h1v-2zM392 93v2h1v-2zM392 173v1h1v-1zM392 504v1h1v-1zM392 511v3h1v-3zM393 81v1h1v-1zM393 91v2h1v-2zM393 247v1h1v-1zM393 375v1h1v-1zM393 505v2h1v-2zM393 514v2h1v-2zM394 88v3h1v-3zM394 171v1h1v-1zM394 507v2h1v-2zM394 516v2h1v-2zM395 86v2h1v-2zM395 95v2h1v-2zM395 169v1h1v-1zM395 246v1h1v-1zM395 377v1h1v-1zM395 509v2h1v-2zM396 84v2h1v-2zM396 93v2h1v-2zM396 502v1h1v-1zM396 511v2h1v-2zM397 82v2h1v-2zM397 91v2h1v-2zM397 167v1h1v-1zM397 245v1h1v-1zM397 379v1h1v-1zM397 503v2h1v-2zM397 513v2h1v-2zM398 89v2h1v-2zM398 165v1h1v-1zM398 505v2h1v-2zM398 515v1h1v-1zM399 87v2h1v-2zM399 97v2h1v-2zM399 244v1h1v-1zM399 380v1h1v-1zM399 500v1h1v-1zM399 507v2h1v-2zM400 85v2h1v-2zM400 95v2h1v-2zM400 163v1h1v-1zM400 501v2h1v-2zM400 509v2h1v-2zM401 84v1h1v-1zM401 93v2h1v-2zM401 161v1h1v-1zM401 243v1h1v-1zM401 382v1h1v-1zM401 503v2h1v-2zM401 511v2h1v-2zM402 91v2h1v-2zM402 505v1h1v-1zM402 513v1h1v-1zM403 89v2h1v-2zM403 159v1h1v-1zM403 242v1h1v-1zM403 384v1h1v-1zM403 506v2h1v-2zM404 87v2h1v-2zM404 157v1h1v-1zM404 508v2h1v-2zM405 86v1h1v-1zM405 241v1h1v-1zM405 385v1h1v-1zM405 510v2h1v-2zM406 100v2h1v-2zM406 155v1h1v-1zM407 98v2h1v-2zM407 153v1h1v-1zM407 240v1h1v-1zM407 387v1h1v-1zM407 497v2h1v-2zM408 96v2h1v-2zM408 499v2h1v-2zM409 94v2h1v-2zM409 103v1h1v-1zM409 151v1h1v-1zM409 238v1h1v-1zM409 388v1h1v-1zM409 501v1h1v-1zM410 92v2h1v-2zM410 101v2h1v-2zM410 149v1h1v-1zM410 502v2h1v-2zM411 90v2h1v-2zM411 99v2h1v-2zM411 237v1h1v-1zM411 390v1h1v-1zM411 495v2h1v-2zM411 504v2h1v-2zM412 97v2h1v-2zM412 105v1h1v-1zM412 147v1h1v-1zM412 497v2h1v-2zM412 506v2h1v-2zM413 96v1h1v-1zM413 103v2h1v-2zM413 145v1h1v-1zM413 236v1h1v-1zM413 392v1h1v-1zM413 499v1h1v-1zM413 508v1h1v-1zM414 94v2h1v-2zM414 101v2h1v-2zM414 493v2h1v-2zM414 500v2h1v-2zM415 92v2h1v-2zM415 99v2h1v-2zM415 235v1h1v-1zM415 393v1h1v-1zM415 495v2h1v-2zM415 502v2h1v-2zM416 98v1h1v-1zM416 107v1h1v-1zM416 497v1h1v-1zM416 504v2h1v-2zM417 96v2h1v-2zM417 105v2h1v-2zM417 234v1h1v-1zM417 395v1h1v-1zM417 490v1h1v-1zM417 498v2h1v-2zM417 506v1h1v-1zM418 94v2h1v-2zM418 104v1h1v-1zM418 491v2h1v-2zM418 500v2h1v-2zM419 102v2h1v-2zM419 233v1h1v-1zM419 397v1h1v-1zM419 493v2h1v-2zM419 502v2h1v-2zM420 100v2h1v-2zM420 495v1h1v-1zM420 504v1h1v-1zM421 99v1h1v-1zM421 232v1h1v-1zM421 398v1h1v-1zM421 496v2h1v-2zM422 97v2h1v-2zM422 111v1h1v-1zM422 498v2h1v-2zM423 96v1h1v-1zM423 109v2h1v-2zM423 231v1h1v-1zM423 400v1h1v-1zM423 500v2h1v-2zM424 108v1h1v-1zM424 487v2h1v-2zM424 502v1h1v-1zM425 107v1h1v-1zM425 230v1h1v-1zM425 401v1h1v-1zM425 489v1h1v-1zM426 105v2h1v-2zM426 114v1h1v-1zM426 484v1h1v-1zM426 490v2h1v-2zM427 104v1h1v-1zM427 112v2h1v-2zM427 229v1h1v-1zM427 403v1h1v-1zM427 485v2h1v-2zM427 492v1h1v-1zM428 103v1h1v-1zM428 110v2h1v-2zM428 487v1h1v-1zM428 493v2h1v-2zM429 101v2h1v-2zM429 108v2h1v-2zM429 116v1h1v-1zM429 227v1h1v-1zM429 405v1h1v-1zM429 488v1h1v-1zM429 495v1h1v-1zM430 107v1h1v-1zM430 114v2h1v-2zM430 482v1h1v-1zM430 489v2h1v-2zM430 496v2h1v-2zM431 105v2h1v-2zM431 113v1h1v-1zM431 226v1h1v-1zM431 406v1h1v-1zM431 483v2h1v-2zM431 491v1h1v-1zM432 103v2h1v-2zM432 112v1h1v-1zM432 118v1h1v-1zM432 485v1h1v-1zM432 492v1h1v-1zM433 110v2h1v-2zM433 116v2h1v-2zM433 225v1h1v-1zM433 408v1h1v-1zM433 479v1h1v-1zM433 486v1h1v-1zM433 493v2h1v-2zM434 109v1h1v-1zM434 115v1h1v-1zM434 480v2h1v-2zM434 487v2h1v-2zM434 495v1h1v-1zM435 108v1h1v-1zM435 114v1h1v-1zM435 224v1h1v-1zM435 410v1h1v-1zM435 482v1h1v-1zM435 489v1h1v-1zM436 106v2h1v-2zM436 112v2h1v-2zM436 483v1h1v-1zM436 490v1h1v-1zM437 111v1h1v-1zM437 223v1h1v-1zM437 411v1h1v-1zM437 484v2h1v-2zM437 491v2h1v-2zM438 110v1h1v-1zM438 123v1h1v-1zM438 486v1h1v-1zM439 108v2h1v-2zM439 122v1h1v-1zM439 222v1h1v-1zM439 413v1h1v-1zM439 475v1h1v-1zM439 487v1h1v-1zM440 120v2h1v-2zM440 476v1h1v-1zM440 488v2h1v-2zM441 119v1h1v-1zM441 125v1h1v-1zM441 221v1h1v-1zM441 414v1h1v-1zM441 477v1h1v-1zM441 490v1h1v-1zM442 118v1h1v-1zM442 124v1h1v-1zM442 472v1h1v-1zM442 478v1h1v-1zM443 117v1h1v-1zM443 123v1h1v-1zM443 220v1h1v-1zM443 416v1h1v-1zM443 473v1h1v-1zM443 479v1h1v-1zM444 116v1h1v-1zM444 122v1h1v-1zM444 128v1h1v-1zM444 474v2h1v-2zM444 480v2h1v-2zM445 114v2h1v-2zM445 120v2h1v-2zM445 127v1h1v-1zM445 219v1h1v-1zM445 418v1h1v-1zM445 470v1h1v-1zM445 476v1h1v-1zM445 482v1h1v-1zM446 113v1h1v-1zM446 119v1h1v-1zM446 125v2h1v-2zM446 471v1h1v-1zM446 477v1h1v-1zM446 483v1h1v-1zM447 118v1h1v-1zM447 124v1h1v-1zM447 130v1h1v-1zM447 218v1h1v-1zM447 419v1h1v-1zM447 472v1h1v-1zM447 478v1h1v-1zM447 484v1h1v-1zM448 117v1h1v-1zM448 123v1h1v-1zM448 129v1h1v-1zM448 467v1h1v-1zM448 473v1h1v-1zM448 479v1h1v-1zM449 116v1h1v-1zM449 122v1h1v-1zM449 128v1h1v-1zM449 216v1h1v-1zM449 421v1h1v-1zM449 468v1h1v-1zM449 474v1h1v-1zM449 480v2h1v-2zM450 115v1h1v-1zM450 121v1h1v-1zM450 127v1h1v-1zM450 469v1h1v-1zM450 475v2h1v-2zM450 482v1h1v-1zM451 119v2h1v-2zM451 125v2h1v-2zM451 215v1h1v-1zM451 470v1h1v-1zM451 477v1h1v-1zM452 118v1h1v-1zM452 124v1h1v-1zM452 471v1h1v-1zM452 478v1h1v-1zM453 123v1h1v-1zM453 136v1h1v-1zM453 214v1h1v-1zM453 472v2h1v-2zM453 479v1h1v-1zM454 122v1h1v-1zM454 135v1h1v-1zM454 462v1h1v-1zM454 474v1h1v-1zM455 121v1h1v-1zM455 134v1h1v-1zM455 213v1h1v-1zM455 463v1h1v-1zM455 475v1h1v-1zM456 120v1h1v-1zM456 133v1h1v-1zM456 138v1h1v-1zM456 464v1h1v-1zM456 476v1h1v-1zM457 132v1h1v-1zM457 137v1h1v-1zM457 212v1h1v-1zM457 459v1h1v-1zM457 465v1h1v-1zM457 477v1h1v-1zM458 131v1h1v-1zM458 136v1h1v-1zM458 460v1h1v-1zM458 466v1h1v-1zM459 130v1h1v-1zM459 135v1h1v-1zM459 141v1h1v-1zM459 211v1h1v-1zM459 461v1h1v-1zM459 467v2h1v-2zM460 129v1h1v-1zM460 134v1h1v-1zM460 140v1h1v-1zM460 456v1h1v-1zM460 462v1h1v-1zM460 469v1h1v-1zM461 128v1h1v-1zM461 139v1h1v-1zM461 210v1h1v-1zM461 457v1h1v-1zM461 463v1h1v-1zM461 470v1h1v-1zM462 127v1h1v-1zM462 138v1h1v-1zM462 144v1h1v-1zM462 453v1h1v-1zM462 458v1h1v-1zM462 464v2h1v-2zM462 471v1h1v-1zM463 126v1h1v-1zM463 132v1h1v-1zM463 137v1h1v-1zM463 143v1h1v-1zM463 209v1h1v-1zM463 454v1h1v-1zM463 459v1h1v-1zM463 466v1h1v-1zM463 472v1h1v-1zM464 131v1h1v-1zM464 142v1h1v-1zM464 455v1h1v-1zM464 460v1h1v-1zM464 467v1h1v-1zM465 130v1h1v-1zM465 141v1h1v-1zM465 208v1h1v-1zM465 456v1h1v-1zM465 461v2h1v-2zM465 468v1h1v-1zM466 129v1h1v-1zM466 135v1h1v-1zM466 140v1h1v-1zM466 457v1h1v-1zM466 463v1h1v-1zM466 469v1h1v-1zM467 134v1h1v-1zM467 150v1h1v-1zM467 207v1h1v-1zM467 458v1h1v-1zM467 464v1h1v-1zM468 133v1h1v-1zM468 149v1h1v-1zM468 447v1h1v-1zM468 459v1h1v-1zM468 465v1h1v-1zM469 132v1h1v-1zM469 138v1h1v-1zM469 148v1h1v-1zM469 448v1h1v-1zM469 460v1h1v-1zM469 466v1h1v-1zM470 137v1h1v-1zM470 147v1h1v-1zM470 153v1h1v-1zM470 444v1h1v-1zM470 449v1h1v-1zM470 461v1h1v-1zM471 136v1h1v-1zM471 146v1h1v-1zM471 152v1h1v-1zM471 445v1h1v-1zM471 450v1h1v-1zM471 462v1h1v-1zM472 135v1h1v-1zM472 151v1h1v-1zM472 156v1h1v-1zM472 451v1h1v-1zM472 463v1h1v-1zM473 150v1h1v-1zM473 155v1h1v-1zM473 441v1h1v-1zM474 144v1h1v-1zM474 149v1h1v-1zM474 442v1h1v-1zM474 447v1h1v-1zM475 143v1h1v-1zM475 159v1h1v-1zM475 438v1h1v-1zM475 443v1h1v-1zM475 448v1h1v-1zM475 453v1h1v-1zM476 142v1h1v-1zM476 153v1h1v-1zM476 158v1h1v-1zM476 439v1h1v-1zM476 444v1h1v-1zM476 449v1h1v-1zM476 454v1h1v-1zM477 141v1h1v-1zM477 147v1h1v-1zM477 152v1h1v-1zM477 157v1h1v-1zM477 445v1h1v-1zM477 450v1h1v-1zM477 455v1h1v-1zM478 146v1h1v-1zM478 151v1h1v-1zM478 156v1h1v-1zM478 456v1h1v-1zM479 145v1h1v-1zM479 150v1h1v-1zM479 155v1h1v-1zM479 165v1h1v-1zM479 441v1h1v-1zM480 432v1h1v-1zM480 442v1h1v-1zM480 447v1h1v-1zM480 452v1h1v-1zM481 443v1h1v-1zM481 448v1h1v-1zM482 148v1h1v-1zM482 153v1h1v-1zM482 163v1h1v-1zM482 168v1h1v-1zM482 429v1h1v-1zM482 444v1h1v-1zM482 449v1h1v-1zM483 152v1h1v-1zM483 162v1h1v-1zM483 434v1h1v-1zM483 450v1h1v-1zM484 151v1h1v-1zM484 172v1h1v-1zM484 426v1h1v-1zM484 435v1h1v-1zM485 166v1h1v-1zM485 431v1h1v-1zM485 446v1h1v-1zM486 160v1h1v-1zM486 165v1h1v-1zM486 432v1h1v-1zM487 159v1h1v-1zM487 170v1h1v-1zM487 422v1h1v-1zM487 437v1h1v-1zM488 169v1h1v-1zM488 438v1h1v-1zM489 163v1h1v-1zM489 173v1h1v-1zM489 429v1h1v-1zM489 434v1h1v-1zM490 157v1h1v-1zM490 162v1h1v-1zM490 181v1h1v-1zM490 424v1h1v-1zM490 435v1h1v-1zM491 167v1h1v-1zM491 416v1h1v-1zM491 425v1h1v-1zM492 166v1h1v-1zM492 171v1h1v-1zM493 412v1h1v-1zM494 418v1h1v-1zM494 427v1h1v-1zM495 164v1h1v-1zM495 169v1h1v-1zM495 178v1h1v-1zM495 409v1h1v-1zM495 428v1h1v-1zM497 182v1h1v-1zM497 406v1h1v-1zM498 415v1h1v-1zM499 185v1h1v-1zM499 421v1h1v-1zM500 199v1h1v-1zM500 412v1h1v-1zM501 189v1h1v-1zM502 174v1h1v-1zM502 202v1h1v-1zM502 395v1h1v-1zM502 423v1h1v-1zM504 178v1h1v-1zM504 206v1h1v-1zM505 196v1h1v-1zM506 181v1h1v-1zM506 388v1h1v-1zM508 185v1h1v-1zM508 412v1h1v-1zM509 217v1h1v-1zM512 192v1h1v-1zM512 405v1h1v-1zM513 196v1h1v-1zM515 200v1h1v-1zM517 393v1h1v-1zM520 211v1h1v-1zM523 219v1h1v-1zM524 223v1h1v-1zM528 235v1h1v-1zM529 239v1h1v-1z"/>
<path fill="#ff0" d="M423 58h3v1h-3zM412 59h2v1h-2zM419 59h2v1h-2zM423 64h3v1h-3zM746 117h6v1h-6zM746 123h6v1h-6zM747 158h3v1h-3zM328 159h2v1h-2zM744 161h4v1h-4zM749 161h4v1h-4zM744 163h9v1h-9zM745 197h2v1h-2zM748 197h2v1h-2zM747 198h2v1h-2zM750 198h2v1h-2zM745 202h2v1h-2zM748 202h2v1h-2zM747 203h2v1h-2zM750 203h2v1h-2zM745 297h5v1h-5zM749 299h2v1h-2zM747 300h2v1h-2zM33 305h2v1h-2zM40 305h2v1h-2zM35 306h5v1h-5zM33 307h2v1h-2zM40 307h2v1h-2zM33 317h2v1h-2zM40 317h2v1h-2zM35 318h5v1h-5zM134 377h9v1h-9zM142 381h3v1h-3zM138 383h3v1h-3zM445 515h2v1h-2zM442 517h2v1h-2zM31 302v1h1v-1zM31 310v5h1v-5zM32 303v2h1v-2zM32 308v2h1v-2zM32 315v2h1v-2zM42 303v2h1v-2zM42 308v2h1v-2zM42 315v2h1v-2zM43 302v1h1v-1zM43 310v5h1v-5zM138 375v2h1v-2zM138 378v5h1v-5zM138 384v6h1v-6zM141 382v1h1v-1zM144 387v3h1v-3zM145 382v1h1v-1zM145 386v1h1v-1zM145 390v1h1v-1zM146 383v3h1v-3zM146 391v1h1v-1zM167 369v1h1v-1zM316 157v1h1v-1zM320 157v1h1v-1zM324 158v1h1v-1zM330 153v1h1v-1zM333 160v1h1v-1zM337 161v1h1v-1zM341 162v1h1v-1zM345 163v1h1v-1zM392 190v1h1v-1zM396 194v1h1v-1zM400 197v1h1v-1zM404 201v1h1v-1zM407 205v1h1v-1zM411 60v1h1v-1zM411 209v1h1v-1zM413 58v1h1v-1zM413 60v7h1v-7zM414 67v1h1v-1zM414 213v1h1v-1zM415 68v5h1v-5zM416 67v1h1v-1zM416 216v1h1v-1zM417 62v5h1v-5zM417 218v1h1v-1zM418 61v1h1v-1zM418 220v1h1v-1zM419 58v1h1v-1zM419 60v1h1v-1zM420 61v1h1v-1zM421 60v1h1v-1zM421 62v1h1v-1zM422 59v1h1v-1zM422 63v1h1v-1zM424 65v1h1v-1zM425 66v1h1v-1zM425 74v1h1v-1zM426 59v1h1v-1zM426 63v1h1v-1zM426 67v1h1v-1zM426 73v1h1v-1zM427 60v3h1v-3zM427 68v5h1v-5zM432 512v1h1v-1zM433 513v1h1v-1zM434 514v13h1v-13zM435 513v1h1v-1zM436 512v1h1v-1zM437 513v1h1v-1zM438 514v13h1v-13zM439 513v1h1v-1zM440 512v1h1v-1zM441 513v1h1v-1zM442 514v3h1v-3zM442 518v7h1v-7zM442 528v1h1v-1zM443 525v1h1v-1zM443 527v1h1v-1zM444 516v1h1v-1zM444 526v1h1v-1zM445 525v1h1v-1zM445 527v1h1v-1zM446 514v1h1v-1zM446 516v9h1v-9zM446 528v1h1v-1zM744 199v1h1v-1zM744 204v1h1v-1zM745 116v1h1v-1zM745 124v1h1v-1zM745 198v1h1v-1zM745 203v1h1v-1zM746 159v2h1v-2zM746 196v1h1v-1zM746 201v1h1v-1zM747 118v5h1v-5zM747 199v1h1v-1zM747 204v1h1v-1zM747 296v1h1v-1zM747 298v2h1v-2zM747 301v3h1v-3zM749 196v1h1v-1zM749 201v1h1v-1zM750 118v5h1v-5zM750 159v2h1v-2zM750 199v1h1v-1zM750 204v1h1v-1zM750 302v2h1v-2zM751 197v1h1v-1zM751 202v1h1v-1zM751 300v2h1v-2zM751 304v1h1v-1zM752 116v1h1v-1zM752 124v1h1v-1zM752 196v1h1v-1zM752 201v1h1v-1z"/>
<path fill="#0ff" d="M276 157h2v1h-2zM278 158h3v1h-3zM281 159h2v1h-2zM283 160h2v1h-2zM289 162h2v1h-2zM291 163h2v1h-2zM351 183h3v1h-3zM354 184h2v1h-2zM243 167v1h1v-1zM245 167v1h1v-1zM247 168v1h1v-1zM249 168v1h1v-1zM251 168v1h1v-1zM253 169v1h1v-1zM255 169v1h1v-1zM257 169v1h1v-1zM259 170v1h1v-1zM261 170v1h1v-1zM263 170v1h1v-1zM265 170v1h1v-1zM267 171v1h1v-1zM269 171v1h1v-1zM271 171v1h1v-1zM273 172v1h1v-1zM275 172v1h1v-1zM277 172v1h1v-1zM279 172v1h1v-1zM281 173v1h1v-1zM283 173v1h1v-1zM285 161v1h1v-1zM285 173v1h1v-1zM286 160v1h1v-1zM287 162v1h1v-1zM287 174v1h1v-1zM288 161v1h1v-1zM289 174v1h1v-1zM291 174v1h1v-1zM293 164v1h1v-1zM293 175v1h1v-1zM294 163v1h1v-1zM295 165v1h1v-1zM295 175v1h1v-1zM296 164v1h1v-1zM297 166v1h1v-1zM297 175v1h1v-1zM298 165v1h1v-1zM299 166v1h1v-1zM299 175v1h1v-1zM300 165v1h1v-1zM301 167v1h1v-1zM301 176v1h1v-1zM302 166v1h1v-1zM303 168v1h1v-1zM303 176v1h1v-1zM304 167v1h1v-1zM305 169v1h1v-1zM305 176v1h1v-1zM306 167v1h1v-1zM307 170v1h1v-1zM307 177v1h1v-1zM308 168v1h1v-1zM309 171v1h1v-1zM309 177v1h1v-1zM310 169v1h1v-1zM311 171v1h1v-1zM311 177v1h1v-1zM312 169v1h1v-1zM313 172v1h1v-1zM313 177v1h1v-1zM314 170v1h1v-1zM315 173v1h1v-1zM315 178v1h1v-1zM316 171v1h1v-1zM317 174v1h1v-1zM317 178v1h1v-1zM318 171v1h1v-1zM319 175v1h1v-1zM319 178v1h1v-1zM320 172v1h1v-1zM321 175v1h1v-1zM321 179v1h1v-1zM322 173v1h1v-1zM323 176v1h1v-1zM323 179v1h1v-1zM324 174v1h1v-1zM325 177v1h1v-1zM325 179v1h1v-1zM326 174v1h1v-1zM327 178v1h1v-1zM327 180v1h1v-1zM328 175v1h1v-1zM329 179v2h1v-2zM330 176v1h1v-1zM331 180v1h1v-1zM332 176v1h1v-1zM333 180v1h1v-1zM334 177v1h1v-1zM335 181v1h1v-1zM336 178v1h1v-1zM337 181v2h1v-2zM338 178v1h1v-1zM339 181v1h1v-1zM339 183v1h1v-1zM340 179v1h1v-1zM341 182v1h1v-1zM341 184v1h1v-1zM342 180v1h1v-1zM343 182v1h1v-1zM343 184v1h1v-1zM344 180v1h1v-1zM345 182v1h1v-1zM345 185v1h1v-1zM346 181v1h1v-1zM347 183v1h1v-1zM347 186v1h1v-1zM348 182v1h1v-1zM349 183v1h1v-1zM349 187v1h1v-1zM350 182v1h1v-1zM351 188v1h1v-1zM353 189v1h1v-1zM355 189v1h1v-1zM356 185v1h1v-1zM357 184v1h1v-1zM357 190v1h1v-1zM358 185v1h1v-1zM359 184v1h1v-1zM359 191v1h1v-1zM360 186v1h1v-1zM361 185v1h1v-1zM361 192v1h1v-1zM362 187v1h1v-1zM363 185v1h1v-1zM363 193v1h1v-1zM364 187v1h1v-1zM365 185v1h1v-1zM365 193v1h1v-1zM366 188v1h1v-1zM367 185v1h1v-1zM367 194v1h1v-1zM368 189v1h1v-1zM369 186v1h1v-1zM369 195v1h1v-1zM370 189v1h1v-1zM371 186v1h1v-1zM371 196v1h1v-1zM372 190v1h1v-1zM373 186v1h1v-1zM373 197v1h1v-1zM374 191v1h1v-1zM375 187v1h1v-1zM375 198v1h1v-1zM376 191v1h1v-1zM377 187v1h1v-1zM377 198v1h1v-1zM378 192v1h1v-1zM379 187v1h1v-1zM379 199v1h1v-1zM380 193v1h1v-1zM381 188v1h1v-1zM381 200v1h1v-1zM382 193v1h1v-1zM383 188v1h1v-1zM383 201v1h1v-1zM384 194v1h1v-1zM385 188v1h1v-1zM385 202v1h1v-1zM386 195v1h1v-1zM387 188v1h1v-1zM387 203v1h1v-1zM388 196v1h1v-1zM389 189v1h1v-1zM389 203v1h1v-1zM390 196v1h1v-1zM391 189v1h1v-1zM391 204v1h1v-1zM392 197v1h1v-1zM393 205v1h1v-1zM394 198v1h1v-1zM395 206v1h1v-1zM396 198v1h1v-1zM397 207v1h1v-1zM398 199v1h1v-1zM399 207v1h1v-1zM400 200v1h1v-1zM401 208v1h1v-1zM402 200v1h1v-1zM403 209v1h1v-1zM405 210v1h1v-1zM407 211v1h1v-1zM409 212v1h1v-1zM411 212v1h1v-1zM413 213v1h1v-1zM415 214v1h1v-1z"/>
<path fill="#008080" d="M747 336h3v1h-3zM745 342h2v1h-2zM750 342h2v1h-2zM169 417h5v1h-5zM165 429h3v1h-3zM175 429h3v1h-3zM163 431v1h1v-1zM164 430v1h1v-1zM164 432v1h1v-1zM165 421v5h1v-5zM165 433v1h1v-1zM166 420v1h1v-1zM166 426v1h1v-1zM166 432v1h1v-1zM167 419v1h1v-1zM167 427v2h1v-2zM167 430v2h1v-2zM168 418v1h1v-1zM174 418v1h1v-1zM175 419v1h1v-1zM175 427v2h1v-2zM175 430v2h1v-2zM176 420v1h1v-1zM176 426v1h1v-1zM176 432v1h1v-1zM177 421v5h1v-5zM177 433v1h1v-1zM178 430v1h1v-1zM178 432v1h1v-1zM179 431v1h1v-1zM193 404v1h1v-1zM744 343v1h1v-1zM745 338v3h1v-3zM745 344v1h1v-1zM746 337v1h1v-1zM746 341v1h1v-1zM746 343v1h1v-1zM750 337v1h1v-1zM750 341v1h1v-1zM750 343v1h1v-1zM751 338v3h1v-3zM751 344v1h1v-1zM752 343v1h1v-1z"/>
</g>
<g filter="url(#ty)">
<text class="o" transform="translate(336.25,132) scale(0.58,1)" fill="#ff0">MC</text>
<text class="o" transform="translate(119.75,308) scale(0.46,1)" fill="#f00">Asc</text>
</g>
<g filter="url(#tx)">
<text class="h" transform="translate(96.5,356) scale(0.85,1)" fill="#f00">1</text>
<text class="h" transform="translate(141.5,442) scale(0.85,1)" fill="#ff0">2</text>
<text class="h" transform="translate(213.5,495) scale(0.85,1)" fill="#0f0">3</text>
<text class="h" transform="translate(306.5,514) scale(0.85,1)" fill="#00f">4</text>
<text class="h" transform="translate(414.5,479) scale(0.85,1)" fill="#f00">5</text>
<text class="h" transform="translate(497.5,374) scale(0.85,1)" fill="#ff0">6</text>
<text class="h" transform="translate(502.5,252) scale(0.85,1)" fill="#0f0">7</text>
<text class="h" transform="translate(457.5,166) scale(0.85,1)" fill="#00f">8</text>
<text class="h" transform="translate(385.5,113) scale(0.85,1)" fill="#f00">9</text>
<text class="h" transform="translate(293.6645,94) scale(0.85,1)" fill="#ff0" letter-spacing="2.74">10</text>
<text class="h" transform="translate(185.6645,129) scale(0.85,1)" fill="#0f0" letter-spacing="2.74">11</text>
<text class="h" transform="translate(102.6645,234) scale(0.85,1)" fill="#00f" letter-spacing="2.74">12</text>
<text class="t" xml:space="preserve" y="14"><tspan x="605.5" fill="#fff">Astrolog 5.40</tspan></text>
<text class="t" xml:space="preserve" y="24"><tspan x="605.5" fill="#c0c0c0">"Check"</tspan></text>
<text class="t" xml:space="preserve" y="34"><tspan x="605.5" fill="#c0c0c0">Mon December 17, 2001</tspan></text>
<text class="t" xml:space="preserve" y="44"><tspan x="605.5" fill="#c0c0c0"> 2:20pm (ST +8:00 GMT)</tspan></text>
<text class="t" xml:space="preserve" y="54"><tspan x="605.5" fill="#c0c0c0">"Taipei"</tspan></text>
<text class="t" xml:space="preserve" y="64"><tspan x="605.5" fill="#c0c0c0">121°31E 25°03N</tspan></text>
<text class="t" xml:space="preserve" y="74"><tspan x="605.5" fill="#c0c0c0">Placidus houses.</tspan></text>
<text class="t" xml:space="preserve" y="84"><tspan x="605.5" fill="#c0c0c0">Tropical, Geocentric.</tspan></text>
<text class="t" xml:space="preserve" y="94"><tspan x="605.5" fill="#c0c0c0">Julian Day = 2452260.7639</tspan></text>
<text class="t" xml:space="preserve" y="114"><tspan x="605.5" fill="#f00"> 1st house: </tspan><tspan x="677.5" fill="#ff0">12Tau23</tspan></text>
<text class="t" xml:space="preserve" y="124"><tspan x="605.5" fill="#ff0"> 2nd house: </tspan><tspan x="677.5" fill="#0f0">11Gem19</tspan></text>
<text class="t" xml:space="preserve" y="134"><tspan x="605.5" fill="#0f0"> 3rd house: </tspan><tspan x="677.5" fill="#00f"> 5Can49</tspan></text>
<text class="t" xml:space="preserve" y="144"><tspan x="605.5" fill="#00f"> 4th house: </tspan><tspan x="677.5" fill="#f00"> 0Leo17</tspan></text>
<text class="t" xml:space="preserve" y="154"><tspan x="605.5" fill="#f00"> 5th house: </tspan><tspan x="677.5" fill="#f00">28Leo24</tspan></text>
<text class="t" xml:space="preserve" y="164"><tspan x="605.5" fill="#ff0"> 6th house: </tspan><tspan x="677.5" fill="#0f0"> 3Lib07</tspan></text>
<text class="t" xml:space="preserve" y="174"><tspan x="605.5" fill="#0f0"> 7th house: </tspan><tspan x="677.5" fill="#00f">12Sco23</tspan></text>
<text class="t" xml:space="preserve" y="184"><tspan x="605.5" fill="#00f"> 8th house: </tspan><tspan x="677.5" fill="#f00">11Sag19</tspan></text>
<text class="t" xml:space="preserve" y="194"><tspan x="605.5" fill="#f00"> 9th house: </tspan><tspan x="677.5" fill="#ff0"> 5Cap49</tspan></text>
<text class="t" xml:space="preserve" y="204"><tspan x="605.5" fill="#ff0">10th house: </tspan><tspan x="677.5" fill="#0f0"> 0Aqu17</tspan></text>
<text class="t" xml:space="preserve" y="214"><tspan x="605.5" fill="#0f0">11th house: </tspan><tspan x="677.5" fill="#0f0">28Aqu24</tspan></text>
<text class="t" xml:space="preserve" y="224"><tspan x="605.5" fill="#00f">12th house: </tspan><tspan x="677.5" fill="#f00"> 3Ari07</tspan></text>
<text class="t" xml:space="preserve" y="244"><tspan x="605.5" fill="#f00"> Sun: </tspan><tspan x="641.5" fill="#f00">25Sag23  </tspan><tspan x="695.5" fill="#c0c0c0">- 0°00'</tspan></text>
<text class="t" xml:space="preserve" y="254"><tspan x="605.5" fill="#00f">Moon: </tspan><tspan x="641.5" fill="#ff0">23Cap35  </tspan><tspan x="695.5" fill="#c0c0c0">- 2°22'</tspan></text>
<text class="t" xml:space="preserve" y="264"><tspan x="605.5" fill="#0f0">Merc: </tspan><tspan x="641.5" fill="#ff0"> 2Cap16  </tspan><tspan x="695.5" fill="#c0c0c0">- 1°55'</tspan></text>
<text class="t" xml:space="preserve" y="274"><tspan x="605.5" fill="#0f0">Venu: </tspan><tspan x="641.5" fill="#f00">18Sag37  </tspan><tspan x="695.5" fill="#c0c0c0">+ 0°11'</tspan></text>
<text class="t" xml:space="preserve" y="284"><tspan x="605.5" fill="#f00">Mars: </tspan><tspan x="641.5" fill="#00f"> 6Pis05  </tspan><tspan x="695.5" fill="#c0c0c0">- 1°00'</tspan></text>
<text class="t" xml:space="preserve" y="294"><tspan x="605.5" fill="#f00">Jupi: </tspan><tspan x="641.5" fill="#00f">12Can36</tspan><tspan x="683.5" fill="#fff">R </tspan><tspan x="695.5" fill="#c0c0c0">- 0°02'</tspan></text>
<text class="t" xml:space="preserve" y="304"><tspan x="605.5" fill="#ff0">Satu: </tspan><tspan x="641.5" fill="#0f0">10Gem23</tspan><tspan x="683.5" fill="#fff">R </tspan><tspan x="695.5" fill="#c0c0c0">- 1°51'</tspan></text>
<text class="t" xml:space="preserve" y="314"><tspan x="605.5" fill="#0f0">Uran: </tspan><tspan x="641.5" fill="#0f0">21Aqu51  </tspan><tspan x="695.5" fill="#c0c0c0">- 0°42'</tspan></text>
<text class="t" xml:space="preserve" y="324"><tspan x="605.5" fill="#00f">Nept: </tspan><tspan x="641.5" fill="#0f0"> 6Aqu58  </tspan><tspan x="695.5" fill="#c0c0c0">+ 0°06'</tspan></text>
<text class="t" xml:space="preserve" y="334"><tspan x="605.5" fill="#00f">Plut: </tspan><tspan x="641.5" fill="#f00">15Sag31  </tspan><tspan x="695.5" fill="#c0c0c0">+ 9°45'</tspan></text>
<text class="t" xml:space="preserve" y="344"><tspan x="605.5" fill="#008080">Node: </tspan><tspan x="641.5" fill="#0f0">27Gem08</tspan><tspan x="683.5" fill="#fff">R </tspan><tspan x="695.5" fill="#c0c0c0">+ 0°00'</tspan></text>
<text class="t" xml:space="preserve" y="364"><tspan x="605.5" fill="#c0c0c0">Fire: 3, Earth: 3,</tspan></text>
<text class="t" xml:space="preserve" y="374"><tspan x="605.5" fill="#c0c0c0">Air : 5, Water: 2</tspan></text>
<text class="t" xml:space="preserve" y="384"><tspan x="605.5" fill="#c0c0c0">Car: 3, Fix: 4, Mut: 6</tspan></text>
<text class="t" xml:space="preserve" y="394"><tspan x="605.5" fill="#c0c0c0">Yang: 8, Yin: 5</tspan></text>
<text class="t" xml:space="preserve" y="404"><tspan x="605.5" fill="#c0c0c0">M: 8, N: 3, A: 6, D: 5</tspan></text>
<text class="t" xml:space="preserve" y="414"><tspan x="605.5" fill="#c0c0c0">Ang: 3, Suc: 6, Cad: 2</tspan></text>
<text class="t" xml:space="preserve" y="424"><tspan x="605.5" fill="#c0c0c0">Learn: 4, Share: 9</tspan></text>
</g>
</svg>
</body></html>
